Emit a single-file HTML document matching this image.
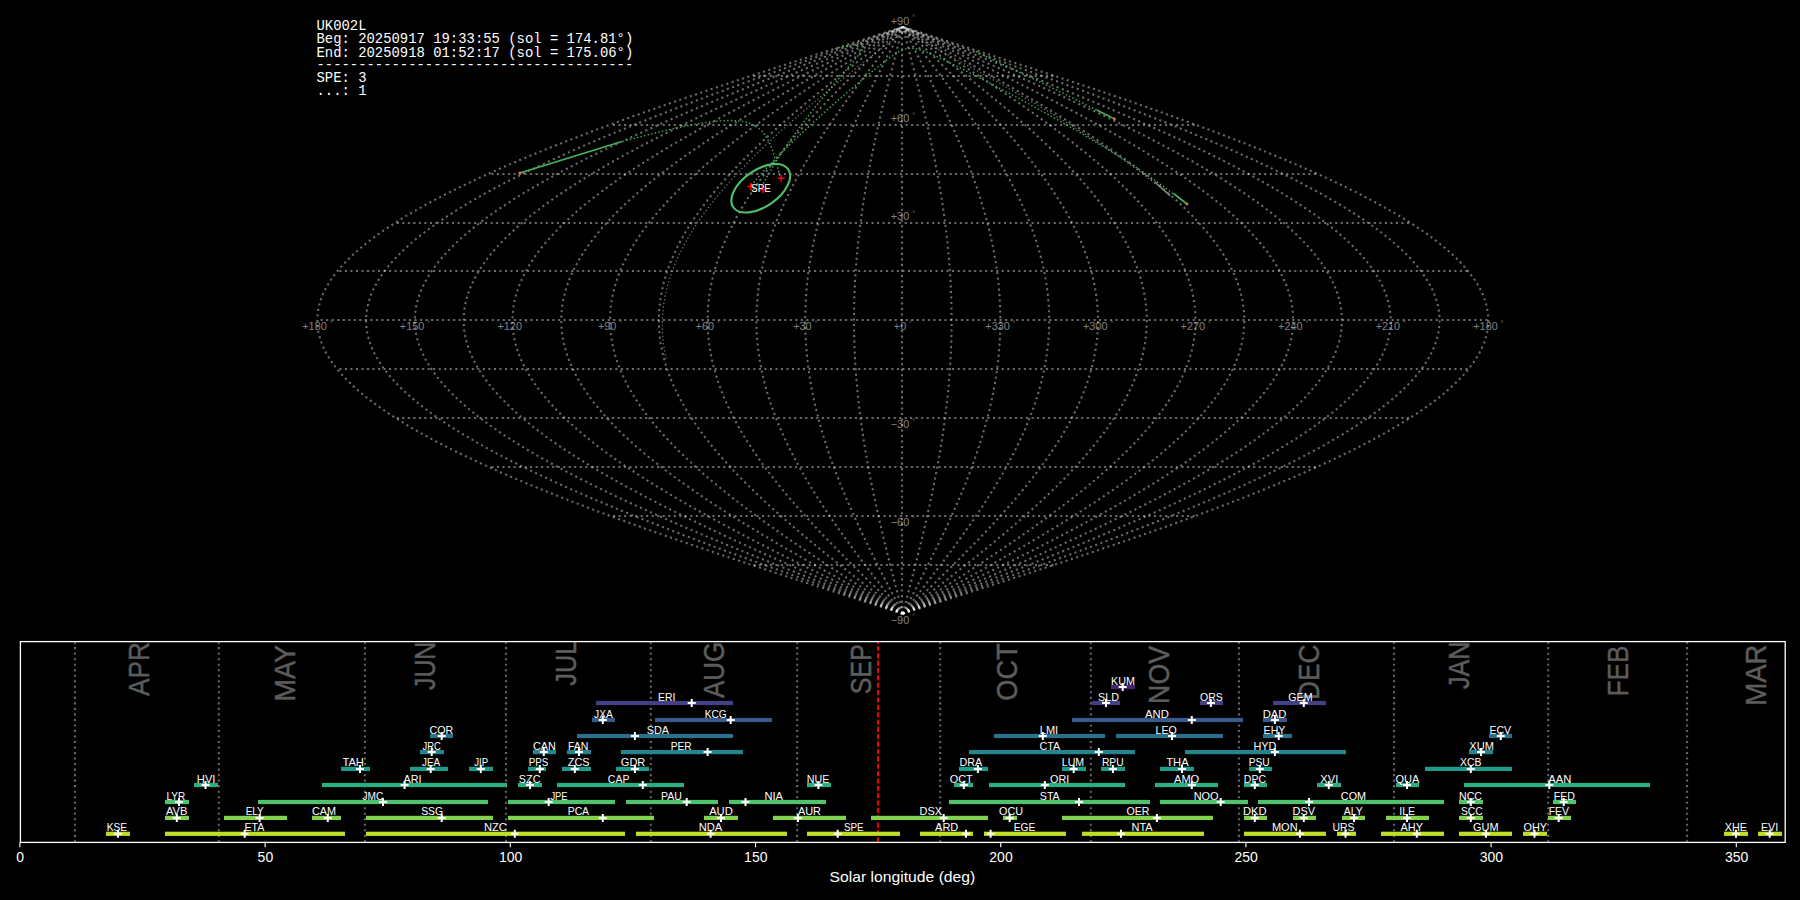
<!DOCTYPE html><html><head><meta charset="utf-8"><style>html,body{margin:0;padding:0;background:#000;width:1800px;height:900px;overflow:hidden}</style></head><body><svg width="1800" height="900" viewBox="0 0 1800 900" style="display:block">
<rect width="1800" height="900" fill="#000"/>
<g stroke="#fff" stroke-opacity="0.42" stroke-width="2.08" stroke-dasharray="2.08 3.44" fill="none">
<path d="M902.80,613.70 L897.69,612.07 L892.58,610.44 L887.47,608.81 L882.37,607.18 L877.26,605.55 L872.16,603.92 L867.06,602.29 L861.96,600.66 L856.86,599.03 L851.77,597.40 L846.68,595.77 L841.60,594.14 L836.52,592.51 L831.45,590.88 L826.38,589.25 L821.31,587.62 L816.26,585.99 L811.21,584.36 L806.16,582.73 L801.13,581.10 L796.10,579.47 L791.08,577.84 L786.07,576.21 L781.07,574.58 L776.07,572.95 L771.09,571.32 L766.12,569.69 L761.15,568.06 L756.20,566.43 L751.26,564.80 L746.33,563.17 L741.41,561.54 L736.51,559.91 L731.62,558.28 L726.74,556.65 L721.87,555.02 L717.02,553.39 L712.18,551.76 L707.35,550.13 L702.55,548.50 L697.75,546.87 L692.97,545.24 L688.21,543.61 L683.47,541.98 L678.74,540.35 L674.03,538.72 L669.33,537.09 L664.65,535.46 L660.00,533.83 L655.36,532.20 L650.73,530.57 L646.13,528.94 L641.55,527.31 L636.99,525.68 L632.44,524.05 L627.92,522.42 L623.42,520.79 L618.94,519.16 L614.48,517.53 L610.05,515.90 L605.63,514.27 L601.24,512.64 L596.88,511.01 L592.53,509.38 L588.21,507.75 L583.91,506.12 L579.64,504.49 L575.39,502.86 L571.17,501.23 L566.97,499.60 L562.80,497.97 L558.65,496.34 L554.53,494.71 L550.43,493.08 L546.37,491.45 L542.33,489.82 L538.32,488.19 L534.33,486.56 L530.37,484.93 L526.45,483.30 L522.55,481.67 L518.67,480.04 L514.83,478.41 L511.02,476.78 L507.24,475.15 L503.49,473.52 L499.77,471.89 L496.07,470.26 L492.41,468.63 L488.79,467.00 L485.19,465.37 L481.62,463.74 L478.09,462.11 L474.59,460.48 L471.12,458.85 L467.69,457.22 L464.28,455.59 L460.91,453.96 L457.58,452.33 L454.28,450.70 L451.01,449.07 L447.78,447.44 L444.58,445.81 L441.42,444.18 L438.29,442.55 L435.20,440.92 L432.14,439.29 L429.12,437.66 L426.13,436.03 L423.18,434.40 L420.27,432.77 L417.40,431.14 L414.56,429.51 L411.76,427.88 L408.99,426.25 L406.26,424.62 L403.58,422.99 L400.93,421.36 L398.31,419.73 L395.74,418.10 L393.20,416.47 L390.71,414.84 L388.25,413.21 L385.83,411.58 L383.45,409.95 L381.11,408.32 L378.81,406.69 L376.55,405.06 L374.33,403.43 L372.15,401.80 L370.01,400.17 L367.92,398.54 L365.86,396.91 L363.84,395.28 L361.86,393.65 L359.93,392.02 L358.04,390.39 L356.18,388.76 L354.37,387.13 L352.61,385.50 L350.88,383.87 L349.20,382.24 L347.55,380.61 L345.95,378.98 L344.39,377.35 L342.88,375.72 L341.41,374.09 L339.98,372.46 L338.59,370.83 L337.25,369.20 L335.95,367.57 L334.69,365.94 L333.47,364.31 L332.30,362.68 L331.17,361.05 L330.09,359.42 L329.05,357.79 L328.05,356.16 L327.10,354.53 L326.19,352.90 L325.33,351.27 L324.50,349.64 L323.73,348.01 L322.99,346.38 L322.31,344.75 L321.66,343.12 L321.06,341.49 L320.50,339.86 L319.99,338.23 L319.52,336.60 L319.10,334.97 L318.72,333.34 L318.39,331.71 L318.10,330.08 L317.85,328.45 L317.65,326.82 L317.50,325.19 L317.39,323.56 L317.32,321.93 L317.30,320.30 L317.32,318.67 L317.39,317.04 L317.50,315.41 L317.65,313.78 L317.85,312.15 L318.10,310.52 L318.39,308.89 L318.72,307.26 L319.10,305.63 L319.52,304.00 L319.99,302.37 L320.50,300.74 L321.06,299.11 L321.66,297.48 L322.31,295.85 L322.99,294.22 L323.73,292.59 L324.50,290.96 L325.33,289.33 L326.19,287.70 L327.10,286.07 L328.05,284.44 L329.05,282.81 L330.09,281.18 L331.17,279.55 L332.30,277.92 L333.47,276.29 L334.69,274.66 L335.95,273.03 L337.25,271.40 L338.59,269.77 L339.98,268.14 L341.41,266.51 L342.88,264.88 L344.39,263.25 L345.95,261.62 L347.55,259.99 L349.20,258.36 L350.88,256.73 L352.61,255.10 L354.37,253.47 L356.18,251.84 L358.04,250.21 L359.93,248.58 L361.86,246.95 L363.84,245.32 L365.86,243.69 L367.92,242.06 L370.01,240.43 L372.15,238.80 L374.33,237.17 L376.55,235.54 L378.81,233.91 L381.11,232.28 L383.45,230.65 L385.83,229.02 L388.25,227.39 L390.71,225.76 L393.20,224.13 L395.74,222.50 L398.31,220.87 L400.93,219.24 L403.58,217.61 L406.26,215.98 L408.99,214.35 L411.76,212.72 L414.56,211.09 L417.40,209.46 L420.27,207.83 L423.18,206.20 L426.13,204.57 L429.12,202.94 L432.14,201.31 L435.20,199.68 L438.29,198.05 L441.42,196.42 L444.58,194.79 L447.78,193.16 L451.01,191.53 L454.28,189.90 L457.58,188.27 L460.91,186.64 L464.28,185.01 L467.69,183.38 L471.12,181.75 L474.59,180.12 L478.09,178.49 L481.62,176.86 L485.19,175.23 L488.79,173.60 L492.41,171.97 L496.07,170.34 L499.77,168.71 L503.49,167.08 L507.24,165.45 L511.02,163.82 L514.83,162.19 L518.67,160.56 L522.55,158.93 L526.45,157.30 L530.37,155.67 L534.33,154.04 L538.32,152.41 L542.33,150.78 L546.37,149.15 L550.43,147.52 L554.53,145.89 L558.65,144.26 L562.80,142.63 L566.97,141.00 L571.17,139.37 L575.39,137.74 L579.64,136.11 L583.91,134.48 L588.21,132.85 L592.53,131.22 L596.88,129.59 L601.24,127.96 L605.63,126.33 L610.05,124.70 L614.48,123.07 L618.94,121.44 L623.42,119.81 L627.92,118.18 L632.44,116.55 L636.99,114.92 L641.55,113.29 L646.13,111.66 L650.73,110.03 L655.36,108.40 L660.00,106.77 L664.65,105.14 L669.33,103.51 L674.03,101.88 L678.74,100.25 L683.47,98.62 L688.21,96.99 L692.97,95.36 L697.75,93.73 L702.55,92.10 L707.35,90.47 L712.18,88.84 L717.02,87.21 L721.87,85.58 L726.74,83.95 L731.62,82.32 L736.51,80.69 L741.41,79.06 L746.33,77.43 L751.26,75.80 L756.20,74.17 L761.15,72.54 L766.12,70.91 L771.09,69.28 L776.07,67.65 L781.07,66.02 L786.07,64.39 L791.08,62.76 L796.10,61.13 L801.13,59.50 L806.16,57.87 L811.21,56.24 L816.26,54.61 L821.31,52.98 L826.38,51.35 L831.45,49.72 L836.52,48.09 L841.60,46.46 L846.68,44.83 L851.77,43.20 L856.86,41.57 L861.96,39.94 L867.06,38.31 L872.16,36.68 L877.26,35.05 L882.37,33.42 L887.47,31.79 L892.58,30.16 L897.69,28.53 L902.80,26.90"/>
<path d="M902.80,613.70 L898.12,612.07 L893.43,610.44 L888.75,608.81 L884.07,607.18 L879.39,605.55 L874.71,603.92 L870.03,602.29 L865.36,600.66 L860.69,599.03 L856.02,597.40 L851.36,595.77 L846.70,594.14 L842.04,592.51 L837.39,590.88 L832.75,589.25 L828.10,587.62 L823.47,585.99 L818.84,584.36 L814.22,582.73 L809.60,581.10 L804.99,579.47 L800.39,577.84 L795.80,576.21 L791.21,574.58 L786.63,572.95 L782.07,571.32 L777.51,569.69 L772.96,568.06 L768.42,566.43 L763.89,564.80 L759.37,563.17 L754.86,561.54 L750.37,559.91 L745.88,558.28 L741.41,556.65 L736.95,555.02 L732.50,553.39 L728.06,551.76 L723.64,550.13 L719.23,548.50 L714.84,546.87 L710.46,545.24 L706.09,543.61 L701.74,541.98 L697.41,540.35 L693.09,538.72 L688.79,537.09 L684.50,535.46 L680.23,533.83 L675.98,532.20 L671.74,530.57 L667.52,528.94 L663.32,527.31 L659.14,525.68 L654.97,524.05 L650.83,522.42 L646.70,520.79 L642.60,519.16 L638.51,517.53 L634.44,515.90 L630.40,514.27 L626.37,512.64 L622.37,511.01 L618.39,509.38 L614.42,507.75 L610.49,506.12 L606.57,504.49 L602.67,502.86 L598.80,501.23 L594.95,499.60 L591.13,497.97 L587.33,496.34 L583.55,494.71 L579.80,493.08 L576.07,491.45 L572.37,489.82 L568.69,488.19 L565.04,486.56 L561.41,484.93 L557.81,483.30 L554.23,481.67 L550.69,480.04 L547.16,478.41 L543.67,476.78 L540.20,475.15 L536.76,473.52 L533.35,471.89 L529.97,470.26 L526.61,468.63 L523.29,467.00 L519.99,465.37 L516.72,463.74 L513.48,462.11 L510.27,460.48 L507.09,458.85 L503.95,457.22 L500.83,455.59 L497.74,453.96 L494.68,452.33 L491.65,450.70 L488.66,449.07 L485.70,447.44 L482.76,445.81 L479.87,444.18 L477.00,442.55 L474.16,440.92 L471.36,439.29 L468.59,437.66 L465.85,436.03 L463.15,434.40 L460.48,432.77 L457.85,431.14 L455.24,429.51 L452.68,427.88 L450.14,426.25 L447.64,424.62 L445.18,422.99 L442.75,421.36 L440.35,419.73 L437.99,418.10 L435.67,416.47 L433.38,414.84 L431.13,413.21 L428.91,411.58 L426.73,409.95 L424.59,408.32 L422.48,406.69 L420.41,405.06 L418.37,403.43 L416.37,401.80 L414.41,400.17 L412.49,398.54 L410.60,396.91 L408.75,395.28 L406.94,393.65 L405.17,392.02 L403.43,390.39 L401.74,388.76 L400.08,387.13 L398.46,385.50 L396.87,383.87 L395.33,382.24 L393.82,380.61 L392.36,378.98 L390.93,377.35 L389.54,375.72 L388.19,374.09 L386.88,372.46 L385.61,370.83 L384.38,369.20 L383.18,367.57 L382.03,365.94 L380.92,364.31 L379.84,362.68 L378.81,361.05 L377.82,359.42 L376.86,357.79 L375.95,356.16 L375.08,354.53 L374.24,352.90 L373.45,351.27 L372.70,349.64 L371.98,348.01 L371.31,346.38 L370.68,344.75 L370.09,343.12 L369.54,341.49 L369.03,339.86 L368.56,338.23 L368.13,336.60 L367.74,334.97 L367.40,333.34 L367.09,331.71 L366.82,330.08 L366.60,328.45 L366.41,326.82 L366.27,325.19 L366.17,323.56 L366.11,321.93 L366.09,320.30 L366.11,318.67 L366.17,317.04 L366.27,315.41 L366.41,313.78 L366.60,312.15 L366.82,310.52 L367.09,308.89 L367.40,307.26 L367.74,305.63 L368.13,304.00 L368.56,302.37 L369.03,300.74 L369.54,299.11 L370.09,297.48 L370.68,295.85 L371.31,294.22 L371.98,292.59 L372.70,290.96 L373.45,289.33 L374.24,287.70 L375.08,286.07 L375.95,284.44 L376.86,282.81 L377.82,281.18 L378.81,279.55 L379.84,277.92 L380.92,276.29 L382.03,274.66 L383.18,273.03 L384.38,271.40 L385.61,269.77 L386.88,268.14 L388.19,266.51 L389.54,264.88 L390.93,263.25 L392.36,261.62 L393.82,259.99 L395.33,258.36 L396.87,256.73 L398.46,255.10 L400.08,253.47 L401.74,251.84 L403.43,250.21 L405.17,248.58 L406.94,246.95 L408.75,245.32 L410.60,243.69 L412.49,242.06 L414.41,240.43 L416.37,238.80 L418.37,237.17 L420.41,235.54 L422.48,233.91 L424.59,232.28 L426.73,230.65 L428.91,229.02 L431.13,227.39 L433.38,225.76 L435.67,224.13 L437.99,222.50 L440.35,220.87 L442.75,219.24 L445.18,217.61 L447.64,215.98 L450.14,214.35 L452.68,212.72 L455.24,211.09 L457.85,209.46 L460.48,207.83 L463.15,206.20 L465.85,204.57 L468.59,202.94 L471.36,201.31 L474.16,199.68 L477.00,198.05 L479.87,196.42 L482.76,194.79 L485.70,193.16 L488.66,191.53 L491.65,189.90 L494.68,188.27 L497.74,186.64 L500.83,185.01 L503.95,183.38 L507.09,181.75 L510.27,180.12 L513.48,178.49 L516.72,176.86 L519.99,175.23 L523.29,173.60 L526.61,171.97 L529.97,170.34 L533.35,168.71 L536.76,167.08 L540.20,165.45 L543.67,163.82 L547.16,162.19 L550.69,160.56 L554.23,158.93 L557.81,157.30 L561.41,155.67 L565.04,154.04 L568.69,152.41 L572.37,150.78 L576.07,149.15 L579.80,147.52 L583.55,145.89 L587.33,144.26 L591.13,142.63 L594.95,141.00 L598.80,139.37 L602.67,137.74 L606.57,136.11 L610.49,134.48 L614.42,132.85 L618.39,131.22 L622.37,129.59 L626.37,127.96 L630.40,126.33 L634.44,124.70 L638.51,123.07 L642.60,121.44 L646.70,119.81 L650.83,118.18 L654.97,116.55 L659.14,114.92 L663.32,113.29 L667.52,111.66 L671.74,110.03 L675.98,108.40 L680.23,106.77 L684.50,105.14 L688.79,103.51 L693.09,101.88 L697.41,100.25 L701.74,98.62 L706.09,96.99 L710.46,95.36 L714.84,93.73 L719.23,92.10 L723.64,90.47 L728.06,88.84 L732.50,87.21 L736.95,85.58 L741.41,83.95 L745.88,82.32 L750.37,80.69 L754.86,79.06 L759.37,77.43 L763.89,75.80 L768.42,74.17 L772.96,72.54 L777.51,70.91 L782.07,69.28 L786.63,67.65 L791.21,66.02 L795.80,64.39 L800.39,62.76 L804.99,61.13 L809.60,59.50 L814.22,57.87 L818.84,56.24 L823.47,54.61 L828.10,52.98 L832.75,51.35 L837.39,49.72 L842.04,48.09 L846.70,46.46 L851.36,44.83 L856.02,43.20 L860.69,41.57 L865.36,39.94 L870.03,38.31 L874.71,36.68 L879.39,35.05 L884.07,33.42 L888.75,31.79 L893.43,30.16 L898.12,28.53 L902.80,26.90"/>
<path d="M902.80,613.70 L898.54,612.07 L894.28,610.44 L890.03,608.81 L885.77,607.18 L881.52,605.55 L877.26,603.92 L873.01,602.29 L868.76,600.66 L864.52,599.03 L860.27,597.40 L856.03,595.77 L851.80,594.14 L847.57,592.51 L843.34,590.88 L839.11,589.25 L834.89,587.62 L830.68,585.99 L826.47,584.36 L822.27,582.73 L818.07,581.10 L813.88,579.47 L809.70,577.84 L805.52,576.21 L801.36,574.58 L797.19,572.95 L793.04,571.32 L788.90,569.69 L784.76,568.06 L780.63,566.43 L776.52,564.80 L772.41,563.17 L768.31,561.54 L764.22,559.91 L760.15,558.28 L756.08,556.65 L752.02,555.02 L747.98,553.39 L743.95,551.76 L739.93,550.13 L735.92,548.50 L731.93,546.87 L727.95,545.24 L723.98,543.61 L720.02,541.98 L716.08,540.35 L712.15,538.72 L708.24,537.09 L704.35,535.46 L700.46,533.83 L696.60,532.20 L692.75,530.57 L688.91,528.94 L685.09,527.31 L681.29,525.68 L677.50,524.05 L673.74,522.42 L669.98,520.79 L666.25,519.16 L662.54,517.53 L658.84,515.90 L655.16,514.27 L651.50,512.64 L647.86,511.01 L644.24,509.38 L640.64,507.75 L637.06,506.12 L633.50,504.49 L629.96,502.86 L626.44,501.23 L622.94,499.60 L619.46,497.97 L616.01,496.34 L612.57,494.71 L609.16,493.08 L605.77,491.45 L602.41,489.82 L599.06,488.19 L595.74,486.56 L592.44,484.93 L589.17,483.30 L585.92,481.67 L582.70,480.04 L579.49,478.41 L576.32,476.78 L573.17,475.15 L570.04,473.52 L566.94,471.89 L563.86,470.26 L560.81,468.63 L557.79,467.00 L554.79,465.37 L551.82,463.74 L548.88,462.11 L545.96,460.48 L543.07,458.85 L540.20,457.22 L537.37,455.59 L534.56,453.96 L531.78,452.33 L529.03,450.70 L526.31,449.07 L523.61,447.44 L520.95,445.81 L518.31,444.18 L515.71,442.55 L513.13,440.92 L510.58,439.29 L508.06,437.66 L505.58,436.03 L503.12,434.40 L500.69,432.77 L498.30,431.14 L495.93,429.51 L493.60,427.88 L491.29,426.25 L489.02,424.62 L486.78,422.99 L484.57,421.36 L482.39,419.73 L480.25,418.10 L478.14,416.47 L476.06,414.84 L474.01,413.21 L471.99,411.58 L470.01,409.95 L468.06,408.32 L466.14,406.69 L464.26,405.06 L462.41,403.43 L460.59,401.80 L458.81,400.17 L457.06,398.54 L455.35,396.91 L453.67,395.28 L452.02,393.65 L450.41,392.02 L448.83,390.39 L447.29,388.76 L445.78,387.13 L444.31,385.50 L442.87,383.87 L441.46,382.24 L440.09,380.61 L438.76,378.98 L437.46,377.35 L436.20,375.72 L434.97,374.09 L433.78,372.46 L432.63,370.83 L431.51,369.20 L430.42,367.57 L429.37,365.94 L428.36,364.31 L427.39,362.68 L426.45,361.05 L425.54,359.42 L424.68,357.79 L423.84,356.16 L423.05,354.53 L422.29,352.90 L421.57,351.27 L420.89,349.64 L420.24,348.01 L419.63,346.38 L419.05,344.75 L418.52,343.12 L418.02,341.49 L417.55,339.86 L417.13,338.23 L416.74,336.60 L416.38,334.97 L416.07,333.34 L415.79,331.71 L415.55,330.08 L415.34,328.45 L415.18,326.82 L415.05,325.19 L414.95,323.56 L414.90,321.93 L414.88,320.30 L414.90,318.67 L414.95,317.04 L415.05,315.41 L415.18,313.78 L415.34,312.15 L415.55,310.52 L415.79,308.89 L416.07,307.26 L416.38,305.63 L416.74,304.00 L417.13,302.37 L417.55,300.74 L418.02,299.11 L418.52,297.48 L419.05,295.85 L419.63,294.22 L420.24,292.59 L420.89,290.96 L421.57,289.33 L422.29,287.70 L423.05,286.07 L423.84,284.44 L424.68,282.81 L425.54,281.18 L426.45,279.55 L427.39,277.92 L428.36,276.29 L429.37,274.66 L430.42,273.03 L431.51,271.40 L432.63,269.77 L433.78,268.14 L434.97,266.51 L436.20,264.88 L437.46,263.25 L438.76,261.62 L440.09,259.99 L441.46,258.36 L442.87,256.73 L444.31,255.10 L445.78,253.47 L447.29,251.84 L448.83,250.21 L450.41,248.58 L452.02,246.95 L453.67,245.32 L455.35,243.69 L457.06,242.06 L458.81,240.43 L460.59,238.80 L462.41,237.17 L464.26,235.54 L466.14,233.91 L468.06,232.28 L470.01,230.65 L471.99,229.02 L474.01,227.39 L476.06,225.76 L478.14,224.13 L480.25,222.50 L482.39,220.87 L484.57,219.24 L486.78,217.61 L489.02,215.98 L491.29,214.35 L493.60,212.72 L495.93,211.09 L498.30,209.46 L500.69,207.83 L503.12,206.20 L505.58,204.57 L508.06,202.94 L510.58,201.31 L513.13,199.68 L515.71,198.05 L518.31,196.42 L520.95,194.79 L523.61,193.16 L526.31,191.53 L529.03,189.90 L531.78,188.27 L534.56,186.64 L537.37,185.01 L540.20,183.38 L543.07,181.75 L545.96,180.12 L548.88,178.49 L551.82,176.86 L554.79,175.23 L557.79,173.60 L560.81,171.97 L563.86,170.34 L566.94,168.71 L570.04,167.08 L573.17,165.45 L576.32,163.82 L579.49,162.19 L582.70,160.56 L585.92,158.93 L589.17,157.30 L592.44,155.67 L595.74,154.04 L599.06,152.41 L602.41,150.78 L605.77,149.15 L609.16,147.52 L612.57,145.89 L616.01,144.26 L619.46,142.63 L622.94,141.00 L626.44,139.37 L629.96,137.74 L633.50,136.11 L637.06,134.48 L640.64,132.85 L644.24,131.22 L647.86,129.59 L651.50,127.96 L655.16,126.33 L658.84,124.70 L662.54,123.07 L666.25,121.44 L669.98,119.81 L673.74,118.18 L677.50,116.55 L681.29,114.92 L685.09,113.29 L688.91,111.66 L692.75,110.03 L696.60,108.40 L700.46,106.77 L704.35,105.14 L708.24,103.51 L712.15,101.88 L716.08,100.25 L720.02,98.62 L723.98,96.99 L727.95,95.36 L731.93,93.73 L735.92,92.10 L739.93,90.47 L743.95,88.84 L747.98,87.21 L752.02,85.58 L756.08,83.95 L760.15,82.32 L764.22,80.69 L768.31,79.06 L772.41,77.43 L776.52,75.80 L780.63,74.17 L784.76,72.54 L788.90,70.91 L793.04,69.28 L797.19,67.65 L801.36,66.02 L805.52,64.39 L809.70,62.76 L813.88,61.13 L818.07,59.50 L822.27,57.87 L826.47,56.24 L830.68,54.61 L834.89,52.98 L839.11,51.35 L843.34,49.72 L847.57,48.09 L851.80,46.46 L856.03,44.83 L860.27,43.20 L864.52,41.57 L868.76,39.94 L873.01,38.31 L877.26,36.68 L881.52,35.05 L885.77,33.42 L890.03,31.79 L894.28,30.16 L898.54,28.53 L902.80,26.90"/>
<path d="M902.80,613.70 L898.97,612.07 L895.14,610.44 L891.30,608.81 L887.47,607.18 L883.65,605.55 L879.82,603.92 L875.99,602.29 L872.17,600.66 L868.35,599.03 L864.53,597.40 L860.71,595.77 L856.90,594.14 L853.09,592.51 L849.28,590.88 L845.48,589.25 L841.69,587.62 L837.89,585.99 L834.11,584.36 L830.32,582.73 L826.55,581.10 L822.78,579.47 L819.01,577.84 L815.25,576.21 L811.50,574.58 L807.76,572.95 L804.02,571.32 L800.29,569.69 L796.57,568.06 L792.85,566.43 L789.15,564.80 L785.45,563.17 L781.76,561.54 L778.08,559.91 L774.41,558.28 L770.75,556.65 L767.10,555.02 L763.46,553.39 L759.83,551.76 L756.22,550.13 L752.61,548.50 L749.01,546.87 L745.43,545.24 L741.86,543.61 L738.30,541.98 L734.75,540.35 L731.22,538.72 L727.70,537.09 L724.19,535.46 L720.70,533.83 L717.22,532.20 L713.75,530.57 L710.30,528.94 L706.86,527.31 L703.44,525.68 L700.03,524.05 L696.64,522.42 L693.27,520.79 L689.91,519.16 L686.56,517.53 L683.24,515.90 L679.93,514.27 L676.63,512.64 L673.36,511.01 L670.10,509.38 L666.86,507.75 L663.63,506.12 L660.43,504.49 L657.24,502.86 L654.08,501.23 L650.93,499.60 L647.80,497.97 L644.69,496.34 L641.60,494.71 L638.53,493.08 L635.48,491.45 L632.45,489.82 L629.44,488.19 L626.45,486.56 L623.48,484.93 L620.53,483.30 L617.61,481.67 L614.71,480.04 L611.82,478.41 L608.97,476.78 L606.13,475.15 L603.32,473.52 L600.52,471.89 L597.76,470.26 L595.01,468.63 L592.29,467.00 L589.59,465.37 L586.92,463.74 L584.27,462.11 L581.64,460.48 L579.04,458.85 L576.46,457.22 L573.91,455.59 L571.39,453.96 L568.88,452.33 L566.41,450.70 L563.96,449.07 L561.53,447.44 L559.13,445.81 L556.76,444.18 L554.42,442.55 L552.10,440.92 L549.80,439.29 L547.54,437.66 L545.30,436.03 L543.09,434.40 L540.90,432.77 L538.75,431.14 L536.62,429.51 L534.52,427.88 L532.44,426.25 L530.40,424.62 L528.38,422.99 L526.39,421.36 L524.43,419.73 L522.50,418.10 L520.60,416.47 L518.73,414.84 L516.89,413.21 L515.07,411.58 L513.29,409.95 L511.53,408.32 L509.81,406.69 L508.11,405.06 L506.45,403.43 L504.81,401.80 L503.21,400.17 L501.64,398.54 L500.09,396.91 L498.58,395.28 L497.10,393.65 L495.65,392.02 L494.23,390.39 L492.84,388.76 L491.48,387.13 L490.15,385.50 L488.86,383.87 L487.60,382.24 L486.36,380.61 L485.16,378.98 L484.00,377.35 L482.86,375.72 L481.76,374.09 L480.68,372.46 L479.64,370.83 L478.63,369.20 L477.66,367.57 L476.72,365.94 L475.81,364.31 L474.93,362.68 L474.08,361.05 L473.27,359.42 L472.49,357.79 L471.74,356.16 L471.03,354.53 L470.34,352.90 L469.69,351.27 L469.08,349.64 L468.50,348.01 L467.95,346.38 L467.43,344.75 L466.95,343.12 L466.49,341.49 L466.08,339.86 L465.69,338.23 L465.34,336.60 L465.03,334.97 L464.74,333.34 L464.49,331.71 L464.27,330.08 L464.09,328.45 L463.94,326.82 L463.82,325.19 L463.74,323.56 L463.69,321.93 L463.67,320.30 L463.69,318.67 L463.74,317.04 L463.82,315.41 L463.94,313.78 L464.09,312.15 L464.27,310.52 L464.49,308.89 L464.74,307.26 L465.03,305.63 L465.34,304.00 L465.69,302.37 L466.08,300.74 L466.49,299.11 L466.95,297.48 L467.43,295.85 L467.95,294.22 L468.50,292.59 L469.08,290.96 L469.69,289.33 L470.34,287.70 L471.03,286.07 L471.74,284.44 L472.49,282.81 L473.27,281.18 L474.08,279.55 L474.93,277.92 L475.81,276.29 L476.72,274.66 L477.66,273.03 L478.63,271.40 L479.64,269.77 L480.68,268.14 L481.76,266.51 L482.86,264.88 L484.00,263.25 L485.16,261.62 L486.36,259.99 L487.60,258.36 L488.86,256.73 L490.15,255.10 L491.48,253.47 L492.84,251.84 L494.23,250.21 L495.65,248.58 L497.10,246.95 L498.58,245.32 L500.09,243.69 L501.64,242.06 L503.21,240.43 L504.81,238.80 L506.45,237.17 L508.11,235.54 L509.81,233.91 L511.53,232.28 L513.29,230.65 L515.07,229.02 L516.89,227.39 L518.73,225.76 L520.60,224.13 L522.50,222.50 L524.43,220.87 L526.39,219.24 L528.38,217.61 L530.40,215.98 L532.44,214.35 L534.52,212.72 L536.62,211.09 L538.75,209.46 L540.90,207.83 L543.09,206.20 L545.30,204.57 L547.54,202.94 L549.80,201.31 L552.10,199.68 L554.42,198.05 L556.76,196.42 L559.13,194.79 L561.53,193.16 L563.96,191.53 L566.41,189.90 L568.88,188.27 L571.39,186.64 L573.91,185.01 L576.46,183.38 L579.04,181.75 L581.64,180.12 L584.27,178.49 L586.92,176.86 L589.59,175.23 L592.29,173.60 L595.01,171.97 L597.76,170.34 L600.52,168.71 L603.32,167.08 L606.13,165.45 L608.97,163.82 L611.82,162.19 L614.71,160.56 L617.61,158.93 L620.53,157.30 L623.48,155.67 L626.45,154.04 L629.44,152.41 L632.45,150.78 L635.48,149.15 L638.53,147.52 L641.60,145.89 L644.69,144.26 L647.80,142.63 L650.93,141.00 L654.08,139.37 L657.24,137.74 L660.43,136.11 L663.63,134.48 L666.86,132.85 L670.10,131.22 L673.36,129.59 L676.63,127.96 L679.93,126.33 L683.24,124.70 L686.56,123.07 L689.91,121.44 L693.27,119.81 L696.64,118.18 L700.03,116.55 L703.44,114.92 L706.86,113.29 L710.30,111.66 L713.75,110.03 L717.22,108.40 L720.70,106.77 L724.19,105.14 L727.70,103.51 L731.22,101.88 L734.75,100.25 L738.30,98.62 L741.86,96.99 L745.43,95.36 L749.01,93.73 L752.61,92.10 L756.22,90.47 L759.83,88.84 L763.46,87.21 L767.10,85.58 L770.75,83.95 L774.41,82.32 L778.08,80.69 L781.76,79.06 L785.45,77.43 L789.15,75.80 L792.85,74.17 L796.57,72.54 L800.29,70.91 L804.02,69.28 L807.76,67.65 L811.50,66.02 L815.25,64.39 L819.01,62.76 L822.78,61.13 L826.55,59.50 L830.32,57.87 L834.11,56.24 L837.89,54.61 L841.69,52.98 L845.48,51.35 L849.28,49.72 L853.09,48.09 L856.90,46.46 L860.71,44.83 L864.53,43.20 L868.35,41.57 L872.17,39.94 L875.99,38.31 L879.82,36.68 L883.65,35.05 L887.47,33.42 L891.30,31.79 L895.14,30.16 L898.97,28.53 L902.80,26.90"/>
<path d="M902.80,613.70 L899.39,612.07 L895.99,610.44 L892.58,608.81 L889.18,607.18 L885.77,605.55 L882.37,603.92 L878.97,602.29 L875.57,600.66 L872.17,599.03 L868.78,597.40 L865.39,595.77 L862.00,594.14 L858.61,592.51 L855.23,590.88 L851.85,589.25 L848.48,587.62 L845.10,585.99 L841.74,584.36 L838.38,582.73 L835.02,581.10 L831.67,579.47 L828.32,577.84 L824.98,576.21 L821.64,574.58 L818.32,572.95 L814.99,571.32 L811.68,569.69 L808.37,568.06 L805.07,566.43 L801.77,564.80 L798.49,563.17 L795.21,561.54 L791.94,559.91 L788.68,558.28 L785.42,556.65 L782.18,555.02 L778.94,553.39 L775.72,551.76 L772.50,550.13 L769.30,548.50 L766.10,546.87 L762.92,545.24 L759.74,543.61 L756.58,541.98 L753.42,540.35 L750.28,538.72 L747.15,537.09 L744.04,535.46 L740.93,533.83 L737.84,532.20 L734.76,530.57 L731.69,528.94 L728.63,527.31 L725.59,525.68 L722.56,524.05 L719.55,522.42 L716.55,520.79 L713.56,519.16 L710.59,517.53 L707.63,515.90 L704.69,514.27 L701.76,512.64 L698.85,511.01 L695.95,509.38 L693.07,507.75 L690.21,506.12 L687.36,504.49 L684.53,502.86 L681.71,501.23 L678.91,499.60 L676.13,497.97 L673.37,496.34 L670.62,494.71 L667.89,493.08 L665.18,491.45 L662.49,489.82 L659.81,488.19 L657.15,486.56 L654.52,484.93 L651.90,483.30 L649.30,481.67 L646.72,480.04 L644.16,478.41 L641.61,476.78 L639.09,475.15 L636.59,473.52 L634.11,471.89 L631.65,470.26 L629.21,468.63 L626.79,467.00 L624.39,465.37 L622.02,463.74 L619.66,462.11 L617.33,460.48 L615.01,458.85 L612.72,457.22 L610.46,455.59 L608.21,453.96 L605.99,452.33 L603.79,450.70 L601.61,449.07 L599.45,447.44 L597.32,445.81 L595.21,444.18 L593.13,442.55 L591.06,440.92 L589.03,439.29 L587.01,437.66 L585.02,436.03 L583.06,434.40 L581.11,432.77 L579.20,431.14 L577.30,429.51 L575.44,427.88 L573.59,426.25 L571.78,424.62 L569.98,422.99 L568.22,421.36 L566.48,419.73 L564.76,418.10 L563.07,416.47 L561.40,414.84 L559.77,413.21 L558.15,411.58 L556.57,409.95 L555.01,408.32 L553.47,406.69 L551.97,405.06 L550.49,403.43 L549.04,401.80 L547.61,400.17 L546.21,398.54 L544.84,396.91 L543.49,395.28 L542.18,393.65 L540.89,392.02 L539.62,390.39 L538.39,388.76 L537.18,387.13 L536.00,385.50 L534.85,383.87 L533.73,382.24 L532.64,380.61 L531.57,378.98 L530.53,377.35 L529.52,375.72 L528.54,374.09 L527.58,372.46 L526.66,370.83 L525.76,369.20 L524.90,367.57 L524.06,365.94 L523.25,364.31 L522.47,362.68 L521.72,361.05 L520.99,359.42 L520.30,357.79 L519.64,356.16 L519.00,354.53 L518.39,352.90 L517.82,351.27 L517.27,349.64 L516.75,348.01 L516.26,346.38 L515.80,344.75 L515.37,343.12 L514.97,341.49 L514.60,339.86 L514.26,338.23 L513.95,336.60 L513.67,334.97 L513.41,333.34 L513.19,331.71 L513.00,330.08 L512.84,328.45 L512.70,326.82 L512.60,325.19 L512.52,323.56 L512.48,321.93 L512.46,320.30 L512.48,318.67 L512.52,317.04 L512.60,315.41 L512.70,313.78 L512.84,312.15 L513.00,310.52 L513.19,308.89 L513.41,307.26 L513.67,305.63 L513.95,304.00 L514.26,302.37 L514.60,300.74 L514.97,299.11 L515.37,297.48 L515.80,295.85 L516.26,294.22 L516.75,292.59 L517.27,290.96 L517.82,289.33 L518.39,287.70 L519.00,286.07 L519.64,284.44 L520.30,282.81 L520.99,281.18 L521.72,279.55 L522.47,277.92 L523.25,276.29 L524.06,274.66 L524.90,273.03 L525.76,271.40 L526.66,269.77 L527.58,268.14 L528.54,266.51 L529.52,264.88 L530.53,263.25 L531.57,261.62 L532.64,259.99 L533.73,258.36 L534.85,256.73 L536.00,255.10 L537.18,253.47 L538.39,251.84 L539.62,250.21 L540.89,248.58 L542.18,246.95 L543.49,245.32 L544.84,243.69 L546.21,242.06 L547.61,240.43 L549.04,238.80 L550.49,237.17 L551.97,235.54 L553.47,233.91 L555.01,232.28 L556.57,230.65 L558.15,229.02 L559.77,227.39 L561.40,225.76 L563.07,224.13 L564.76,222.50 L566.48,220.87 L568.22,219.24 L569.98,217.61 L571.78,215.98 L573.59,214.35 L575.44,212.72 L577.30,211.09 L579.20,209.46 L581.11,207.83 L583.06,206.20 L585.02,204.57 L587.01,202.94 L589.03,201.31 L591.06,199.68 L593.13,198.05 L595.21,196.42 L597.32,194.79 L599.45,193.16 L601.61,191.53 L603.79,189.90 L605.99,188.27 L608.21,186.64 L610.46,185.01 L612.72,183.38 L615.01,181.75 L617.33,180.12 L619.66,178.49 L622.02,176.86 L624.39,175.23 L626.79,173.60 L629.21,171.97 L631.65,170.34 L634.11,168.71 L636.59,167.08 L639.09,165.45 L641.61,163.82 L644.16,162.19 L646.72,160.56 L649.30,158.93 L651.90,157.30 L654.52,155.67 L657.15,154.04 L659.81,152.41 L662.49,150.78 L665.18,149.15 L667.89,147.52 L670.62,145.89 L673.37,144.26 L676.13,142.63 L678.91,141.00 L681.71,139.37 L684.53,137.74 L687.36,136.11 L690.21,134.48 L693.07,132.85 L695.95,131.22 L698.85,129.59 L701.76,127.96 L704.69,126.33 L707.63,124.70 L710.59,123.07 L713.56,121.44 L716.55,119.81 L719.55,118.18 L722.56,116.55 L725.59,114.92 L728.63,113.29 L731.69,111.66 L734.76,110.03 L737.84,108.40 L740.93,106.77 L744.04,105.14 L747.15,103.51 L750.28,101.88 L753.42,100.25 L756.58,98.62 L759.74,96.99 L762.92,95.36 L766.10,93.73 L769.30,92.10 L772.50,90.47 L775.72,88.84 L778.94,87.21 L782.18,85.58 L785.42,83.95 L788.68,82.32 L791.94,80.69 L795.21,79.06 L798.49,77.43 L801.77,75.80 L805.07,74.17 L808.37,72.54 L811.68,70.91 L814.99,69.28 L818.32,67.65 L821.64,66.02 L824.98,64.39 L828.32,62.76 L831.67,61.13 L835.02,59.50 L838.38,57.87 L841.74,56.24 L845.10,54.61 L848.48,52.98 L851.85,51.35 L855.23,49.72 L858.61,48.09 L862.00,46.46 L865.39,44.83 L868.78,43.20 L872.17,41.57 L875.57,39.94 L878.97,38.31 L882.37,36.68 L885.77,35.05 L889.18,33.42 L892.58,31.79 L895.99,30.16 L899.39,28.53 L902.80,26.90"/>
<path d="M902.80,613.70 L899.82,612.07 L896.84,610.44 L893.86,608.81 L890.88,607.18 L887.90,605.55 L884.92,603.92 L881.95,602.29 L878.98,600.66 L876.00,599.03 L873.03,597.40 L870.06,595.77 L867.10,594.14 L864.14,592.51 L861.18,590.88 L858.22,589.25 L855.27,587.62 L852.32,585.99 L849.37,584.36 L846.43,582.73 L843.49,581.10 L840.56,579.47 L837.63,577.84 L834.71,576.21 L831.79,574.58 L828.88,572.95 L825.97,571.32 L823.07,569.69 L820.17,568.06 L817.28,566.43 L814.40,564.80 L811.53,563.17 L808.66,561.54 L805.80,559.91 L802.94,558.28 L800.10,556.65 L797.26,555.02 L794.43,553.39 L791.60,551.76 L788.79,550.13 L785.99,548.50 L783.19,546.87 L780.40,545.24 L777.62,543.61 L774.86,541.98 L772.10,540.35 L769.35,538.72 L766.61,537.09 L763.88,535.46 L761.16,533.83 L758.46,532.20 L755.76,530.57 L753.08,528.94 L750.40,527.31 L747.74,525.68 L745.09,524.05 L742.45,522.42 L739.83,520.79 L737.22,519.16 L734.62,517.53 L732.03,515.90 L729.45,514.27 L726.89,512.64 L724.34,511.01 L721.81,509.38 L719.29,507.75 L716.78,506.12 L714.29,504.49 L711.81,502.86 L709.35,501.23 L706.90,499.60 L704.46,497.97 L702.05,496.34 L699.64,494.71 L697.25,493.08 L694.88,491.45 L692.52,489.82 L690.18,488.19 L687.86,486.56 L685.55,484.93 L683.26,483.30 L680.98,481.67 L678.73,480.04 L676.49,478.41 L674.26,476.78 L672.06,475.15 L669.87,473.52 L667.70,471.89 L665.54,470.26 L663.41,468.63 L661.29,467.00 L659.19,465.37 L657.11,463.74 L655.05,462.11 L653.01,460.48 L650.99,458.85 L648.98,457.22 L647.00,455.59 L645.03,453.96 L643.09,452.33 L641.16,450.70 L639.26,449.07 L637.37,447.44 L635.50,445.81 L633.66,444.18 L631.83,442.55 L630.03,440.92 L628.25,439.29 L626.49,437.66 L624.74,436.03 L623.02,434.40 L621.32,432.77 L619.65,431.14 L617.99,429.51 L616.36,427.88 L614.74,426.25 L613.15,424.62 L611.59,422.99 L610.04,421.36 L608.52,419.73 L607.01,418.10 L605.54,416.47 L604.08,414.84 L602.65,413.21 L601.23,411.58 L599.85,409.95 L598.48,408.32 L597.14,406.69 L595.82,405.06 L594.53,403.43 L593.26,401.80 L592.01,400.17 L590.78,398.54 L589.58,396.91 L588.41,395.28 L587.25,393.65 L586.13,392.02 L585.02,390.39 L583.94,388.76 L582.89,387.13 L581.85,385.50 L580.85,383.87 L579.86,382.24 L578.91,380.61 L577.97,378.98 L577.06,377.35 L576.18,375.72 L575.32,374.09 L574.49,372.46 L573.68,370.83 L572.89,369.20 L572.13,367.57 L571.40,365.94 L570.69,364.31 L570.01,362.68 L569.35,361.05 L568.72,359.42 L568.11,357.79 L567.53,356.16 L566.98,354.53 L566.44,352.90 L565.94,351.27 L565.46,349.64 L565.01,348.01 L564.58,346.38 L564.18,344.75 L563.80,343.12 L563.45,341.49 L563.13,339.86 L562.83,338.23 L562.56,336.60 L562.31,334.97 L562.09,333.34 L561.89,331.71 L561.72,330.08 L561.58,328.45 L561.46,326.82 L561.37,325.19 L561.31,323.56 L561.27,321.93 L561.26,320.30 L561.27,318.67 L561.31,317.04 L561.37,315.41 L561.46,313.78 L561.58,312.15 L561.72,310.52 L561.89,308.89 L562.09,307.26 L562.31,305.63 L562.56,304.00 L562.83,302.37 L563.13,300.74 L563.45,299.11 L563.80,297.48 L564.18,295.85 L564.58,294.22 L565.01,292.59 L565.46,290.96 L565.94,289.33 L566.44,287.70 L566.98,286.07 L567.53,284.44 L568.11,282.81 L568.72,281.18 L569.35,279.55 L570.01,277.92 L570.69,276.29 L571.40,274.66 L572.13,273.03 L572.89,271.40 L573.68,269.77 L574.49,268.14 L575.32,266.51 L576.18,264.88 L577.06,263.25 L577.97,261.62 L578.91,259.99 L579.86,258.36 L580.85,256.73 L581.85,255.10 L582.89,253.47 L583.94,251.84 L585.02,250.21 L586.13,248.58 L587.25,246.95 L588.41,245.32 L589.58,243.69 L590.78,242.06 L592.01,240.43 L593.26,238.80 L594.53,237.17 L595.82,235.54 L597.14,233.91 L598.48,232.28 L599.85,230.65 L601.23,229.02 L602.65,227.39 L604.08,225.76 L605.54,224.13 L607.01,222.50 L608.52,220.87 L610.04,219.24 L611.59,217.61 L613.15,215.98 L614.74,214.35 L616.36,212.72 L617.99,211.09 L619.65,209.46 L621.32,207.83 L623.02,206.20 L624.74,204.57 L626.49,202.94 L628.25,201.31 L630.03,199.68 L631.83,198.05 L633.66,196.42 L635.50,194.79 L637.37,193.16 L639.26,191.53 L641.16,189.90 L643.09,188.27 L645.03,186.64 L647.00,185.01 L648.98,183.38 L650.99,181.75 L653.01,180.12 L655.05,178.49 L657.11,176.86 L659.19,175.23 L661.29,173.60 L663.41,171.97 L665.54,170.34 L667.70,168.71 L669.87,167.08 L672.06,165.45 L674.26,163.82 L676.49,162.19 L678.73,160.56 L680.98,158.93 L683.26,157.30 L685.55,155.67 L687.86,154.04 L690.18,152.41 L692.52,150.78 L694.88,149.15 L697.25,147.52 L699.64,145.89 L702.05,144.26 L704.46,142.63 L706.90,141.00 L709.35,139.37 L711.81,137.74 L714.29,136.11 L716.78,134.48 L719.29,132.85 L721.81,131.22 L724.34,129.59 L726.89,127.96 L729.45,126.33 L732.03,124.70 L734.62,123.07 L737.22,121.44 L739.83,119.81 L742.45,118.18 L745.09,116.55 L747.74,114.92 L750.40,113.29 L753.08,111.66 L755.76,110.03 L758.46,108.40 L761.16,106.77 L763.88,105.14 L766.61,103.51 L769.35,101.88 L772.10,100.25 L774.86,98.62 L777.62,96.99 L780.40,95.36 L783.19,93.73 L785.99,92.10 L788.79,90.47 L791.60,88.84 L794.43,87.21 L797.26,85.58 L800.10,83.95 L802.94,82.32 L805.80,80.69 L808.66,79.06 L811.53,77.43 L814.40,75.80 L817.28,74.17 L820.17,72.54 L823.07,70.91 L825.97,69.28 L828.88,67.65 L831.79,66.02 L834.71,64.39 L837.63,62.76 L840.56,61.13 L843.49,59.50 L846.43,57.87 L849.37,56.24 L852.32,54.61 L855.27,52.98 L858.22,51.35 L861.18,49.72 L864.14,48.09 L867.10,46.46 L870.06,44.83 L873.03,43.20 L876.00,41.57 L878.98,39.94 L881.95,38.31 L884.92,36.68 L887.90,35.05 L890.88,33.42 L893.86,31.79 L896.84,30.16 L899.82,28.53 L902.80,26.90"/>
<path d="M902.80,613.70 L900.25,612.07 L897.69,610.44 L895.14,608.81 L892.58,607.18 L890.03,605.55 L887.48,603.92 L884.93,602.29 L882.38,600.66 L879.83,599.03 L877.28,597.40 L874.74,595.77 L872.20,594.14 L869.66,592.51 L867.12,590.88 L864.59,589.25 L862.06,587.62 L859.53,585.99 L857.00,584.36 L854.48,582.73 L851.96,581.10 L849.45,579.47 L846.94,577.84 L844.43,576.21 L841.93,574.58 L839.44,572.95 L836.95,571.32 L834.46,569.69 L831.98,568.06 L829.50,566.43 L827.03,564.80 L824.57,563.17 L822.11,561.54 L819.65,559.91 L817.21,558.28 L814.77,556.65 L812.33,555.02 L809.91,553.39 L807.49,551.76 L805.08,550.13 L802.67,548.50 L800.28,546.87 L797.89,545.24 L795.51,543.61 L793.13,541.98 L790.77,540.35 L788.41,538.72 L786.07,537.09 L783.73,535.46 L781.40,533.83 L779.08,532.20 L776.77,530.57 L774.47,528.94 L772.17,527.31 L769.89,525.68 L767.62,524.05 L765.36,522.42 L763.11,520.79 L760.87,519.16 L758.64,517.53 L756.42,515.90 L754.22,514.27 L752.02,512.64 L749.84,511.01 L747.67,509.38 L745.50,507.75 L743.36,506.12 L741.22,504.49 L739.10,502.86 L736.98,501.23 L734.88,499.60 L732.80,497.97 L730.72,496.34 L728.66,494.71 L726.62,493.08 L724.58,491.45 L722.56,489.82 L720.56,488.19 L718.57,486.56 L716.59,484.93 L714.62,483.30 L712.67,481.67 L710.74,480.04 L708.82,478.41 L706.91,476.78 L705.02,475.15 L703.14,473.52 L701.28,471.89 L699.44,470.26 L697.61,468.63 L695.79,467.00 L693.99,465.37 L692.21,463.74 L690.45,462.11 L688.69,460.48 L686.96,458.85 L685.24,457.22 L683.54,455.59 L681.86,453.96 L680.19,452.33 L678.54,450.70 L676.91,449.07 L675.29,447.44 L673.69,445.81 L672.11,444.18 L670.54,442.55 L669.00,440.92 L667.47,439.29 L665.96,437.66 L664.47,436.03 L662.99,434.40 L661.54,432.77 L660.10,431.14 L658.68,429.51 L657.28,427.88 L655.90,426.25 L654.53,424.62 L653.19,422.99 L651.86,421.36 L650.56,419.73 L649.27,418.10 L648.00,416.47 L646.75,414.84 L645.52,413.21 L644.32,411.58 L643.13,409.95 L641.96,408.32 L640.81,406.69 L639.68,405.06 L638.57,403.43 L637.48,401.80 L636.41,400.17 L635.36,398.54 L634.33,396.91 L633.32,395.28 L632.33,393.65 L631.37,392.02 L630.42,390.39 L629.49,388.76 L628.59,387.13 L627.70,385.50 L626.84,383.87 L626.00,382.24 L625.18,380.61 L624.38,378.98 L623.60,377.35 L622.84,375.72 L622.10,374.09 L621.39,372.46 L620.70,370.83 L620.02,369.20 L619.37,367.57 L618.74,365.94 L618.14,364.31 L617.55,362.68 L616.99,361.05 L616.45,359.42 L615.93,357.79 L615.43,356.16 L614.95,354.53 L614.50,352.90 L614.06,351.27 L613.65,349.64 L613.26,348.01 L612.90,346.38 L612.55,344.75 L612.23,343.12 L611.93,341.49 L611.65,339.86 L611.40,338.23 L611.16,336.60 L610.95,334.97 L610.76,333.34 L610.59,331.71 L610.45,330.08 L610.33,328.45 L610.23,326.82 L610.15,325.19 L610.09,323.56 L610.06,321.93 L610.05,320.30 L610.06,318.67 L610.09,317.04 L610.15,315.41 L610.23,313.78 L610.33,312.15 L610.45,310.52 L610.59,308.89 L610.76,307.26 L610.95,305.63 L611.16,304.00 L611.40,302.37 L611.65,300.74 L611.93,299.11 L612.23,297.48 L612.55,295.85 L612.90,294.22 L613.26,292.59 L613.65,290.96 L614.06,289.33 L614.50,287.70 L614.95,286.07 L615.43,284.44 L615.93,282.81 L616.45,281.18 L616.99,279.55 L617.55,277.92 L618.14,276.29 L618.74,274.66 L619.37,273.03 L620.02,271.40 L620.70,269.77 L621.39,268.14 L622.10,266.51 L622.84,264.88 L623.60,263.25 L624.38,261.62 L625.18,259.99 L626.00,258.36 L626.84,256.73 L627.70,255.10 L628.59,253.47 L629.49,251.84 L630.42,250.21 L631.37,248.58 L632.33,246.95 L633.32,245.32 L634.33,243.69 L635.36,242.06 L636.41,240.43 L637.48,238.80 L638.57,237.17 L639.68,235.54 L640.81,233.91 L641.96,232.28 L643.13,230.65 L644.32,229.02 L645.52,227.39 L646.75,225.76 L648.00,224.13 L649.27,222.50 L650.56,220.87 L651.86,219.24 L653.19,217.61 L654.53,215.98 L655.90,214.35 L657.28,212.72 L658.68,211.09 L660.10,209.46 L661.54,207.83 L662.99,206.20 L664.47,204.57 L665.96,202.94 L667.47,201.31 L669.00,199.68 L670.54,198.05 L672.11,196.42 L673.69,194.79 L675.29,193.16 L676.91,191.53 L678.54,189.90 L680.19,188.27 L681.86,186.64 L683.54,185.01 L685.24,183.38 L686.96,181.75 L688.69,180.12 L690.45,178.49 L692.21,176.86 L693.99,175.23 L695.79,173.60 L697.61,171.97 L699.44,170.34 L701.28,168.71 L703.14,167.08 L705.02,165.45 L706.91,163.82 L708.82,162.19 L710.74,160.56 L712.67,158.93 L714.62,157.30 L716.59,155.67 L718.57,154.04 L720.56,152.41 L722.56,150.78 L724.58,149.15 L726.62,147.52 L728.66,145.89 L730.72,144.26 L732.80,142.63 L734.88,141.00 L736.98,139.37 L739.10,137.74 L741.22,136.11 L743.36,134.48 L745.50,132.85 L747.67,131.22 L749.84,129.59 L752.02,127.96 L754.22,126.33 L756.42,124.70 L758.64,123.07 L760.87,121.44 L763.11,119.81 L765.36,118.18 L767.62,116.55 L769.89,114.92 L772.17,113.29 L774.47,111.66 L776.77,110.03 L779.08,108.40 L781.40,106.77 L783.73,105.14 L786.07,103.51 L788.41,101.88 L790.77,100.25 L793.13,98.62 L795.51,96.99 L797.89,95.36 L800.28,93.73 L802.67,92.10 L805.08,90.47 L807.49,88.84 L809.91,87.21 L812.33,85.58 L814.77,83.95 L817.21,82.32 L819.65,80.69 L822.11,79.06 L824.57,77.43 L827.03,75.80 L829.50,74.17 L831.98,72.54 L834.46,70.91 L836.95,69.28 L839.44,67.65 L841.93,66.02 L844.43,64.39 L846.94,62.76 L849.45,61.13 L851.96,59.50 L854.48,57.87 L857.00,56.24 L859.53,54.61 L862.06,52.98 L864.59,51.35 L867.12,49.72 L869.66,48.09 L872.20,46.46 L874.74,44.83 L877.28,43.20 L879.83,41.57 L882.38,39.94 L884.93,38.31 L887.48,36.68 L890.03,35.05 L892.58,33.42 L895.14,31.79 L897.69,30.16 L900.25,28.53 L902.80,26.90"/>
<path d="M902.80,613.70 L900.67,612.07 L898.54,610.44 L896.41,608.81 L894.29,607.18 L892.16,605.55 L890.03,603.92 L887.91,602.29 L885.78,600.66 L883.66,599.03 L881.54,597.40 L879.42,595.77 L877.30,594.14 L875.18,592.51 L873.07,590.88 L870.96,589.25 L868.85,587.62 L866.74,585.99 L864.64,584.36 L862.53,582.73 L860.44,581.10 L858.34,579.47 L856.25,577.84 L854.16,576.21 L852.08,574.58 L850.00,572.95 L847.92,571.32 L845.85,569.69 L843.78,568.06 L841.72,566.43 L839.66,564.80 L837.60,563.17 L835.56,561.54 L833.51,559.91 L831.47,558.28 L829.44,556.65 L827.41,555.02 L825.39,553.39 L823.37,551.76 L821.36,550.13 L819.36,548.50 L817.36,546.87 L815.37,545.24 L813.39,543.61 L811.41,541.98 L809.44,540.35 L807.48,538.72 L805.52,537.09 L803.57,535.46 L801.63,533.83 L799.70,532.20 L797.77,530.57 L795.85,528.94 L793.95,527.31 L792.04,525.68 L790.15,524.05 L788.27,522.42 L786.39,520.79 L784.53,519.16 L782.67,517.53 L780.82,515.90 L778.98,514.27 L777.15,512.64 L775.33,511.01 L773.52,509.38 L771.72,507.75 L769.93,506.12 L768.15,504.49 L766.38,502.86 L764.62,501.23 L762.87,499.60 L761.13,497.97 L759.40,496.34 L757.69,494.71 L755.98,493.08 L754.29,491.45 L752.60,489.82 L750.93,488.19 L749.27,486.56 L747.62,484.93 L745.99,483.30 L744.36,481.67 L742.75,480.04 L741.15,478.41 L739.56,476.78 L737.98,475.15 L736.42,473.52 L734.87,471.89 L733.33,470.26 L731.81,468.63 L730.29,467.00 L728.80,465.37 L727.31,463.74 L725.84,462.11 L724.38,460.48 L722.93,458.85 L721.50,457.22 L720.08,455.59 L718.68,453.96 L717.29,452.33 L715.92,450.70 L714.55,449.07 L713.21,447.44 L711.87,445.81 L710.56,444.18 L709.25,442.55 L707.96,440.92 L706.69,439.29 L705.43,437.66 L704.19,436.03 L702.96,434.40 L701.75,432.77 L700.55,431.14 L699.37,429.51 L698.20,427.88 L697.05,426.25 L695.91,424.62 L694.79,422.99 L693.69,421.36 L692.60,419.73 L691.52,418.10 L690.47,416.47 L689.43,414.84 L688.40,413.21 L687.40,411.58 L686.40,409.95 L685.43,408.32 L684.47,406.69 L683.53,405.06 L682.61,403.43 L681.70,401.80 L680.81,400.17 L679.93,398.54 L679.07,396.91 L678.23,395.28 L677.41,393.65 L676.60,392.02 L675.82,390.39 L675.04,388.76 L674.29,387.13 L673.55,385.50 L672.83,383.87 L672.13,382.24 L671.45,380.61 L670.78,378.98 L670.13,377.35 L669.50,375.72 L668.89,374.09 L668.29,372.46 L667.71,370.83 L667.15,369.20 L666.61,367.57 L666.09,365.94 L665.58,364.31 L665.09,362.68 L664.62,361.05 L664.17,359.42 L663.74,357.79 L663.32,356.16 L662.93,354.53 L662.55,352.90 L662.19,351.27 L661.84,349.64 L661.52,348.01 L661.21,346.38 L660.93,344.75 L660.66,343.12 L660.41,341.49 L660.18,339.86 L659.96,338.23 L659.77,336.60 L659.59,334.97 L659.43,333.34 L659.30,331.71 L659.17,330.08 L659.07,328.45 L658.99,326.82 L658.92,325.19 L658.88,323.56 L658.85,321.93 L658.84,320.30 L658.85,318.67 L658.88,317.04 L658.92,315.41 L658.99,313.78 L659.07,312.15 L659.17,310.52 L659.30,308.89 L659.43,307.26 L659.59,305.63 L659.77,304.00 L659.96,302.37 L660.18,300.74 L660.41,299.11 L660.66,297.48 L660.93,295.85 L661.21,294.22 L661.52,292.59 L661.84,290.96 L662.19,289.33 L662.55,287.70 L662.93,286.07 L663.32,284.44 L663.74,282.81 L664.17,281.18 L664.62,279.55 L665.09,277.92 L665.58,276.29 L666.09,274.66 L666.61,273.03 L667.15,271.40 L667.71,269.77 L668.29,268.14 L668.89,266.51 L669.50,264.88 L670.13,263.25 L670.78,261.62 L671.45,259.99 L672.13,258.36 L672.83,256.73 L673.55,255.10 L674.29,253.47 L675.04,251.84 L675.82,250.21 L676.60,248.58 L677.41,246.95 L678.23,245.32 L679.07,243.69 L679.93,242.06 L680.81,240.43 L681.70,238.80 L682.61,237.17 L683.53,235.54 L684.47,233.91 L685.43,232.28 L686.40,230.65 L687.40,229.02 L688.40,227.39 L689.43,225.76 L690.47,224.13 L691.52,222.50 L692.60,220.87 L693.69,219.24 L694.79,217.61 L695.91,215.98 L697.05,214.35 L698.20,212.72 L699.37,211.09 L700.55,209.46 L701.75,207.83 L702.96,206.20 L704.19,204.57 L705.43,202.94 L706.69,201.31 L707.96,199.68 L709.25,198.05 L710.56,196.42 L711.87,194.79 L713.21,193.16 L714.55,191.53 L715.92,189.90 L717.29,188.27 L718.68,186.64 L720.08,185.01 L721.50,183.38 L722.93,181.75 L724.38,180.12 L725.84,178.49 L727.31,176.86 L728.80,175.23 L730.29,173.60 L731.81,171.97 L733.33,170.34 L734.87,168.71 L736.42,167.08 L737.98,165.45 L739.56,163.82 L741.15,162.19 L742.75,160.56 L744.36,158.93 L745.99,157.30 L747.62,155.67 L749.27,154.04 L750.93,152.41 L752.60,150.78 L754.29,149.15 L755.98,147.52 L757.69,145.89 L759.40,144.26 L761.13,142.63 L762.87,141.00 L764.62,139.37 L766.38,137.74 L768.15,136.11 L769.93,134.48 L771.72,132.85 L773.52,131.22 L775.33,129.59 L777.15,127.96 L778.98,126.33 L780.82,124.70 L782.67,123.07 L784.53,121.44 L786.39,119.81 L788.27,118.18 L790.15,116.55 L792.04,114.92 L793.95,113.29 L795.85,111.66 L797.77,110.03 L799.70,108.40 L801.63,106.77 L803.57,105.14 L805.52,103.51 L807.48,101.88 L809.44,100.25 L811.41,98.62 L813.39,96.99 L815.37,95.36 L817.36,93.73 L819.36,92.10 L821.36,90.47 L823.37,88.84 L825.39,87.21 L827.41,85.58 L829.44,83.95 L831.47,82.32 L833.51,80.69 L835.56,79.06 L837.60,77.43 L839.66,75.80 L841.72,74.17 L843.78,72.54 L845.85,70.91 L847.92,69.28 L850.00,67.65 L852.08,66.02 L854.16,64.39 L856.25,62.76 L858.34,61.13 L860.44,59.50 L862.53,57.87 L864.64,56.24 L866.74,54.61 L868.85,52.98 L870.96,51.35 L873.07,49.72 L875.18,48.09 L877.30,46.46 L879.42,44.83 L881.54,43.20 L883.66,41.57 L885.78,39.94 L887.91,38.31 L890.03,36.68 L892.16,35.05 L894.29,33.42 L896.41,31.79 L898.54,30.16 L900.67,28.53 L902.80,26.90"/>
<path d="M902.80,613.70 L901.10,612.07 L899.39,610.44 L897.69,608.81 L895.99,607.18 L894.29,605.55 L892.59,603.92 L890.89,602.29 L889.19,600.66 L887.49,599.03 L885.79,597.40 L884.09,595.77 L882.40,594.14 L880.71,592.51 L879.02,590.88 L877.33,589.25 L875.64,587.62 L873.95,585.99 L872.27,584.36 L870.59,582.73 L868.91,581.10 L867.23,579.47 L865.56,577.84 L863.89,576.21 L862.22,574.58 L860.56,572.95 L858.90,571.32 L857.24,569.69 L855.58,568.06 L853.93,566.43 L852.29,564.80 L850.64,563.17 L849.00,561.54 L847.37,559.91 L845.74,558.28 L844.11,556.65 L842.49,555.02 L840.87,553.39 L839.26,551.76 L837.65,550.13 L836.05,548.50 L834.45,546.87 L832.86,545.24 L831.27,543.61 L829.69,541.98 L828.11,540.35 L826.54,538.72 L824.98,537.09 L823.42,535.46 L821.87,533.83 L820.32,532.20 L818.78,530.57 L817.24,528.94 L815.72,527.31 L814.20,525.68 L812.68,524.05 L811.17,522.42 L809.67,520.79 L808.18,519.16 L806.69,517.53 L805.22,515.90 L803.74,514.27 L802.28,512.64 L800.83,511.01 L799.38,509.38 L797.94,507.75 L796.50,506.12 L795.08,504.49 L793.66,502.86 L792.26,501.23 L790.86,499.60 L789.47,497.97 L788.08,496.34 L786.71,494.71 L785.34,493.08 L783.99,491.45 L782.64,489.82 L781.31,488.19 L779.98,486.56 L778.66,484.93 L777.35,483.30 L776.05,481.67 L774.76,480.04 L773.48,478.41 L772.21,476.78 L770.95,475.15 L769.70,473.52 L768.46,471.89 L767.22,470.26 L766.00,468.63 L764.80,467.00 L763.60,465.37 L762.41,463.74 L761.23,462.11 L760.06,460.48 L758.91,458.85 L757.76,457.22 L756.63,455.59 L755.50,453.96 L754.39,452.33 L753.29,450.70 L752.20,449.07 L751.13,447.44 L750.06,445.81 L749.01,444.18 L747.96,442.55 L746.93,440.92 L745.91,439.29 L744.91,437.66 L743.91,436.03 L742.93,434.40 L741.96,432.77 L741.00,431.14 L740.05,429.51 L739.12,427.88 L738.20,426.25 L737.29,424.62 L736.39,422.99 L735.51,421.36 L734.64,419.73 L733.78,418.10 L732.93,416.47 L732.10,414.84 L731.28,413.21 L730.48,411.58 L729.68,409.95 L728.90,408.32 L728.14,406.69 L727.38,405.06 L726.64,403.43 L725.92,401.80 L725.20,400.17 L724.51,398.54 L723.82,396.91 L723.15,395.28 L722.49,393.65 L721.84,392.02 L721.21,390.39 L720.59,388.76 L719.99,387.13 L719.40,385.50 L718.83,383.87 L718.27,382.24 L717.72,380.61 L717.18,378.98 L716.66,377.35 L716.16,375.72 L715.67,374.09 L715.19,372.46 L714.73,370.83 L714.28,369.20 L713.85,367.57 L713.43,365.94 L713.02,364.31 L712.63,362.68 L712.26,361.05 L711.90,359.42 L711.55,357.79 L711.22,356.16 L710.90,354.53 L710.60,352.90 L710.31,351.27 L710.03,349.64 L709.78,348.01 L709.53,346.38 L709.30,344.75 L709.09,343.12 L708.89,341.49 L708.70,339.86 L708.53,338.23 L708.37,336.60 L708.23,334.97 L708.11,333.34 L708.00,331.71 L707.90,330.08 L707.82,328.45 L707.75,326.82 L707.70,325.19 L707.66,323.56 L707.64,321.93 L707.63,320.30 L707.64,318.67 L707.66,317.04 L707.70,315.41 L707.75,313.78 L707.82,312.15 L707.90,310.52 L708.00,308.89 L708.11,307.26 L708.23,305.63 L708.37,304.00 L708.53,302.37 L708.70,300.74 L708.89,299.11 L709.09,297.48 L709.30,295.85 L709.53,294.22 L709.78,292.59 L710.03,290.96 L710.31,289.33 L710.60,287.70 L710.90,286.07 L711.22,284.44 L711.55,282.81 L711.90,281.18 L712.26,279.55 L712.63,277.92 L713.02,276.29 L713.43,274.66 L713.85,273.03 L714.28,271.40 L714.73,269.77 L715.19,268.14 L715.67,266.51 L716.16,264.88 L716.66,263.25 L717.18,261.62 L717.72,259.99 L718.27,258.36 L718.83,256.73 L719.40,255.10 L719.99,253.47 L720.59,251.84 L721.21,250.21 L721.84,248.58 L722.49,246.95 L723.15,245.32 L723.82,243.69 L724.51,242.06 L725.20,240.43 L725.92,238.80 L726.64,237.17 L727.38,235.54 L728.14,233.91 L728.90,232.28 L729.68,230.65 L730.48,229.02 L731.28,227.39 L732.10,225.76 L732.93,224.13 L733.78,222.50 L734.64,220.87 L735.51,219.24 L736.39,217.61 L737.29,215.98 L738.20,214.35 L739.12,212.72 L740.05,211.09 L741.00,209.46 L741.96,207.83 L742.93,206.20 L743.91,204.57 L744.91,202.94 L745.91,201.31 L746.93,199.68 L747.96,198.05 L749.01,196.42 L750.06,194.79 L751.13,193.16 L752.20,191.53 L753.29,189.90 L754.39,188.27 L755.50,186.64 L756.63,185.01 L757.76,183.38 L758.91,181.75 L760.06,180.12 L761.23,178.49 L762.41,176.86 L763.60,175.23 L764.80,173.60 L766.00,171.97 L767.22,170.34 L768.46,168.71 L769.70,167.08 L770.95,165.45 L772.21,163.82 L773.48,162.19 L774.76,160.56 L776.05,158.93 L777.35,157.30 L778.66,155.67 L779.98,154.04 L781.31,152.41 L782.64,150.78 L783.99,149.15 L785.34,147.52 L786.71,145.89 L788.08,144.26 L789.47,142.63 L790.86,141.00 L792.26,139.37 L793.66,137.74 L795.08,136.11 L796.50,134.48 L797.94,132.85 L799.38,131.22 L800.83,129.59 L802.28,127.96 L803.74,126.33 L805.22,124.70 L806.69,123.07 L808.18,121.44 L809.67,119.81 L811.17,118.18 L812.68,116.55 L814.20,114.92 L815.72,113.29 L817.24,111.66 L818.78,110.03 L820.32,108.40 L821.87,106.77 L823.42,105.14 L824.98,103.51 L826.54,101.88 L828.11,100.25 L829.69,98.62 L831.27,96.99 L832.86,95.36 L834.45,93.73 L836.05,92.10 L837.65,90.47 L839.26,88.84 L840.87,87.21 L842.49,85.58 L844.11,83.95 L845.74,82.32 L847.37,80.69 L849.00,79.06 L850.64,77.43 L852.29,75.80 L853.93,74.17 L855.58,72.54 L857.24,70.91 L858.90,69.28 L860.56,67.65 L862.22,66.02 L863.89,64.39 L865.56,62.76 L867.23,61.13 L868.91,59.50 L870.59,57.87 L872.27,56.24 L873.95,54.61 L875.64,52.98 L877.33,51.35 L879.02,49.72 L880.71,48.09 L882.40,46.46 L884.09,44.83 L885.79,43.20 L887.49,41.57 L889.19,39.94 L890.89,38.31 L892.59,36.68 L894.29,35.05 L895.99,33.42 L897.69,31.79 L899.39,30.16 L901.10,28.53 L902.80,26.90"/>
<path d="M902.80,613.70 L901.52,612.07 L900.25,610.44 L898.97,608.81 L897.69,607.18 L896.42,605.55 L895.14,603.92 L893.86,602.29 L892.59,600.66 L891.32,599.03 L890.04,597.40 L888.77,595.77 L887.50,594.14 L886.23,592.51 L884.96,590.88 L883.69,589.25 L882.43,587.62 L881.16,585.99 L879.90,584.36 L878.64,582.73 L877.38,581.10 L876.13,579.47 L874.87,577.84 L873.62,576.21 L872.37,574.58 L871.12,572.95 L869.87,571.32 L868.63,569.69 L867.39,568.06 L866.15,566.43 L864.92,564.80 L863.68,563.17 L862.45,561.54 L861.23,559.91 L860.00,558.28 L858.78,556.65 L857.57,555.02 L856.35,553.39 L855.14,551.76 L853.94,550.13 L852.74,548.50 L851.54,546.87 L850.34,545.24 L849.15,543.61 L847.97,541.98 L846.78,540.35 L845.61,538.72 L844.43,537.09 L843.26,535.46 L842.10,533.83 L840.94,532.20 L839.78,530.57 L838.63,528.94 L837.49,527.31 L836.35,525.68 L835.21,524.05 L834.08,522.42 L832.96,520.79 L831.84,519.16 L830.72,517.53 L829.61,515.90 L828.51,514.27 L827.41,512.64 L826.32,511.01 L825.23,509.38 L824.15,507.75 L823.08,506.12 L822.01,504.49 L820.95,502.86 L819.89,501.23 L818.84,499.60 L817.80,497.97 L816.76,496.34 L815.73,494.71 L814.71,493.08 L813.69,491.45 L812.68,489.82 L811.68,488.19 L810.68,486.56 L809.69,484.93 L808.71,483.30 L807.74,481.67 L806.77,480.04 L805.81,478.41 L804.86,476.78 L803.91,475.15 L802.97,473.52 L802.04,471.89 L801.12,470.26 L800.20,468.63 L799.30,467.00 L798.40,465.37 L797.51,463.74 L796.62,462.11 L795.75,460.48 L794.88,458.85 L794.02,457.22 L793.17,455.59 L792.33,453.96 L791.49,452.33 L790.67,450.70 L789.85,449.07 L789.04,447.44 L788.24,445.81 L787.45,444.18 L786.67,442.55 L785.90,440.92 L785.13,439.29 L784.38,437.66 L783.63,436.03 L782.90,434.40 L782.17,432.77 L781.45,431.14 L780.74,429.51 L780.04,427.88 L779.35,426.25 L778.67,424.62 L777.99,422.99 L777.33,421.36 L776.68,419.73 L776.03,418.10 L775.40,416.47 L774.78,414.84 L774.16,413.21 L773.56,411.58 L772.96,409.95 L772.38,408.32 L771.80,406.69 L771.24,405.06 L770.68,403.43 L770.14,401.80 L769.60,400.17 L769.08,398.54 L768.56,396.91 L768.06,395.28 L767.57,393.65 L767.08,392.02 L766.61,390.39 L766.15,388.76 L765.69,387.13 L765.25,385.50 L764.82,383.87 L764.40,382.24 L763.99,380.61 L763.59,378.98 L763.20,377.35 L762.82,375.72 L762.45,374.09 L762.09,372.46 L761.75,370.83 L761.41,369.20 L761.09,367.57 L760.77,365.94 L760.47,364.31 L760.18,362.68 L759.89,361.05 L759.62,359.42 L759.36,357.79 L759.11,356.16 L758.88,354.53 L758.65,352.90 L758.43,351.27 L758.23,349.64 L758.03,348.01 L757.85,346.38 L757.68,344.75 L757.52,343.12 L757.36,341.49 L757.23,339.86 L757.10,338.23 L756.98,336.60 L756.88,334.97 L756.78,333.34 L756.70,331.71 L756.62,330.08 L756.56,328.45 L756.51,326.82 L756.47,325.19 L756.45,323.56 L756.43,321.93 L756.42,320.30 L756.43,318.67 L756.45,317.04 L756.47,315.41 L756.51,313.78 L756.56,312.15 L756.62,310.52 L756.70,308.89 L756.78,307.26 L756.88,305.63 L756.98,304.00 L757.10,302.37 L757.23,300.74 L757.36,299.11 L757.52,297.48 L757.68,295.85 L757.85,294.22 L758.03,292.59 L758.23,290.96 L758.43,289.33 L758.65,287.70 L758.88,286.07 L759.11,284.44 L759.36,282.81 L759.62,281.18 L759.89,279.55 L760.18,277.92 L760.47,276.29 L760.77,274.66 L761.09,273.03 L761.41,271.40 L761.75,269.77 L762.09,268.14 L762.45,266.51 L762.82,264.88 L763.20,263.25 L763.59,261.62 L763.99,259.99 L764.40,258.36 L764.82,256.73 L765.25,255.10 L765.69,253.47 L766.15,251.84 L766.61,250.21 L767.08,248.58 L767.57,246.95 L768.06,245.32 L768.56,243.69 L769.08,242.06 L769.60,240.43 L770.14,238.80 L770.68,237.17 L771.24,235.54 L771.80,233.91 L772.38,232.28 L772.96,230.65 L773.56,229.02 L774.16,227.39 L774.78,225.76 L775.40,224.13 L776.03,222.50 L776.68,220.87 L777.33,219.24 L777.99,217.61 L778.67,215.98 L779.35,214.35 L780.04,212.72 L780.74,211.09 L781.45,209.46 L782.17,207.83 L782.90,206.20 L783.63,204.57 L784.38,202.94 L785.13,201.31 L785.90,199.68 L786.67,198.05 L787.45,196.42 L788.24,194.79 L789.04,193.16 L789.85,191.53 L790.67,189.90 L791.49,188.27 L792.33,186.64 L793.17,185.01 L794.02,183.38 L794.88,181.75 L795.75,180.12 L796.62,178.49 L797.51,176.86 L798.40,175.23 L799.30,173.60 L800.20,171.97 L801.12,170.34 L802.04,168.71 L802.97,167.08 L803.91,165.45 L804.86,163.82 L805.81,162.19 L806.77,160.56 L807.74,158.93 L808.71,157.30 L809.69,155.67 L810.68,154.04 L811.68,152.41 L812.68,150.78 L813.69,149.15 L814.71,147.52 L815.73,145.89 L816.76,144.26 L817.80,142.63 L818.84,141.00 L819.89,139.37 L820.95,137.74 L822.01,136.11 L823.08,134.48 L824.15,132.85 L825.23,131.22 L826.32,129.59 L827.41,127.96 L828.51,126.33 L829.61,124.70 L830.72,123.07 L831.84,121.44 L832.96,119.81 L834.08,118.18 L835.21,116.55 L836.35,114.92 L837.49,113.29 L838.63,111.66 L839.78,110.03 L840.94,108.40 L842.10,106.77 L843.26,105.14 L844.43,103.51 L845.61,101.88 L846.78,100.25 L847.97,98.62 L849.15,96.99 L850.34,95.36 L851.54,93.73 L852.74,92.10 L853.94,90.47 L855.14,88.84 L856.35,87.21 L857.57,85.58 L858.78,83.95 L860.00,82.32 L861.23,80.69 L862.45,79.06 L863.68,77.43 L864.92,75.80 L866.15,74.17 L867.39,72.54 L868.63,70.91 L869.87,69.28 L871.12,67.65 L872.37,66.02 L873.62,64.39 L874.87,62.76 L876.13,61.13 L877.38,59.50 L878.64,57.87 L879.90,56.24 L881.16,54.61 L882.43,52.98 L883.69,51.35 L884.96,49.72 L886.23,48.09 L887.50,46.46 L888.77,44.83 L890.04,43.20 L891.32,41.57 L892.59,39.94 L893.86,38.31 L895.14,36.68 L896.42,35.05 L897.69,33.42 L898.97,31.79 L900.25,30.16 L901.52,28.53 L902.80,26.90"/>
<path d="M902.80,613.70 L901.95,612.07 L901.10,610.44 L900.25,608.81 L899.39,607.18 L898.54,605.55 L897.69,603.92 L896.84,602.29 L895.99,600.66 L895.14,599.03 L894.29,597.40 L893.45,595.77 L892.60,594.14 L891.75,592.51 L890.91,590.88 L890.06,589.25 L889.22,587.62 L888.38,585.99 L887.53,584.36 L886.69,582.73 L885.85,581.10 L885.02,579.47 L884.18,577.84 L883.34,576.21 L882.51,574.58 L881.68,572.95 L880.85,571.32 L880.02,569.69 L879.19,568.06 L878.37,566.43 L877.54,564.80 L876.72,563.17 L875.90,561.54 L875.08,559.91 L874.27,558.28 L873.46,556.65 L872.64,555.02 L871.84,553.39 L871.03,551.76 L870.23,550.13 L869.42,548.50 L868.63,546.87 L867.83,545.24 L867.04,543.61 L866.24,541.98 L865.46,540.35 L864.67,538.72 L863.89,537.09 L863.11,535.46 L862.33,533.83 L861.56,532.20 L860.79,530.57 L860.02,528.94 L859.26,527.31 L858.50,525.68 L857.74,524.05 L856.99,522.42 L856.24,520.79 L855.49,519.16 L854.75,517.53 L854.01,515.90 L853.27,514.27 L852.54,512.64 L851.81,511.01 L851.09,509.38 L850.37,507.75 L849.65,506.12 L848.94,504.49 L848.23,502.86 L847.53,501.23 L846.83,499.60 L846.13,497.97 L845.44,496.34 L844.75,494.71 L844.07,493.08 L843.39,491.45 L842.72,489.82 L842.05,488.19 L841.39,486.56 L840.73,484.93 L840.07,483.30 L839.42,481.67 L838.78,480.04 L838.14,478.41 L837.50,476.78 L836.87,475.15 L836.25,473.52 L835.63,471.89 L835.01,470.26 L834.40,468.63 L833.80,467.00 L833.20,465.37 L832.60,463.74 L832.02,462.11 L831.43,460.48 L830.85,458.85 L830.28,457.22 L829.71,455.59 L829.15,453.96 L828.60,452.33 L828.05,450.70 L827.50,449.07 L826.96,447.44 L826.43,445.81 L825.90,444.18 L825.38,442.55 L824.87,440.92 L824.36,439.29 L823.85,437.66 L823.36,436.03 L822.86,434.40 L822.38,432.77 L821.90,431.14 L821.43,429.51 L820.96,427.88 L820.50,426.25 L820.04,424.62 L819.60,422.99 L819.15,421.36 L818.72,419.73 L818.29,418.10 L817.87,416.47 L817.45,414.84 L817.04,413.21 L816.64,411.58 L816.24,409.95 L815.85,408.32 L815.47,406.69 L815.09,405.06 L814.72,403.43 L814.36,401.80 L814.00,400.17 L813.65,398.54 L813.31,396.91 L812.97,395.28 L812.64,393.65 L812.32,392.02 L812.01,390.39 L811.70,388.76 L811.40,387.13 L811.10,385.50 L810.81,383.87 L810.53,382.24 L810.26,380.61 L809.99,378.98 L809.73,377.35 L809.48,375.72 L809.23,374.09 L809.00,372.46 L808.77,370.83 L808.54,369.20 L808.32,367.57 L808.11,365.94 L807.91,364.31 L807.72,362.68 L807.53,361.05 L807.35,359.42 L807.18,357.79 L807.01,356.16 L806.85,354.53 L806.70,352.90 L806.55,351.27 L806.42,349.64 L806.29,348.01 L806.17,346.38 L806.05,344.75 L805.94,343.12 L805.84,341.49 L805.75,339.86 L805.67,338.23 L805.59,336.60 L805.52,334.97 L805.45,333.34 L805.40,331.71 L805.35,330.08 L805.31,328.45 L805.28,326.82 L805.25,325.19 L805.23,323.56 L805.22,321.93 L805.22,320.30 L805.22,318.67 L805.23,317.04 L805.25,315.41 L805.28,313.78 L805.31,312.15 L805.35,310.52 L805.40,308.89 L805.45,307.26 L805.52,305.63 L805.59,304.00 L805.67,302.37 L805.75,300.74 L805.84,299.11 L805.94,297.48 L806.05,295.85 L806.17,294.22 L806.29,292.59 L806.42,290.96 L806.55,289.33 L806.70,287.70 L806.85,286.07 L807.01,284.44 L807.18,282.81 L807.35,281.18 L807.53,279.55 L807.72,277.92 L807.91,276.29 L808.11,274.66 L808.32,273.03 L808.54,271.40 L808.77,269.77 L809.00,268.14 L809.23,266.51 L809.48,264.88 L809.73,263.25 L809.99,261.62 L810.26,259.99 L810.53,258.36 L810.81,256.73 L811.10,255.10 L811.40,253.47 L811.70,251.84 L812.01,250.21 L812.32,248.58 L812.64,246.95 L812.97,245.32 L813.31,243.69 L813.65,242.06 L814.00,240.43 L814.36,238.80 L814.72,237.17 L815.09,235.54 L815.47,233.91 L815.85,232.28 L816.24,230.65 L816.64,229.02 L817.04,227.39 L817.45,225.76 L817.87,224.13 L818.29,222.50 L818.72,220.87 L819.15,219.24 L819.60,217.61 L820.04,215.98 L820.50,214.35 L820.96,212.72 L821.43,211.09 L821.90,209.46 L822.38,207.83 L822.86,206.20 L823.36,204.57 L823.85,202.94 L824.36,201.31 L824.87,199.68 L825.38,198.05 L825.90,196.42 L826.43,194.79 L826.96,193.16 L827.50,191.53 L828.05,189.90 L828.60,188.27 L829.15,186.64 L829.71,185.01 L830.28,183.38 L830.85,181.75 L831.43,180.12 L832.02,178.49 L832.60,176.86 L833.20,175.23 L833.80,173.60 L834.40,171.97 L835.01,170.34 L835.63,168.71 L836.25,167.08 L836.87,165.45 L837.50,163.82 L838.14,162.19 L838.78,160.56 L839.42,158.93 L840.07,157.30 L840.73,155.67 L841.39,154.04 L842.05,152.41 L842.72,150.78 L843.39,149.15 L844.07,147.52 L844.75,145.89 L845.44,144.26 L846.13,142.63 L846.83,141.00 L847.53,139.37 L848.23,137.74 L848.94,136.11 L849.65,134.48 L850.37,132.85 L851.09,131.22 L851.81,129.59 L852.54,127.96 L853.27,126.33 L854.01,124.70 L854.75,123.07 L855.49,121.44 L856.24,119.81 L856.99,118.18 L857.74,116.55 L858.50,114.92 L859.26,113.29 L860.02,111.66 L860.79,110.03 L861.56,108.40 L862.33,106.77 L863.11,105.14 L863.89,103.51 L864.67,101.88 L865.46,100.25 L866.24,98.62 L867.04,96.99 L867.83,95.36 L868.63,93.73 L869.42,92.10 L870.23,90.47 L871.03,88.84 L871.84,87.21 L872.64,85.58 L873.46,83.95 L874.27,82.32 L875.08,80.69 L875.90,79.06 L876.72,77.43 L877.54,75.80 L878.37,74.17 L879.19,72.54 L880.02,70.91 L880.85,69.28 L881.68,67.65 L882.51,66.02 L883.34,64.39 L884.18,62.76 L885.02,61.13 L885.85,59.50 L886.69,57.87 L887.53,56.24 L888.38,54.61 L889.22,52.98 L890.06,51.35 L890.91,49.72 L891.75,48.09 L892.60,46.46 L893.45,44.83 L894.29,43.20 L895.14,41.57 L895.99,39.94 L896.84,38.31 L897.69,36.68 L898.54,35.05 L899.39,33.42 L900.25,31.79 L901.10,30.16 L901.95,28.53 L902.80,26.90"/>
<path d="M902.80,613.70 L902.37,612.07 L901.95,610.44 L901.52,608.81 L901.10,607.18 L900.67,605.55 L900.25,603.92 L899.82,602.29 L899.40,600.66 L898.97,599.03 L898.55,597.40 L898.12,595.77 L897.70,594.14 L897.28,592.51 L896.85,590.88 L896.43,589.25 L896.01,587.62 L895.59,585.99 L895.17,584.36 L894.75,582.73 L894.33,581.10 L893.91,579.47 L893.49,577.84 L893.07,576.21 L892.66,574.58 L892.24,572.95 L891.82,571.32 L891.41,569.69 L891.00,568.06 L890.58,566.43 L890.17,564.80 L889.76,563.17 L889.35,561.54 L888.94,559.91 L888.53,558.28 L888.13,556.65 L887.72,555.02 L887.32,553.39 L886.91,551.76 L886.51,550.13 L886.11,548.50 L885.71,546.87 L885.31,545.24 L884.92,543.61 L884.52,541.98 L884.13,540.35 L883.74,538.72 L883.34,537.09 L882.95,535.46 L882.57,533.83 L882.18,532.20 L881.79,530.57 L881.41,528.94 L881.03,527.31 L880.65,525.68 L880.27,524.05 L879.89,522.42 L879.52,520.79 L879.15,519.16 L878.77,517.53 L878.40,515.90 L878.04,514.27 L877.67,512.64 L877.31,511.01 L876.94,509.38 L876.58,507.75 L876.23,506.12 L875.87,504.49 L875.52,502.86 L875.16,501.23 L874.81,499.60 L874.47,497.97 L874.12,496.34 L873.78,494.71 L873.44,493.08 L873.10,491.45 L872.76,489.82 L872.43,488.19 L872.09,486.56 L871.76,484.93 L871.44,483.30 L871.11,481.67 L870.79,480.04 L870.47,478.41 L870.15,476.78 L869.84,475.15 L869.52,473.52 L869.21,471.89 L868.91,470.26 L868.60,468.63 L868.30,467.00 L868.00,465.37 L867.70,463.74 L867.41,462.11 L867.12,460.48 L866.83,458.85 L866.54,457.22 L866.26,455.59 L865.98,453.96 L865.70,452.33 L865.42,450.70 L865.15,449.07 L864.88,447.44 L864.61,445.81 L864.35,444.18 L864.09,442.55 L863.83,440.92 L863.58,439.29 L863.33,437.66 L863.08,436.03 L862.83,434.40 L862.59,432.77 L862.35,431.14 L862.11,429.51 L861.88,427.88 L861.65,426.25 L861.42,424.62 L861.20,422.99 L860.98,421.36 L860.76,419.73 L860.54,418.10 L860.33,416.47 L860.13,414.84 L859.92,413.21 L859.72,411.58 L859.52,409.95 L859.33,408.32 L859.13,406.69 L858.95,405.06 L858.76,403.43 L858.58,401.80 L858.40,400.17 L858.23,398.54 L858.05,396.91 L857.89,395.28 L857.72,393.65 L857.56,392.02 L857.40,390.39 L857.25,388.76 L857.10,387.13 L856.95,385.50 L856.81,383.87 L856.67,382.24 L856.53,380.61 L856.40,378.98 L856.27,377.35 L856.14,375.72 L856.02,374.09 L855.90,372.46 L855.78,370.83 L855.67,369.20 L855.56,367.57 L855.46,365.94 L855.36,364.31 L855.26,362.68 L855.16,361.05 L855.07,359.42 L854.99,357.79 L854.90,356.16 L854.83,354.53 L854.75,352.90 L854.68,351.27 L854.61,349.64 L854.54,348.01 L854.48,346.38 L854.43,344.75 L854.37,343.12 L854.32,341.49 L854.28,339.86 L854.23,338.23 L854.19,336.60 L854.16,334.97 L854.13,333.34 L854.10,331.71 L854.07,330.08 L854.05,328.45 L854.04,326.82 L854.02,325.19 L854.02,323.56 L854.01,321.93 L854.01,320.30 L854.01,318.67 L854.02,317.04 L854.02,315.41 L854.04,313.78 L854.05,312.15 L854.07,310.52 L854.10,308.89 L854.13,307.26 L854.16,305.63 L854.19,304.00 L854.23,302.37 L854.28,300.74 L854.32,299.11 L854.37,297.48 L854.43,295.85 L854.48,294.22 L854.54,292.59 L854.61,290.96 L854.68,289.33 L854.75,287.70 L854.83,286.07 L854.90,284.44 L854.99,282.81 L855.07,281.18 L855.16,279.55 L855.26,277.92 L855.36,276.29 L855.46,274.66 L855.56,273.03 L855.67,271.40 L855.78,269.77 L855.90,268.14 L856.02,266.51 L856.14,264.88 L856.27,263.25 L856.40,261.62 L856.53,259.99 L856.67,258.36 L856.81,256.73 L856.95,255.10 L857.10,253.47 L857.25,251.84 L857.40,250.21 L857.56,248.58 L857.72,246.95 L857.89,245.32 L858.05,243.69 L858.23,242.06 L858.40,240.43 L858.58,238.80 L858.76,237.17 L858.95,235.54 L859.13,233.91 L859.33,232.28 L859.52,230.65 L859.72,229.02 L859.92,227.39 L860.13,225.76 L860.33,224.13 L860.54,222.50 L860.76,220.87 L860.98,219.24 L861.20,217.61 L861.42,215.98 L861.65,214.35 L861.88,212.72 L862.11,211.09 L862.35,209.46 L862.59,207.83 L862.83,206.20 L863.08,204.57 L863.33,202.94 L863.58,201.31 L863.83,199.68 L864.09,198.05 L864.35,196.42 L864.61,194.79 L864.88,193.16 L865.15,191.53 L865.42,189.90 L865.70,188.27 L865.98,186.64 L866.26,185.01 L866.54,183.38 L866.83,181.75 L867.12,180.12 L867.41,178.49 L867.70,176.86 L868.00,175.23 L868.30,173.60 L868.60,171.97 L868.91,170.34 L869.21,168.71 L869.52,167.08 L869.84,165.45 L870.15,163.82 L870.47,162.19 L870.79,160.56 L871.11,158.93 L871.44,157.30 L871.76,155.67 L872.09,154.04 L872.43,152.41 L872.76,150.78 L873.10,149.15 L873.44,147.52 L873.78,145.89 L874.12,144.26 L874.47,142.63 L874.81,141.00 L875.16,139.37 L875.52,137.74 L875.87,136.11 L876.23,134.48 L876.58,132.85 L876.94,131.22 L877.31,129.59 L877.67,127.96 L878.04,126.33 L878.40,124.70 L878.77,123.07 L879.15,121.44 L879.52,119.81 L879.89,118.18 L880.27,116.55 L880.65,114.92 L881.03,113.29 L881.41,111.66 L881.79,110.03 L882.18,108.40 L882.57,106.77 L882.95,105.14 L883.34,103.51 L883.74,101.88 L884.13,100.25 L884.52,98.62 L884.92,96.99 L885.31,95.36 L885.71,93.73 L886.11,92.10 L886.51,90.47 L886.91,88.84 L887.32,87.21 L887.72,85.58 L888.13,83.95 L888.53,82.32 L888.94,80.69 L889.35,79.06 L889.76,77.43 L890.17,75.80 L890.58,74.17 L891.00,72.54 L891.41,70.91 L891.82,69.28 L892.24,67.65 L892.66,66.02 L893.07,64.39 L893.49,62.76 L893.91,61.13 L894.33,59.50 L894.75,57.87 L895.17,56.24 L895.59,54.61 L896.01,52.98 L896.43,51.35 L896.85,49.72 L897.28,48.09 L897.70,46.46 L898.12,44.83 L898.55,43.20 L898.97,41.57 L899.40,39.94 L899.82,38.31 L900.25,36.68 L900.67,35.05 L901.10,33.42 L901.52,31.79 L901.95,30.16 L902.37,28.53 L902.80,26.90"/>
<path d="M902,613.70 V26.90"/>
<path d="M902.80,613.70 L903.23,612.07 L903.65,610.44 L904.08,608.81 L904.50,607.18 L904.93,605.55 L905.35,603.92 L905.78,602.29 L906.20,600.66 L906.63,599.03 L907.05,597.40 L907.48,595.77 L907.90,594.14 L908.32,592.51 L908.75,590.88 L909.17,589.25 L909.59,587.62 L910.01,585.99 L910.43,584.36 L910.85,582.73 L911.27,581.10 L911.69,579.47 L912.11,577.84 L912.53,576.21 L912.94,574.58 L913.36,572.95 L913.78,571.32 L914.19,569.69 L914.60,568.06 L915.02,566.43 L915.43,564.80 L915.84,563.17 L916.25,561.54 L916.66,559.91 L917.07,558.28 L917.47,556.65 L917.88,555.02 L918.28,553.39 L918.69,551.76 L919.09,550.13 L919.49,548.50 L919.89,546.87 L920.29,545.24 L920.68,543.61 L921.08,541.98 L921.47,540.35 L921.86,538.72 L922.26,537.09 L922.65,535.46 L923.03,533.83 L923.42,532.20 L923.81,530.57 L924.19,528.94 L924.57,527.31 L924.95,525.68 L925.33,524.05 L925.71,522.42 L926.08,520.79 L926.45,519.16 L926.83,517.53 L927.20,515.90 L927.56,514.27 L927.93,512.64 L928.29,511.01 L928.66,509.38 L929.02,507.75 L929.37,506.12 L929.73,504.49 L930.08,502.86 L930.44,501.23 L930.79,499.60 L931.13,497.97 L931.48,496.34 L931.82,494.71 L932.16,493.08 L932.50,491.45 L932.84,489.82 L933.17,488.19 L933.51,486.56 L933.84,484.93 L934.16,483.30 L934.49,481.67 L934.81,480.04 L935.13,478.41 L935.45,476.78 L935.76,475.15 L936.08,473.52 L936.39,471.89 L936.69,470.26 L937.00,468.63 L937.30,467.00 L937.60,465.37 L937.90,463.74 L938.19,462.11 L938.48,460.48 L938.77,458.85 L939.06,457.22 L939.34,455.59 L939.62,453.96 L939.90,452.33 L940.18,450.70 L940.45,449.07 L940.72,447.44 L940.99,445.81 L941.25,444.18 L941.51,442.55 L941.77,440.92 L942.02,439.29 L942.27,437.66 L942.52,436.03 L942.77,434.40 L943.01,432.77 L943.25,431.14 L943.49,429.51 L943.72,427.88 L943.95,426.25 L944.18,424.62 L944.40,422.99 L944.62,421.36 L944.84,419.73 L945.06,418.10 L945.27,416.47 L945.47,414.84 L945.68,413.21 L945.88,411.58 L946.08,409.95 L946.27,408.32 L946.47,406.69 L946.65,405.06 L946.84,403.43 L947.02,401.80 L947.20,400.17 L947.37,398.54 L947.55,396.91 L947.71,395.28 L947.88,393.65 L948.04,392.02 L948.20,390.39 L948.35,388.76 L948.50,387.13 L948.65,385.50 L948.79,383.87 L948.93,382.24 L949.07,380.61 L949.20,378.98 L949.33,377.35 L949.46,375.72 L949.58,374.09 L949.70,372.46 L949.82,370.83 L949.93,369.20 L950.04,367.57 L950.14,365.94 L950.24,364.31 L950.34,362.68 L950.44,361.05 L950.53,359.42 L950.61,357.79 L950.70,356.16 L950.77,354.53 L950.85,352.90 L950.92,351.27 L950.99,349.64 L951.06,348.01 L951.12,346.38 L951.17,344.75 L951.23,343.12 L951.28,341.49 L951.32,339.86 L951.37,338.23 L951.41,336.60 L951.44,334.97 L951.47,333.34 L951.50,331.71 L951.53,330.08 L951.55,328.45 L951.56,326.82 L951.58,325.19 L951.58,323.56 L951.59,321.93 L951.59,320.30 L951.59,318.67 L951.58,317.04 L951.58,315.41 L951.56,313.78 L951.55,312.15 L951.53,310.52 L951.50,308.89 L951.47,307.26 L951.44,305.63 L951.41,304.00 L951.37,302.37 L951.32,300.74 L951.28,299.11 L951.23,297.48 L951.17,295.85 L951.12,294.22 L951.06,292.59 L950.99,290.96 L950.92,289.33 L950.85,287.70 L950.77,286.07 L950.70,284.44 L950.61,282.81 L950.53,281.18 L950.44,279.55 L950.34,277.92 L950.24,276.29 L950.14,274.66 L950.04,273.03 L949.93,271.40 L949.82,269.77 L949.70,268.14 L949.58,266.51 L949.46,264.88 L949.33,263.25 L949.20,261.62 L949.07,259.99 L948.93,258.36 L948.79,256.73 L948.65,255.10 L948.50,253.47 L948.35,251.84 L948.20,250.21 L948.04,248.58 L947.88,246.95 L947.71,245.32 L947.55,243.69 L947.37,242.06 L947.20,240.43 L947.02,238.80 L946.84,237.17 L946.65,235.54 L946.47,233.91 L946.27,232.28 L946.08,230.65 L945.88,229.02 L945.68,227.39 L945.47,225.76 L945.27,224.13 L945.06,222.50 L944.84,220.87 L944.62,219.24 L944.40,217.61 L944.18,215.98 L943.95,214.35 L943.72,212.72 L943.49,211.09 L943.25,209.46 L943.01,207.83 L942.77,206.20 L942.52,204.57 L942.27,202.94 L942.02,201.31 L941.77,199.68 L941.51,198.05 L941.25,196.42 L940.99,194.79 L940.72,193.16 L940.45,191.53 L940.18,189.90 L939.90,188.27 L939.62,186.64 L939.34,185.01 L939.06,183.38 L938.77,181.75 L938.48,180.12 L938.19,178.49 L937.90,176.86 L937.60,175.23 L937.30,173.60 L937.00,171.97 L936.69,170.34 L936.39,168.71 L936.08,167.08 L935.76,165.45 L935.45,163.82 L935.13,162.19 L934.81,160.56 L934.49,158.93 L934.16,157.30 L933.84,155.67 L933.51,154.04 L933.17,152.41 L932.84,150.78 L932.50,149.15 L932.16,147.52 L931.82,145.89 L931.48,144.26 L931.13,142.63 L930.79,141.00 L930.44,139.37 L930.08,137.74 L929.73,136.11 L929.37,134.48 L929.02,132.85 L928.66,131.22 L928.29,129.59 L927.93,127.96 L927.56,126.33 L927.20,124.70 L926.83,123.07 L926.45,121.44 L926.08,119.81 L925.71,118.18 L925.33,116.55 L924.95,114.92 L924.57,113.29 L924.19,111.66 L923.81,110.03 L923.42,108.40 L923.03,106.77 L922.65,105.14 L922.26,103.51 L921.86,101.88 L921.47,100.25 L921.08,98.62 L920.68,96.99 L920.29,95.36 L919.89,93.73 L919.49,92.10 L919.09,90.47 L918.69,88.84 L918.28,87.21 L917.88,85.58 L917.47,83.95 L917.07,82.32 L916.66,80.69 L916.25,79.06 L915.84,77.43 L915.43,75.80 L915.02,74.17 L914.60,72.54 L914.19,70.91 L913.78,69.28 L913.36,67.65 L912.94,66.02 L912.53,64.39 L912.11,62.76 L911.69,61.13 L911.27,59.50 L910.85,57.87 L910.43,56.24 L910.01,54.61 L909.59,52.98 L909.17,51.35 L908.75,49.72 L908.32,48.09 L907.90,46.46 L907.48,44.83 L907.05,43.20 L906.63,41.57 L906.20,39.94 L905.78,38.31 L905.35,36.68 L904.93,35.05 L904.50,33.42 L904.08,31.79 L903.65,30.16 L903.23,28.53 L902.80,26.90"/>
<path d="M902.80,613.70 L903.65,612.07 L904.50,610.44 L905.35,608.81 L906.21,607.18 L907.06,605.55 L907.91,603.92 L908.76,602.29 L909.61,600.66 L910.46,599.03 L911.31,597.40 L912.15,595.77 L913.00,594.14 L913.85,592.51 L914.69,590.88 L915.54,589.25 L916.38,587.62 L917.22,585.99 L918.07,584.36 L918.91,582.73 L919.75,581.10 L920.58,579.47 L921.42,577.84 L922.26,576.21 L923.09,574.58 L923.92,572.95 L924.75,571.32 L925.58,569.69 L926.41,568.06 L927.23,566.43 L928.06,564.80 L928.88,563.17 L929.70,561.54 L930.52,559.91 L931.33,558.28 L932.14,556.65 L932.96,555.02 L933.76,553.39 L934.57,551.76 L935.37,550.13 L936.18,548.50 L936.97,546.87 L937.77,545.24 L938.56,543.61 L939.36,541.98 L940.14,540.35 L940.93,538.72 L941.71,537.09 L942.49,535.46 L943.27,533.83 L944.04,532.20 L944.81,530.57 L945.58,528.94 L946.34,527.31 L947.10,525.68 L947.86,524.05 L948.61,522.42 L949.36,520.79 L950.11,519.16 L950.85,517.53 L951.59,515.90 L952.33,514.27 L953.06,512.64 L953.79,511.01 L954.51,509.38 L955.23,507.75 L955.95,506.12 L956.66,504.49 L957.37,502.86 L958.07,501.23 L958.77,499.60 L959.47,497.97 L960.16,496.34 L960.85,494.71 L961.53,493.08 L962.21,491.45 L962.88,489.82 L963.55,488.19 L964.21,486.56 L964.87,484.93 L965.53,483.30 L966.18,481.67 L966.82,480.04 L967.46,478.41 L968.10,476.78 L968.73,475.15 L969.35,473.52 L969.97,471.89 L970.59,470.26 L971.20,468.63 L971.80,467.00 L972.40,465.37 L973.00,463.74 L973.58,462.11 L974.17,460.48 L974.75,458.85 L975.32,457.22 L975.89,455.59 L976.45,453.96 L977.00,452.33 L977.55,450.70 L978.10,449.07 L978.64,447.44 L979.17,445.81 L979.70,444.18 L980.22,442.55 L980.73,440.92 L981.24,439.29 L981.75,437.66 L982.24,436.03 L982.74,434.40 L983.22,432.77 L983.70,431.14 L984.17,429.51 L984.64,427.88 L985.10,426.25 L985.56,424.62 L986.00,422.99 L986.45,421.36 L986.88,419.73 L987.31,418.10 L987.73,416.47 L988.15,414.84 L988.56,413.21 L988.96,411.58 L989.36,409.95 L989.75,408.32 L990.13,406.69 L990.51,405.06 L990.88,403.43 L991.24,401.80 L991.60,400.17 L991.95,398.54 L992.29,396.91 L992.63,395.28 L992.96,393.65 L993.28,392.02 L993.59,390.39 L993.90,388.76 L994.20,387.13 L994.50,385.50 L994.79,383.87 L995.07,382.24 L995.34,380.61 L995.61,378.98 L995.87,377.35 L996.12,375.72 L996.37,374.09 L996.60,372.46 L996.83,370.83 L997.06,369.20 L997.28,367.57 L997.49,365.94 L997.69,364.31 L997.88,362.68 L998.07,361.05 L998.25,359.42 L998.42,357.79 L998.59,356.16 L998.75,354.53 L998.90,352.90 L999.05,351.27 L999.18,349.64 L999.31,348.01 L999.43,346.38 L999.55,344.75 L999.66,343.12 L999.76,341.49 L999.85,339.86 L999.93,338.23 L1000.01,336.60 L1000.08,334.97 L1000.15,333.34 L1000.20,331.71 L1000.25,330.08 L1000.29,328.45 L1000.32,326.82 L1000.35,325.19 L1000.37,323.56 L1000.38,321.93 L1000.38,320.30 L1000.38,318.67 L1000.37,317.04 L1000.35,315.41 L1000.32,313.78 L1000.29,312.15 L1000.25,310.52 L1000.20,308.89 L1000.15,307.26 L1000.08,305.63 L1000.01,304.00 L999.93,302.37 L999.85,300.74 L999.76,299.11 L999.66,297.48 L999.55,295.85 L999.43,294.22 L999.31,292.59 L999.18,290.96 L999.05,289.33 L998.90,287.70 L998.75,286.07 L998.59,284.44 L998.42,282.81 L998.25,281.18 L998.07,279.55 L997.88,277.92 L997.69,276.29 L997.49,274.66 L997.28,273.03 L997.06,271.40 L996.83,269.77 L996.60,268.14 L996.37,266.51 L996.12,264.88 L995.87,263.25 L995.61,261.62 L995.34,259.99 L995.07,258.36 L994.79,256.73 L994.50,255.10 L994.20,253.47 L993.90,251.84 L993.59,250.21 L993.28,248.58 L992.96,246.95 L992.63,245.32 L992.29,243.69 L991.95,242.06 L991.60,240.43 L991.24,238.80 L990.88,237.17 L990.51,235.54 L990.13,233.91 L989.75,232.28 L989.36,230.65 L988.96,229.02 L988.56,227.39 L988.15,225.76 L987.73,224.13 L987.31,222.50 L986.88,220.87 L986.45,219.24 L986.00,217.61 L985.56,215.98 L985.10,214.35 L984.64,212.72 L984.17,211.09 L983.70,209.46 L983.22,207.83 L982.74,206.20 L982.24,204.57 L981.75,202.94 L981.24,201.31 L980.73,199.68 L980.22,198.05 L979.70,196.42 L979.17,194.79 L978.64,193.16 L978.10,191.53 L977.55,189.90 L977.00,188.27 L976.45,186.64 L975.89,185.01 L975.32,183.38 L974.75,181.75 L974.17,180.12 L973.58,178.49 L973.00,176.86 L972.40,175.23 L971.80,173.60 L971.20,171.97 L970.59,170.34 L969.97,168.71 L969.35,167.08 L968.73,165.45 L968.10,163.82 L967.46,162.19 L966.82,160.56 L966.18,158.93 L965.53,157.30 L964.87,155.67 L964.21,154.04 L963.55,152.41 L962.88,150.78 L962.21,149.15 L961.53,147.52 L960.85,145.89 L960.16,144.26 L959.47,142.63 L958.77,141.00 L958.07,139.37 L957.37,137.74 L956.66,136.11 L955.95,134.48 L955.23,132.85 L954.51,131.22 L953.79,129.59 L953.06,127.96 L952.33,126.33 L951.59,124.70 L950.85,123.07 L950.11,121.44 L949.36,119.81 L948.61,118.18 L947.86,116.55 L947.10,114.92 L946.34,113.29 L945.58,111.66 L944.81,110.03 L944.04,108.40 L943.27,106.77 L942.49,105.14 L941.71,103.51 L940.93,101.88 L940.14,100.25 L939.36,98.62 L938.56,96.99 L937.77,95.36 L936.97,93.73 L936.18,92.10 L935.37,90.47 L934.57,88.84 L933.76,87.21 L932.96,85.58 L932.14,83.95 L931.33,82.32 L930.52,80.69 L929.70,79.06 L928.88,77.43 L928.06,75.80 L927.23,74.17 L926.41,72.54 L925.58,70.91 L924.75,69.28 L923.92,67.65 L923.09,66.02 L922.26,64.39 L921.42,62.76 L920.58,61.13 L919.75,59.50 L918.91,57.87 L918.07,56.24 L917.22,54.61 L916.38,52.98 L915.54,51.35 L914.69,49.72 L913.85,48.09 L913.00,46.46 L912.15,44.83 L911.31,43.20 L910.46,41.57 L909.61,39.94 L908.76,38.31 L907.91,36.68 L907.06,35.05 L906.21,33.42 L905.35,31.79 L904.50,30.16 L903.65,28.53 L902.80,26.90"/>
<path d="M902.80,613.70 L904.08,612.07 L905.35,610.44 L906.63,608.81 L907.91,607.18 L909.18,605.55 L910.46,603.92 L911.74,602.29 L913.01,600.66 L914.28,599.03 L915.56,597.40 L916.83,595.77 L918.10,594.14 L919.37,592.51 L920.64,590.88 L921.91,589.25 L923.17,587.62 L924.44,585.99 L925.70,584.36 L926.96,582.73 L928.22,581.10 L929.47,579.47 L930.73,577.84 L931.98,576.21 L933.23,574.58 L934.48,572.95 L935.73,571.32 L936.97,569.69 L938.21,568.06 L939.45,566.43 L940.68,564.80 L941.92,563.17 L943.15,561.54 L944.37,559.91 L945.60,558.28 L946.82,556.65 L948.03,555.02 L949.25,553.39 L950.46,551.76 L951.66,550.13 L952.86,548.50 L954.06,546.87 L955.26,545.24 L956.45,543.61 L957.63,541.98 L958.82,540.35 L959.99,538.72 L961.17,537.09 L962.34,535.46 L963.50,533.83 L964.66,532.20 L965.82,530.57 L966.97,528.94 L968.11,527.31 L969.25,525.68 L970.39,524.05 L971.52,522.42 L972.64,520.79 L973.76,519.16 L974.88,517.53 L975.99,515.90 L977.09,514.27 L978.19,512.64 L979.28,511.01 L980.37,509.38 L981.45,507.75 L982.52,506.12 L983.59,504.49 L984.65,502.86 L985.71,501.23 L986.76,499.60 L987.80,497.97 L988.84,496.34 L989.87,494.71 L990.89,493.08 L991.91,491.45 L992.92,489.82 L993.92,488.19 L994.92,486.56 L995.91,484.93 L996.89,483.30 L997.86,481.67 L998.83,480.04 L999.79,478.41 L1000.74,476.78 L1001.69,475.15 L1002.63,473.52 L1003.56,471.89 L1004.48,470.26 L1005.40,468.63 L1006.30,467.00 L1007.20,465.37 L1008.09,463.74 L1008.98,462.11 L1009.85,460.48 L1010.72,458.85 L1011.58,457.22 L1012.43,455.59 L1013.27,453.96 L1014.11,452.33 L1014.93,450.70 L1015.75,449.07 L1016.56,447.44 L1017.36,445.81 L1018.15,444.18 L1018.93,442.55 L1019.70,440.92 L1020.47,439.29 L1021.22,437.66 L1021.97,436.03 L1022.70,434.40 L1023.43,432.77 L1024.15,431.14 L1024.86,429.51 L1025.56,427.88 L1026.25,426.25 L1026.93,424.62 L1027.61,422.99 L1028.27,421.36 L1028.92,419.73 L1029.57,418.10 L1030.20,416.47 L1030.82,414.84 L1031.44,413.21 L1032.04,411.58 L1032.64,409.95 L1033.22,408.32 L1033.80,406.69 L1034.36,405.06 L1034.92,403.43 L1035.46,401.80 L1036.00,400.17 L1036.52,398.54 L1037.04,396.91 L1037.54,395.28 L1038.03,393.65 L1038.52,392.02 L1038.99,390.39 L1039.45,388.76 L1039.91,387.13 L1040.35,385.50 L1040.78,383.87 L1041.20,382.24 L1041.61,380.61 L1042.01,378.98 L1042.40,377.35 L1042.78,375.72 L1043.15,374.09 L1043.51,372.46 L1043.85,370.83 L1044.19,369.20 L1044.51,367.57 L1044.83,365.94 L1045.13,364.31 L1045.42,362.68 L1045.71,361.05 L1045.98,359.42 L1046.24,357.79 L1046.49,356.16 L1046.72,354.53 L1046.95,352.90 L1047.17,351.27 L1047.37,349.64 L1047.57,348.01 L1047.75,346.38 L1047.92,344.75 L1048.08,343.12 L1048.24,341.49 L1048.37,339.86 L1048.50,338.23 L1048.62,336.60 L1048.72,334.97 L1048.82,333.34 L1048.90,331.71 L1048.98,330.08 L1049.04,328.45 L1049.09,326.82 L1049.13,325.19 L1049.15,323.56 L1049.17,321.93 L1049.18,320.30 L1049.17,318.67 L1049.15,317.04 L1049.13,315.41 L1049.09,313.78 L1049.04,312.15 L1048.98,310.52 L1048.90,308.89 L1048.82,307.26 L1048.72,305.63 L1048.62,304.00 L1048.50,302.37 L1048.37,300.74 L1048.24,299.11 L1048.08,297.48 L1047.92,295.85 L1047.75,294.22 L1047.57,292.59 L1047.37,290.96 L1047.17,289.33 L1046.95,287.70 L1046.72,286.07 L1046.49,284.44 L1046.24,282.81 L1045.98,281.18 L1045.71,279.55 L1045.42,277.92 L1045.13,276.29 L1044.83,274.66 L1044.51,273.03 L1044.19,271.40 L1043.85,269.77 L1043.51,268.14 L1043.15,266.51 L1042.78,264.88 L1042.40,263.25 L1042.01,261.62 L1041.61,259.99 L1041.20,258.36 L1040.78,256.73 L1040.35,255.10 L1039.91,253.47 L1039.45,251.84 L1038.99,250.21 L1038.52,248.58 L1038.03,246.95 L1037.54,245.32 L1037.04,243.69 L1036.52,242.06 L1036.00,240.43 L1035.46,238.80 L1034.92,237.17 L1034.36,235.54 L1033.80,233.91 L1033.22,232.28 L1032.64,230.65 L1032.04,229.02 L1031.44,227.39 L1030.82,225.76 L1030.20,224.13 L1029.57,222.50 L1028.92,220.87 L1028.27,219.24 L1027.61,217.61 L1026.93,215.98 L1026.25,214.35 L1025.56,212.72 L1024.86,211.09 L1024.15,209.46 L1023.43,207.83 L1022.70,206.20 L1021.97,204.57 L1021.22,202.94 L1020.47,201.31 L1019.70,199.68 L1018.93,198.05 L1018.15,196.42 L1017.36,194.79 L1016.56,193.16 L1015.75,191.53 L1014.93,189.90 L1014.11,188.27 L1013.27,186.64 L1012.43,185.01 L1011.58,183.38 L1010.72,181.75 L1009.85,180.12 L1008.98,178.49 L1008.09,176.86 L1007.20,175.23 L1006.30,173.60 L1005.40,171.97 L1004.48,170.34 L1003.56,168.71 L1002.63,167.08 L1001.69,165.45 L1000.74,163.82 L999.79,162.19 L998.83,160.56 L997.86,158.93 L996.89,157.30 L995.91,155.67 L994.92,154.04 L993.92,152.41 L992.92,150.78 L991.91,149.15 L990.89,147.52 L989.87,145.89 L988.84,144.26 L987.80,142.63 L986.76,141.00 L985.71,139.37 L984.65,137.74 L983.59,136.11 L982.52,134.48 L981.45,132.85 L980.37,131.22 L979.28,129.59 L978.19,127.96 L977.09,126.33 L975.99,124.70 L974.88,123.07 L973.76,121.44 L972.64,119.81 L971.52,118.18 L970.39,116.55 L969.25,114.92 L968.11,113.29 L966.97,111.66 L965.82,110.03 L964.66,108.40 L963.50,106.77 L962.34,105.14 L961.17,103.51 L959.99,101.88 L958.82,100.25 L957.63,98.62 L956.45,96.99 L955.26,95.36 L954.06,93.73 L952.86,92.10 L951.66,90.47 L950.46,88.84 L949.25,87.21 L948.03,85.58 L946.82,83.95 L945.60,82.32 L944.37,80.69 L943.15,79.06 L941.92,77.43 L940.68,75.80 L939.45,74.17 L938.21,72.54 L936.97,70.91 L935.73,69.28 L934.48,67.65 L933.23,66.02 L931.98,64.39 L930.73,62.76 L929.47,61.13 L928.22,59.50 L926.96,57.87 L925.70,56.24 L924.44,54.61 L923.17,52.98 L921.91,51.35 L920.64,49.72 L919.37,48.09 L918.10,46.46 L916.83,44.83 L915.56,43.20 L914.28,41.57 L913.01,39.94 L911.74,38.31 L910.46,36.68 L909.18,35.05 L907.91,33.42 L906.63,31.79 L905.35,30.16 L904.08,28.53 L902.80,26.90"/>
<path d="M902.80,613.70 L904.50,612.07 L906.21,610.44 L907.91,608.81 L909.61,607.18 L911.31,605.55 L913.01,603.92 L914.71,602.29 L916.41,600.66 L918.11,599.03 L919.81,597.40 L921.51,595.77 L923.20,594.14 L924.89,592.51 L926.58,590.88 L928.27,589.25 L929.96,587.62 L931.65,585.99 L933.33,584.36 L935.01,582.73 L936.69,581.10 L938.37,579.47 L940.04,577.84 L941.71,576.21 L943.38,574.58 L945.04,572.95 L946.70,571.32 L948.36,569.69 L950.02,568.06 L951.67,566.43 L953.31,564.80 L954.96,563.17 L956.60,561.54 L958.23,559.91 L959.86,558.28 L961.49,556.65 L963.11,555.02 L964.73,553.39 L966.34,551.76 L967.95,550.13 L969.55,548.50 L971.15,546.87 L972.74,545.24 L974.33,543.61 L975.91,541.98 L977.49,540.35 L979.06,538.72 L980.62,537.09 L982.18,535.46 L983.73,533.83 L985.28,532.20 L986.82,530.57 L988.36,528.94 L989.88,527.31 L991.40,525.68 L992.92,524.05 L994.43,522.42 L995.93,520.79 L997.42,519.16 L998.91,517.53 L1000.38,515.90 L1001.86,514.27 L1003.32,512.64 L1004.77,511.01 L1006.22,509.38 L1007.66,507.75 L1009.10,506.12 L1010.52,504.49 L1011.94,502.86 L1013.34,501.23 L1014.74,499.60 L1016.13,497.97 L1017.52,496.34 L1018.89,494.71 L1020.26,493.08 L1021.61,491.45 L1022.96,489.82 L1024.29,488.19 L1025.62,486.56 L1026.94,484.93 L1028.25,483.30 L1029.55,481.67 L1030.84,480.04 L1032.12,478.41 L1033.39,476.78 L1034.65,475.15 L1035.90,473.52 L1037.14,471.89 L1038.38,470.26 L1039.60,468.63 L1040.80,467.00 L1042.00,465.37 L1043.19,463.74 L1044.37,462.11 L1045.54,460.48 L1046.69,458.85 L1047.84,457.22 L1048.97,455.59 L1050.10,453.96 L1051.21,452.33 L1052.31,450.70 L1053.40,449.07 L1054.47,447.44 L1055.54,445.81 L1056.59,444.18 L1057.64,442.55 L1058.67,440.92 L1059.69,439.29 L1060.69,437.66 L1061.69,436.03 L1062.67,434.40 L1063.64,432.77 L1064.60,431.14 L1065.55,429.51 L1066.48,427.88 L1067.40,426.25 L1068.31,424.62 L1069.21,422.99 L1070.09,421.36 L1070.96,419.73 L1071.82,418.10 L1072.67,416.47 L1073.50,414.84 L1074.32,413.21 L1075.12,411.58 L1075.92,409.95 L1076.70,408.32 L1077.46,406.69 L1078.22,405.06 L1078.96,403.43 L1079.68,401.80 L1080.40,400.17 L1081.09,398.54 L1081.78,396.91 L1082.45,395.28 L1083.11,393.65 L1083.76,392.02 L1084.39,390.39 L1085.01,388.76 L1085.61,387.13 L1086.20,385.50 L1086.77,383.87 L1087.33,382.24 L1087.88,380.61 L1088.42,378.98 L1088.94,377.35 L1089.44,375.72 L1089.93,374.09 L1090.41,372.46 L1090.87,370.83 L1091.32,369.20 L1091.75,367.57 L1092.17,365.94 L1092.58,364.31 L1092.97,362.68 L1093.34,361.05 L1093.70,359.42 L1094.05,357.79 L1094.38,356.16 L1094.70,354.53 L1095.00,352.90 L1095.29,351.27 L1095.57,349.64 L1095.82,348.01 L1096.07,346.38 L1096.30,344.75 L1096.51,343.12 L1096.71,341.49 L1096.90,339.86 L1097.07,338.23 L1097.23,336.60 L1097.37,334.97 L1097.49,333.34 L1097.60,331.71 L1097.70,330.08 L1097.78,328.45 L1097.85,326.82 L1097.90,325.19 L1097.94,323.56 L1097.96,321.93 L1097.97,320.30 L1097.96,318.67 L1097.94,317.04 L1097.90,315.41 L1097.85,313.78 L1097.78,312.15 L1097.70,310.52 L1097.60,308.89 L1097.49,307.26 L1097.37,305.63 L1097.23,304.00 L1097.07,302.37 L1096.90,300.74 L1096.71,299.11 L1096.51,297.48 L1096.30,295.85 L1096.07,294.22 L1095.82,292.59 L1095.57,290.96 L1095.29,289.33 L1095.00,287.70 L1094.70,286.07 L1094.38,284.44 L1094.05,282.81 L1093.70,281.18 L1093.34,279.55 L1092.97,277.92 L1092.58,276.29 L1092.17,274.66 L1091.75,273.03 L1091.32,271.40 L1090.87,269.77 L1090.41,268.14 L1089.93,266.51 L1089.44,264.88 L1088.94,263.25 L1088.42,261.62 L1087.88,259.99 L1087.33,258.36 L1086.77,256.73 L1086.20,255.10 L1085.61,253.47 L1085.01,251.84 L1084.39,250.21 L1083.76,248.58 L1083.11,246.95 L1082.45,245.32 L1081.78,243.69 L1081.09,242.06 L1080.40,240.43 L1079.68,238.80 L1078.96,237.17 L1078.22,235.54 L1077.46,233.91 L1076.70,232.28 L1075.92,230.65 L1075.12,229.02 L1074.32,227.39 L1073.50,225.76 L1072.67,224.13 L1071.82,222.50 L1070.96,220.87 L1070.09,219.24 L1069.21,217.61 L1068.31,215.98 L1067.40,214.35 L1066.48,212.72 L1065.55,211.09 L1064.60,209.46 L1063.64,207.83 L1062.67,206.20 L1061.69,204.57 L1060.69,202.94 L1059.69,201.31 L1058.67,199.68 L1057.64,198.05 L1056.59,196.42 L1055.54,194.79 L1054.47,193.16 L1053.40,191.53 L1052.31,189.90 L1051.21,188.27 L1050.10,186.64 L1048.97,185.01 L1047.84,183.38 L1046.69,181.75 L1045.54,180.12 L1044.37,178.49 L1043.19,176.86 L1042.00,175.23 L1040.80,173.60 L1039.60,171.97 L1038.38,170.34 L1037.14,168.71 L1035.90,167.08 L1034.65,165.45 L1033.39,163.82 L1032.12,162.19 L1030.84,160.56 L1029.55,158.93 L1028.25,157.30 L1026.94,155.67 L1025.62,154.04 L1024.29,152.41 L1022.96,150.78 L1021.61,149.15 L1020.26,147.52 L1018.89,145.89 L1017.52,144.26 L1016.13,142.63 L1014.74,141.00 L1013.34,139.37 L1011.94,137.74 L1010.52,136.11 L1009.10,134.48 L1007.66,132.85 L1006.22,131.22 L1004.77,129.59 L1003.32,127.96 L1001.86,126.33 L1000.38,124.70 L998.91,123.07 L997.42,121.44 L995.93,119.81 L994.43,118.18 L992.92,116.55 L991.40,114.92 L989.88,113.29 L988.36,111.66 L986.82,110.03 L985.28,108.40 L983.73,106.77 L982.18,105.14 L980.62,103.51 L979.06,101.88 L977.49,100.25 L975.91,98.62 L974.33,96.99 L972.74,95.36 L971.15,93.73 L969.55,92.10 L967.95,90.47 L966.34,88.84 L964.73,87.21 L963.11,85.58 L961.49,83.95 L959.86,82.32 L958.23,80.69 L956.60,79.06 L954.96,77.43 L953.31,75.80 L951.67,74.17 L950.02,72.54 L948.36,70.91 L946.70,69.28 L945.04,67.65 L943.38,66.02 L941.71,64.39 L940.04,62.76 L938.37,61.13 L936.69,59.50 L935.01,57.87 L933.33,56.24 L931.65,54.61 L929.96,52.98 L928.27,51.35 L926.58,49.72 L924.89,48.09 L923.20,46.46 L921.51,44.83 L919.81,43.20 L918.11,41.57 L916.41,39.94 L914.71,38.31 L913.01,36.68 L911.31,35.05 L909.61,33.42 L907.91,31.79 L906.21,30.16 L904.50,28.53 L902.80,26.90"/>
<path d="M902.80,613.70 L904.93,612.07 L907.06,610.44 L909.19,608.81 L911.31,607.18 L913.44,605.55 L915.57,603.92 L917.69,602.29 L919.82,600.66 L921.94,599.03 L924.06,597.40 L926.18,595.77 L928.30,594.14 L930.42,592.51 L932.53,590.88 L934.64,589.25 L936.75,587.62 L938.86,585.99 L940.96,584.36 L943.07,582.73 L945.16,581.10 L947.26,579.47 L949.35,577.84 L951.44,576.21 L953.52,574.58 L955.60,572.95 L957.68,571.32 L959.75,569.69 L961.82,568.06 L963.88,566.43 L965.94,564.80 L968.00,563.17 L970.04,561.54 L972.09,559.91 L974.13,558.28 L976.16,556.65 L978.19,555.02 L980.21,553.39 L982.23,551.76 L984.24,550.13 L986.24,548.50 L988.24,546.87 L990.23,545.24 L992.21,543.61 L994.19,541.98 L996.16,540.35 L998.12,538.72 L1000.08,537.09 L1002.03,535.46 L1003.97,533.83 L1005.90,532.20 L1007.83,530.57 L1009.75,528.94 L1011.65,527.31 L1013.56,525.68 L1015.45,524.05 L1017.33,522.42 L1019.21,520.79 L1021.07,519.16 L1022.93,517.53 L1024.78,515.90 L1026.62,514.27 L1028.45,512.64 L1030.27,511.01 L1032.08,509.38 L1033.88,507.75 L1035.67,506.12 L1037.45,504.49 L1039.22,502.86 L1040.98,501.23 L1042.73,499.60 L1044.47,497.97 L1046.20,496.34 L1047.91,494.71 L1049.62,493.08 L1051.31,491.45 L1053.00,489.82 L1054.67,488.19 L1056.33,486.56 L1057.98,484.93 L1059.61,483.30 L1061.24,481.67 L1062.85,480.04 L1064.45,478.41 L1066.04,476.78 L1067.62,475.15 L1069.18,473.52 L1070.73,471.89 L1072.27,470.26 L1073.79,468.63 L1075.31,467.00 L1076.80,465.37 L1078.29,463.74 L1079.76,462.11 L1081.22,460.48 L1082.67,458.85 L1084.10,457.22 L1085.52,455.59 L1086.92,453.96 L1088.31,452.33 L1089.68,450.70 L1091.05,449.07 L1092.39,447.44 L1093.73,445.81 L1095.04,444.18 L1096.35,442.55 L1097.64,440.92 L1098.91,439.29 L1100.17,437.66 L1101.41,436.03 L1102.64,434.40 L1103.85,432.77 L1105.05,431.14 L1106.23,429.51 L1107.40,427.88 L1108.55,426.25 L1109.69,424.62 L1110.81,422.99 L1111.91,421.36 L1113.00,419.73 L1114.08,418.10 L1115.13,416.47 L1116.17,414.84 L1117.20,413.21 L1118.20,411.58 L1119.20,409.95 L1120.17,408.32 L1121.13,406.69 L1122.07,405.06 L1122.99,403.43 L1123.90,401.80 L1124.79,400.17 L1125.67,398.54 L1126.53,396.91 L1127.37,395.28 L1128.19,393.65 L1129.00,392.02 L1129.78,390.39 L1130.56,388.76 L1131.31,387.13 L1132.05,385.50 L1132.77,383.87 L1133.47,382.24 L1134.15,380.61 L1134.82,378.98 L1135.47,377.35 L1136.10,375.72 L1136.71,374.09 L1137.31,372.46 L1137.89,370.83 L1138.45,369.20 L1138.99,367.57 L1139.51,365.94 L1140.02,364.31 L1140.51,362.68 L1140.98,361.05 L1141.43,359.42 L1141.86,357.79 L1142.28,356.16 L1142.67,354.53 L1143.05,352.90 L1143.41,351.27 L1143.76,349.64 L1144.08,348.01 L1144.39,346.38 L1144.67,344.75 L1144.94,343.12 L1145.19,341.49 L1145.42,339.86 L1145.64,338.23 L1145.83,336.60 L1146.01,334.97 L1146.17,333.34 L1146.30,331.71 L1146.43,330.08 L1146.53,328.45 L1146.61,326.82 L1146.68,325.19 L1146.72,323.56 L1146.75,321.93 L1146.76,320.30 L1146.75,318.67 L1146.72,317.04 L1146.68,315.41 L1146.61,313.78 L1146.53,312.15 L1146.43,310.52 L1146.30,308.89 L1146.17,307.26 L1146.01,305.63 L1145.83,304.00 L1145.64,302.37 L1145.42,300.74 L1145.19,299.11 L1144.94,297.48 L1144.67,295.85 L1144.39,294.22 L1144.08,292.59 L1143.76,290.96 L1143.41,289.33 L1143.05,287.70 L1142.67,286.07 L1142.28,284.44 L1141.86,282.81 L1141.43,281.18 L1140.98,279.55 L1140.51,277.92 L1140.02,276.29 L1139.51,274.66 L1138.99,273.03 L1138.45,271.40 L1137.89,269.77 L1137.31,268.14 L1136.71,266.51 L1136.10,264.88 L1135.47,263.25 L1134.82,261.62 L1134.15,259.99 L1133.47,258.36 L1132.77,256.73 L1132.05,255.10 L1131.31,253.47 L1130.56,251.84 L1129.78,250.21 L1129.00,248.58 L1128.19,246.95 L1127.37,245.32 L1126.53,243.69 L1125.67,242.06 L1124.79,240.43 L1123.90,238.80 L1122.99,237.17 L1122.07,235.54 L1121.13,233.91 L1120.17,232.28 L1119.20,230.65 L1118.20,229.02 L1117.20,227.39 L1116.17,225.76 L1115.13,224.13 L1114.08,222.50 L1113.00,220.87 L1111.91,219.24 L1110.81,217.61 L1109.69,215.98 L1108.55,214.35 L1107.40,212.72 L1106.23,211.09 L1105.05,209.46 L1103.85,207.83 L1102.64,206.20 L1101.41,204.57 L1100.17,202.94 L1098.91,201.31 L1097.64,199.68 L1096.35,198.05 L1095.04,196.42 L1093.73,194.79 L1092.39,193.16 L1091.05,191.53 L1089.68,189.90 L1088.31,188.27 L1086.92,186.64 L1085.52,185.01 L1084.10,183.38 L1082.67,181.75 L1081.22,180.12 L1079.76,178.49 L1078.29,176.86 L1076.80,175.23 L1075.31,173.60 L1073.79,171.97 L1072.27,170.34 L1070.73,168.71 L1069.18,167.08 L1067.62,165.45 L1066.04,163.82 L1064.45,162.19 L1062.85,160.56 L1061.24,158.93 L1059.61,157.30 L1057.98,155.67 L1056.33,154.04 L1054.67,152.41 L1053.00,150.78 L1051.31,149.15 L1049.62,147.52 L1047.91,145.89 L1046.20,144.26 L1044.47,142.63 L1042.73,141.00 L1040.98,139.37 L1039.22,137.74 L1037.45,136.11 L1035.67,134.48 L1033.88,132.85 L1032.08,131.22 L1030.27,129.59 L1028.45,127.96 L1026.62,126.33 L1024.78,124.70 L1022.93,123.07 L1021.07,121.44 L1019.21,119.81 L1017.33,118.18 L1015.45,116.55 L1013.56,114.92 L1011.65,113.29 L1009.75,111.66 L1007.83,110.03 L1005.90,108.40 L1003.97,106.77 L1002.03,105.14 L1000.08,103.51 L998.12,101.88 L996.16,100.25 L994.19,98.62 L992.21,96.99 L990.23,95.36 L988.24,93.73 L986.24,92.10 L984.24,90.47 L982.23,88.84 L980.21,87.21 L978.19,85.58 L976.16,83.95 L974.13,82.32 L972.09,80.69 L970.04,79.06 L968.00,77.43 L965.94,75.80 L963.88,74.17 L961.82,72.54 L959.75,70.91 L957.68,69.28 L955.60,67.65 L953.52,66.02 L951.44,64.39 L949.35,62.76 L947.26,61.13 L945.16,59.50 L943.07,57.87 L940.96,56.24 L938.86,54.61 L936.75,52.98 L934.64,51.35 L932.53,49.72 L930.42,48.09 L928.30,46.46 L926.18,44.83 L924.06,43.20 L921.94,41.57 L919.82,39.94 L917.69,38.31 L915.57,36.68 L913.44,35.05 L911.31,33.42 L909.19,31.79 L907.06,30.16 L904.93,28.53 L902.80,26.90"/>
<path d="M902.80,613.70 L905.35,612.07 L907.91,610.44 L910.46,608.81 L913.02,607.18 L915.57,605.55 L918.12,603.92 L920.67,602.29 L923.22,600.66 L925.77,599.03 L928.32,597.40 L930.86,595.77 L933.40,594.14 L935.94,592.51 L938.48,590.88 L941.01,589.25 L943.54,587.62 L946.07,585.99 L948.60,584.36 L951.12,582.73 L953.64,581.10 L956.15,579.47 L958.66,577.84 L961.17,576.21 L963.67,574.58 L966.16,572.95 L968.65,571.32 L971.14,569.69 L973.62,568.06 L976.10,566.43 L978.57,564.80 L981.03,563.17 L983.49,561.54 L985.95,559.91 L988.39,558.28 L990.83,556.65 L993.27,555.02 L995.69,553.39 L998.11,551.76 L1000.52,550.13 L1002.93,548.50 L1005.32,546.87 L1007.71,545.24 L1010.09,543.61 L1012.47,541.98 L1014.83,540.35 L1017.19,538.72 L1019.53,537.09 L1021.87,535.46 L1024.20,533.83 L1026.52,532.20 L1028.83,530.57 L1031.13,528.94 L1033.43,527.31 L1035.71,525.68 L1037.98,524.05 L1040.24,522.42 L1042.49,520.79 L1044.73,519.16 L1046.96,517.53 L1049.18,515.90 L1051.38,514.27 L1053.58,512.64 L1055.76,511.01 L1057.93,509.38 L1060.10,507.75 L1062.24,506.12 L1064.38,504.49 L1066.50,502.86 L1068.62,501.23 L1070.72,499.60 L1072.80,497.97 L1074.88,496.34 L1076.94,494.71 L1078.98,493.08 L1081.02,491.45 L1083.04,489.82 L1085.04,488.19 L1087.03,486.56 L1089.01,484.93 L1090.98,483.30 L1092.93,481.67 L1094.86,480.04 L1096.78,478.41 L1098.69,476.78 L1100.58,475.15 L1102.46,473.52 L1104.32,471.89 L1106.16,470.26 L1107.99,468.63 L1109.81,467.00 L1111.61,465.37 L1113.39,463.74 L1115.15,462.11 L1116.91,460.48 L1118.64,458.85 L1120.36,457.22 L1122.06,455.59 L1123.74,453.96 L1125.41,452.33 L1127.06,450.70 L1128.69,449.07 L1130.31,447.44 L1131.91,445.81 L1133.49,444.18 L1135.06,442.55 L1136.60,440.92 L1138.13,439.29 L1139.64,437.66 L1141.13,436.03 L1142.61,434.40 L1144.06,432.77 L1145.50,431.14 L1146.92,429.51 L1148.32,427.88 L1149.70,426.25 L1151.07,424.62 L1152.41,422.99 L1153.74,421.36 L1155.04,419.73 L1156.33,418.10 L1157.60,416.47 L1158.85,414.84 L1160.08,413.21 L1161.28,411.58 L1162.47,409.95 L1163.64,408.32 L1164.79,406.69 L1165.92,405.06 L1167.03,403.43 L1168.12,401.80 L1169.19,400.17 L1170.24,398.54 L1171.27,396.91 L1172.28,395.28 L1173.27,393.65 L1174.23,392.02 L1175.18,390.39 L1176.11,388.76 L1177.01,387.13 L1177.90,385.50 L1178.76,383.87 L1179.60,382.24 L1180.42,380.61 L1181.22,378.98 L1182.00,377.35 L1182.76,375.72 L1183.50,374.09 L1184.21,372.46 L1184.90,370.83 L1185.58,369.20 L1186.23,367.57 L1186.86,365.94 L1187.46,364.31 L1188.05,362.68 L1188.61,361.05 L1189.15,359.42 L1189.67,357.79 L1190.17,356.16 L1190.65,354.53 L1191.10,352.90 L1191.54,351.27 L1191.95,349.64 L1192.34,348.01 L1192.70,346.38 L1193.05,344.75 L1193.37,343.12 L1193.67,341.49 L1193.95,339.86 L1194.20,338.23 L1194.44,336.60 L1194.65,334.97 L1194.84,333.34 L1195.01,331.71 L1195.15,330.08 L1195.27,328.45 L1195.37,326.82 L1195.45,325.19 L1195.51,323.56 L1195.54,321.93 L1195.55,320.30 L1195.54,318.67 L1195.51,317.04 L1195.45,315.41 L1195.37,313.78 L1195.27,312.15 L1195.15,310.52 L1195.01,308.89 L1194.84,307.26 L1194.65,305.63 L1194.44,304.00 L1194.20,302.37 L1193.95,300.74 L1193.67,299.11 L1193.37,297.48 L1193.05,295.85 L1192.70,294.22 L1192.34,292.59 L1191.95,290.96 L1191.54,289.33 L1191.10,287.70 L1190.65,286.07 L1190.17,284.44 L1189.67,282.81 L1189.15,281.18 L1188.61,279.55 L1188.05,277.92 L1187.46,276.29 L1186.86,274.66 L1186.23,273.03 L1185.58,271.40 L1184.90,269.77 L1184.21,268.14 L1183.50,266.51 L1182.76,264.88 L1182.00,263.25 L1181.22,261.62 L1180.42,259.99 L1179.60,258.36 L1178.76,256.73 L1177.90,255.10 L1177.01,253.47 L1176.11,251.84 L1175.18,250.21 L1174.23,248.58 L1173.27,246.95 L1172.28,245.32 L1171.27,243.69 L1170.24,242.06 L1169.19,240.43 L1168.12,238.80 L1167.03,237.17 L1165.92,235.54 L1164.79,233.91 L1163.64,232.28 L1162.47,230.65 L1161.28,229.02 L1160.08,227.39 L1158.85,225.76 L1157.60,224.13 L1156.33,222.50 L1155.04,220.87 L1153.74,219.24 L1152.41,217.61 L1151.07,215.98 L1149.70,214.35 L1148.32,212.72 L1146.92,211.09 L1145.50,209.46 L1144.06,207.83 L1142.61,206.20 L1141.13,204.57 L1139.64,202.94 L1138.13,201.31 L1136.60,199.68 L1135.06,198.05 L1133.49,196.42 L1131.91,194.79 L1130.31,193.16 L1128.69,191.53 L1127.06,189.90 L1125.41,188.27 L1123.74,186.64 L1122.06,185.01 L1120.36,183.38 L1118.64,181.75 L1116.91,180.12 L1115.15,178.49 L1113.39,176.86 L1111.61,175.23 L1109.81,173.60 L1107.99,171.97 L1106.16,170.34 L1104.32,168.71 L1102.46,167.08 L1100.58,165.45 L1098.69,163.82 L1096.78,162.19 L1094.86,160.56 L1092.93,158.93 L1090.98,157.30 L1089.01,155.67 L1087.03,154.04 L1085.04,152.41 L1083.04,150.78 L1081.02,149.15 L1078.98,147.52 L1076.94,145.89 L1074.88,144.26 L1072.80,142.63 L1070.72,141.00 L1068.62,139.37 L1066.50,137.74 L1064.38,136.11 L1062.24,134.48 L1060.10,132.85 L1057.93,131.22 L1055.76,129.59 L1053.58,127.96 L1051.38,126.33 L1049.18,124.70 L1046.96,123.07 L1044.73,121.44 L1042.49,119.81 L1040.24,118.18 L1037.98,116.55 L1035.71,114.92 L1033.43,113.29 L1031.13,111.66 L1028.83,110.03 L1026.52,108.40 L1024.20,106.77 L1021.87,105.14 L1019.53,103.51 L1017.19,101.88 L1014.83,100.25 L1012.47,98.62 L1010.09,96.99 L1007.71,95.36 L1005.32,93.73 L1002.93,92.10 L1000.52,90.47 L998.11,88.84 L995.69,87.21 L993.27,85.58 L990.83,83.95 L988.39,82.32 L985.95,80.69 L983.49,79.06 L981.03,77.43 L978.57,75.80 L976.10,74.17 L973.62,72.54 L971.14,70.91 L968.65,69.28 L966.16,67.65 L963.67,66.02 L961.17,64.39 L958.66,62.76 L956.15,61.13 L953.64,59.50 L951.12,57.87 L948.60,56.24 L946.07,54.61 L943.54,52.98 L941.01,51.35 L938.48,49.72 L935.94,48.09 L933.40,46.46 L930.86,44.83 L928.32,43.20 L925.77,41.57 L923.22,39.94 L920.67,38.31 L918.12,36.68 L915.57,35.05 L913.02,33.42 L910.46,31.79 L907.91,30.16 L905.35,28.53 L902.80,26.90"/>
<path d="M902.80,613.70 L905.78,612.07 L908.76,610.44 L911.74,608.81 L914.72,607.18 L917.70,605.55 L920.68,603.92 L923.65,602.29 L926.62,600.66 L929.60,599.03 L932.57,597.40 L935.54,595.77 L938.50,594.14 L941.46,592.51 L944.42,590.88 L947.38,589.25 L950.33,587.62 L953.28,585.99 L956.23,584.36 L959.17,582.73 L962.11,581.10 L965.04,579.47 L967.97,577.84 L970.89,576.21 L973.81,574.58 L976.72,572.95 L979.63,571.32 L982.53,569.69 L985.43,568.06 L988.32,566.43 L991.20,564.80 L994.07,563.17 L996.94,561.54 L999.80,559.91 L1002.66,558.28 L1005.50,556.65 L1008.34,555.02 L1011.17,553.39 L1014.00,551.76 L1016.81,550.13 L1019.61,548.50 L1022.41,546.87 L1025.20,545.24 L1027.98,543.61 L1030.74,541.98 L1033.50,540.35 L1036.25,538.72 L1038.99,537.09 L1041.72,535.46 L1044.44,533.83 L1047.14,532.20 L1049.84,530.57 L1052.52,528.94 L1055.20,527.31 L1057.86,525.68 L1060.51,524.05 L1063.15,522.42 L1065.77,520.79 L1068.38,519.16 L1070.98,517.53 L1073.57,515.90 L1076.15,514.27 L1078.71,512.64 L1081.26,511.01 L1083.79,509.38 L1086.31,507.75 L1088.82,506.12 L1091.31,504.49 L1093.79,502.86 L1096.25,501.23 L1098.70,499.60 L1101.14,497.97 L1103.55,496.34 L1105.96,494.71 L1108.35,493.08 L1110.72,491.45 L1113.08,489.82 L1115.42,488.19 L1117.74,486.56 L1120.05,484.93 L1122.34,483.30 L1124.62,481.67 L1126.87,480.04 L1129.11,478.41 L1131.34,476.78 L1133.54,475.15 L1135.73,473.52 L1137.90,471.89 L1140.06,470.26 L1142.19,468.63 L1144.31,467.00 L1146.41,465.37 L1148.49,463.74 L1150.55,462.11 L1152.59,460.48 L1154.61,458.85 L1156.62,457.22 L1158.60,455.59 L1160.57,453.96 L1162.51,452.33 L1164.44,450.70 L1166.34,449.07 L1168.23,447.44 L1170.10,445.81 L1171.94,444.18 L1173.77,442.55 L1175.57,440.92 L1177.35,439.29 L1179.11,437.66 L1180.86,436.03 L1182.58,434.40 L1184.28,432.77 L1185.95,431.14 L1187.61,429.51 L1189.24,427.88 L1190.86,426.25 L1192.45,424.62 L1194.01,422.99 L1195.56,421.36 L1197.08,419.73 L1198.59,418.10 L1200.06,416.47 L1201.52,414.84 L1202.95,413.21 L1204.37,411.58 L1205.75,409.95 L1207.12,408.32 L1208.46,406.69 L1209.78,405.06 L1211.07,403.43 L1212.34,401.80 L1213.59,400.17 L1214.82,398.54 L1216.02,396.91 L1217.19,395.28 L1218.35,393.65 L1219.47,392.02 L1220.58,390.39 L1221.66,388.76 L1222.71,387.13 L1223.75,385.50 L1224.75,383.87 L1225.74,382.24 L1226.69,380.61 L1227.63,378.98 L1228.54,377.35 L1229.42,375.72 L1230.28,374.09 L1231.11,372.46 L1231.92,370.83 L1232.71,369.20 L1233.47,367.57 L1234.20,365.94 L1234.91,364.31 L1235.59,362.68 L1236.25,361.05 L1236.88,359.42 L1237.49,357.79 L1238.07,356.16 L1238.62,354.53 L1239.16,352.90 L1239.66,351.27 L1240.14,349.64 L1240.59,348.01 L1241.02,346.38 L1241.42,344.75 L1241.80,343.12 L1242.15,341.49 L1242.47,339.86 L1242.77,338.23 L1243.04,336.60 L1243.29,334.97 L1243.51,333.34 L1243.71,331.71 L1243.88,330.08 L1244.02,328.45 L1244.14,326.82 L1244.23,325.19 L1244.29,323.56 L1244.33,321.93 L1244.34,320.30 L1244.33,318.67 L1244.29,317.04 L1244.23,315.41 L1244.14,313.78 L1244.02,312.15 L1243.88,310.52 L1243.71,308.89 L1243.51,307.26 L1243.29,305.63 L1243.04,304.00 L1242.77,302.37 L1242.47,300.74 L1242.15,299.11 L1241.80,297.48 L1241.42,295.85 L1241.02,294.22 L1240.59,292.59 L1240.14,290.96 L1239.66,289.33 L1239.16,287.70 L1238.62,286.07 L1238.07,284.44 L1237.49,282.81 L1236.88,281.18 L1236.25,279.55 L1235.59,277.92 L1234.91,276.29 L1234.20,274.66 L1233.47,273.03 L1232.71,271.40 L1231.92,269.77 L1231.11,268.14 L1230.28,266.51 L1229.42,264.88 L1228.54,263.25 L1227.63,261.62 L1226.69,259.99 L1225.74,258.36 L1224.75,256.73 L1223.75,255.10 L1222.71,253.47 L1221.66,251.84 L1220.58,250.21 L1219.47,248.58 L1218.35,246.95 L1217.19,245.32 L1216.02,243.69 L1214.82,242.06 L1213.59,240.43 L1212.34,238.80 L1211.07,237.17 L1209.78,235.54 L1208.46,233.91 L1207.12,232.28 L1205.75,230.65 L1204.37,229.02 L1202.95,227.39 L1201.52,225.76 L1200.06,224.13 L1198.59,222.50 L1197.08,220.87 L1195.56,219.24 L1194.01,217.61 L1192.45,215.98 L1190.86,214.35 L1189.24,212.72 L1187.61,211.09 L1185.95,209.46 L1184.28,207.83 L1182.58,206.20 L1180.86,204.57 L1179.11,202.94 L1177.35,201.31 L1175.57,199.68 L1173.77,198.05 L1171.94,196.42 L1170.10,194.79 L1168.23,193.16 L1166.34,191.53 L1164.44,189.90 L1162.51,188.27 L1160.57,186.64 L1158.60,185.01 L1156.62,183.38 L1154.61,181.75 L1152.59,180.12 L1150.55,178.49 L1148.49,176.86 L1146.41,175.23 L1144.31,173.60 L1142.19,171.97 L1140.06,170.34 L1137.90,168.71 L1135.73,167.08 L1133.54,165.45 L1131.34,163.82 L1129.11,162.19 L1126.87,160.56 L1124.62,158.93 L1122.34,157.30 L1120.05,155.67 L1117.74,154.04 L1115.42,152.41 L1113.08,150.78 L1110.72,149.15 L1108.35,147.52 L1105.96,145.89 L1103.55,144.26 L1101.14,142.63 L1098.70,141.00 L1096.25,139.37 L1093.79,137.74 L1091.31,136.11 L1088.82,134.48 L1086.31,132.85 L1083.79,131.22 L1081.26,129.59 L1078.71,127.96 L1076.15,126.33 L1073.57,124.70 L1070.98,123.07 L1068.38,121.44 L1065.77,119.81 L1063.15,118.18 L1060.51,116.55 L1057.86,114.92 L1055.20,113.29 L1052.52,111.66 L1049.84,110.03 L1047.14,108.40 L1044.44,106.77 L1041.72,105.14 L1038.99,103.51 L1036.25,101.88 L1033.50,100.25 L1030.74,98.62 L1027.98,96.99 L1025.20,95.36 L1022.41,93.73 L1019.61,92.10 L1016.81,90.47 L1014.00,88.84 L1011.17,87.21 L1008.34,85.58 L1005.50,83.95 L1002.66,82.32 L999.80,80.69 L996.94,79.06 L994.07,77.43 L991.20,75.80 L988.32,74.17 L985.43,72.54 L982.53,70.91 L979.63,69.28 L976.72,67.65 L973.81,66.02 L970.89,64.39 L967.97,62.76 L965.04,61.13 L962.11,59.50 L959.17,57.87 L956.23,56.24 L953.28,54.61 L950.33,52.98 L947.38,51.35 L944.42,49.72 L941.46,48.09 L938.50,46.46 L935.54,44.83 L932.57,43.20 L929.60,41.57 L926.62,39.94 L923.65,38.31 L920.68,36.68 L917.70,35.05 L914.72,33.42 L911.74,31.79 L908.76,30.16 L905.78,28.53 L902.80,26.90"/>
<path d="M902.80,613.70 L906.21,612.07 L909.61,610.44 L913.02,608.81 L916.42,607.18 L919.83,605.55 L923.23,603.92 L926.63,602.29 L930.03,600.66 L933.43,599.03 L936.82,597.40 L940.21,595.77 L943.60,594.14 L946.99,592.51 L950.37,590.88 L953.75,589.25 L957.12,587.62 L960.50,585.99 L963.86,584.36 L967.22,582.73 L970.58,581.10 L973.93,579.47 L977.28,577.84 L980.62,576.21 L983.96,574.58 L987.28,572.95 L990.61,571.32 L993.92,569.69 L997.23,568.06 L1000.53,566.43 L1003.83,564.80 L1007.11,563.17 L1010.39,561.54 L1013.66,559.91 L1016.92,558.28 L1020.18,556.65 L1023.42,555.02 L1026.66,553.39 L1029.88,551.76 L1033.10,550.13 L1036.30,548.50 L1039.50,546.87 L1042.68,545.24 L1045.86,543.61 L1049.02,541.98 L1052.18,540.35 L1055.32,538.72 L1058.45,537.09 L1061.56,535.46 L1064.67,533.83 L1067.76,532.20 L1070.84,530.57 L1073.91,528.94 L1076.97,527.31 L1080.01,525.68 L1083.04,524.05 L1086.05,522.42 L1089.05,520.79 L1092.04,519.16 L1095.01,517.53 L1097.97,515.90 L1100.91,514.27 L1103.84,512.64 L1106.75,511.01 L1109.65,509.38 L1112.53,507.75 L1115.39,506.12 L1118.24,504.49 L1121.07,502.86 L1123.89,501.23 L1126.69,499.60 L1129.47,497.97 L1132.23,496.34 L1134.98,494.71 L1137.71,493.08 L1140.42,491.45 L1143.11,489.82 L1145.79,488.19 L1148.45,486.56 L1151.08,484.93 L1153.70,483.30 L1156.30,481.67 L1158.88,480.04 L1161.44,478.41 L1163.99,476.78 L1166.51,475.15 L1169.01,473.52 L1171.49,471.89 L1173.95,470.26 L1176.39,468.63 L1178.81,467.00 L1181.21,465.37 L1183.58,463.74 L1185.94,462.11 L1188.27,460.48 L1190.59,458.85 L1192.88,457.22 L1195.14,455.59 L1197.39,453.96 L1199.61,452.33 L1201.81,450.70 L1203.99,449.07 L1206.15,447.44 L1208.28,445.81 L1210.39,444.18 L1212.47,442.55 L1214.54,440.92 L1216.57,439.29 L1218.59,437.66 L1220.58,436.03 L1222.54,434.40 L1224.49,432.77 L1226.40,431.14 L1228.30,429.51 L1230.16,427.88 L1232.01,426.25 L1233.82,424.62 L1235.62,422.99 L1237.38,421.36 L1239.12,419.73 L1240.84,418.10 L1242.53,416.47 L1244.20,414.84 L1245.83,413.21 L1247.45,411.58 L1249.03,409.95 L1250.59,408.32 L1252.13,406.69 L1253.63,405.06 L1255.11,403.43 L1256.56,401.80 L1257.99,400.17 L1259.39,398.54 L1260.76,396.91 L1262.11,395.28 L1263.42,393.65 L1264.71,392.02 L1265.98,390.39 L1267.21,388.76 L1268.42,387.13 L1269.60,385.50 L1270.75,383.87 L1271.87,382.24 L1272.96,380.61 L1274.03,378.98 L1275.07,377.35 L1276.08,375.72 L1277.06,374.09 L1278.02,372.46 L1278.94,370.83 L1279.84,369.20 L1280.70,367.57 L1281.54,365.94 L1282.35,364.31 L1283.13,362.68 L1283.88,361.05 L1284.61,359.42 L1285.30,357.79 L1285.96,356.16 L1286.60,354.53 L1287.21,352.90 L1287.78,351.27 L1288.33,349.64 L1288.85,348.01 L1289.34,346.38 L1289.80,344.75 L1290.23,343.12 L1290.63,341.49 L1291.00,339.86 L1291.34,338.23 L1291.65,336.60 L1291.93,334.97 L1292.19,333.34 L1292.41,331.71 L1292.60,330.08 L1292.76,328.45 L1292.90,326.82 L1293.00,325.19 L1293.08,323.56 L1293.12,321.93 L1293.14,320.30 L1293.12,318.67 L1293.08,317.04 L1293.00,315.41 L1292.90,313.78 L1292.76,312.15 L1292.60,310.52 L1292.41,308.89 L1292.19,307.26 L1291.93,305.63 L1291.65,304.00 L1291.34,302.37 L1291.00,300.74 L1290.63,299.11 L1290.23,297.48 L1289.80,295.85 L1289.34,294.22 L1288.85,292.59 L1288.33,290.96 L1287.78,289.33 L1287.21,287.70 L1286.60,286.07 L1285.96,284.44 L1285.30,282.81 L1284.61,281.18 L1283.88,279.55 L1283.13,277.92 L1282.35,276.29 L1281.54,274.66 L1280.70,273.03 L1279.84,271.40 L1278.94,269.77 L1278.02,268.14 L1277.06,266.51 L1276.08,264.88 L1275.07,263.25 L1274.03,261.62 L1272.96,259.99 L1271.87,258.36 L1270.75,256.73 L1269.60,255.10 L1268.42,253.47 L1267.21,251.84 L1265.98,250.21 L1264.71,248.58 L1263.42,246.95 L1262.11,245.32 L1260.76,243.69 L1259.39,242.06 L1257.99,240.43 L1256.56,238.80 L1255.11,237.17 L1253.63,235.54 L1252.13,233.91 L1250.59,232.28 L1249.03,230.65 L1247.45,229.02 L1245.83,227.39 L1244.20,225.76 L1242.53,224.13 L1240.84,222.50 L1239.12,220.87 L1237.38,219.24 L1235.62,217.61 L1233.82,215.98 L1232.01,214.35 L1230.16,212.72 L1228.30,211.09 L1226.40,209.46 L1224.49,207.83 L1222.54,206.20 L1220.58,204.57 L1218.59,202.94 L1216.57,201.31 L1214.54,199.68 L1212.47,198.05 L1210.39,196.42 L1208.28,194.79 L1206.15,193.16 L1203.99,191.53 L1201.81,189.90 L1199.61,188.27 L1197.39,186.64 L1195.14,185.01 L1192.88,183.38 L1190.59,181.75 L1188.27,180.12 L1185.94,178.49 L1183.58,176.86 L1181.21,175.23 L1178.81,173.60 L1176.39,171.97 L1173.95,170.34 L1171.49,168.71 L1169.01,167.08 L1166.51,165.45 L1163.99,163.82 L1161.44,162.19 L1158.88,160.56 L1156.30,158.93 L1153.70,157.30 L1151.08,155.67 L1148.45,154.04 L1145.79,152.41 L1143.11,150.78 L1140.42,149.15 L1137.71,147.52 L1134.98,145.89 L1132.23,144.26 L1129.47,142.63 L1126.69,141.00 L1123.89,139.37 L1121.07,137.74 L1118.24,136.11 L1115.39,134.48 L1112.53,132.85 L1109.65,131.22 L1106.75,129.59 L1103.84,127.96 L1100.91,126.33 L1097.97,124.70 L1095.01,123.07 L1092.04,121.44 L1089.05,119.81 L1086.05,118.18 L1083.04,116.55 L1080.01,114.92 L1076.97,113.29 L1073.91,111.66 L1070.84,110.03 L1067.76,108.40 L1064.67,106.77 L1061.56,105.14 L1058.45,103.51 L1055.32,101.88 L1052.18,100.25 L1049.02,98.62 L1045.86,96.99 L1042.68,95.36 L1039.50,93.73 L1036.30,92.10 L1033.10,90.47 L1029.88,88.84 L1026.66,87.21 L1023.42,85.58 L1020.18,83.95 L1016.92,82.32 L1013.66,80.69 L1010.39,79.06 L1007.11,77.43 L1003.83,75.80 L1000.53,74.17 L997.23,72.54 L993.92,70.91 L990.61,69.28 L987.28,67.65 L983.96,66.02 L980.62,64.39 L977.28,62.76 L973.93,61.13 L970.58,59.50 L967.22,57.87 L963.86,56.24 L960.50,54.61 L957.12,52.98 L953.75,51.35 L950.37,49.72 L946.99,48.09 L943.60,46.46 L940.21,44.83 L936.82,43.20 L933.43,41.57 L930.03,39.94 L926.63,38.31 L923.23,36.68 L919.83,35.05 L916.42,33.42 L913.02,31.79 L909.61,30.16 L906.21,28.53 L902.80,26.90"/>
<path d="M902.80,613.70 L906.63,612.07 L910.46,610.44 L914.30,608.81 L918.13,607.18 L921.95,605.55 L925.78,603.92 L929.61,602.29 L933.43,600.66 L937.25,599.03 L941.07,597.40 L944.89,595.77 L948.70,594.14 L952.51,592.51 L956.32,590.88 L960.12,589.25 L963.91,587.62 L967.71,585.99 L971.49,584.36 L975.28,582.73 L979.05,581.10 L982.82,579.47 L986.59,577.84 L990.35,576.21 L994.10,574.58 L997.84,572.95 L1001.58,571.32 L1005.31,569.69 L1009.03,568.06 L1012.75,566.43 L1016.45,564.80 L1020.15,563.17 L1023.84,561.54 L1027.52,559.91 L1031.19,558.28 L1034.85,556.65 L1038.50,555.02 L1042.14,553.39 L1045.77,551.76 L1049.38,550.13 L1052.99,548.50 L1056.59,546.87 L1060.17,545.24 L1063.74,543.61 L1067.30,541.98 L1070.85,540.35 L1074.38,538.72 L1077.90,537.09 L1081.41,535.46 L1084.90,533.83 L1088.38,532.20 L1091.85,530.57 L1095.30,528.94 L1098.74,527.31 L1102.16,525.68 L1105.57,524.05 L1108.96,522.42 L1112.33,520.79 L1115.69,519.16 L1119.04,517.53 L1122.36,515.90 L1125.67,514.27 L1128.97,512.64 L1132.24,511.01 L1135.50,509.38 L1138.74,507.75 L1141.97,506.12 L1145.17,504.49 L1148.36,502.86 L1151.52,501.23 L1154.67,499.60 L1157.80,497.97 L1160.91,496.34 L1164.00,494.71 L1167.07,493.08 L1170.12,491.45 L1173.15,489.82 L1176.16,488.19 L1179.15,486.56 L1182.12,484.93 L1185.07,483.30 L1187.99,481.67 L1190.89,480.04 L1193.78,478.41 L1196.63,476.78 L1199.47,475.15 L1202.28,473.52 L1205.08,471.89 L1207.84,470.26 L1210.59,468.63 L1213.31,467.00 L1216.01,465.37 L1218.68,463.74 L1221.33,462.11 L1223.96,460.48 L1226.56,458.85 L1229.14,457.22 L1231.69,455.59 L1234.21,453.96 L1236.72,452.33 L1239.19,450.70 L1241.64,449.07 L1244.07,447.44 L1246.47,445.81 L1248.84,444.18 L1251.18,442.55 L1253.50,440.92 L1255.80,439.29 L1258.06,437.66 L1260.30,436.03 L1262.51,434.40 L1264.70,432.77 L1266.85,431.14 L1268.98,429.51 L1271.08,427.88 L1273.16,426.25 L1275.20,424.62 L1277.22,422.99 L1279.21,421.36 L1281.17,419.73 L1283.10,418.10 L1285.00,416.47 L1286.87,414.84 L1288.71,413.21 L1290.53,411.58 L1292.31,409.95 L1294.07,408.32 L1295.79,406.69 L1297.49,405.06 L1299.15,403.43 L1300.79,401.80 L1302.39,400.17 L1303.96,398.54 L1305.51,396.91 L1307.02,395.28 L1308.50,393.65 L1309.95,392.02 L1311.37,390.39 L1312.76,388.76 L1314.12,387.13 L1315.45,385.50 L1316.74,383.87 L1318.00,382.24 L1319.24,380.61 L1320.44,378.98 L1321.60,377.35 L1322.74,375.72 L1323.84,374.09 L1324.92,372.46 L1325.96,370.83 L1326.97,369.20 L1327.94,367.57 L1328.88,365.94 L1329.79,364.31 L1330.67,362.68 L1331.52,361.05 L1332.33,359.42 L1333.11,357.79 L1333.86,356.16 L1334.57,354.53 L1335.26,352.90 L1335.91,351.27 L1336.52,349.64 L1337.10,348.01 L1337.65,346.38 L1338.17,344.75 L1338.65,343.12 L1339.11,341.49 L1339.52,339.86 L1339.91,338.23 L1340.26,336.60 L1340.57,334.97 L1340.86,333.34 L1341.11,331.71 L1341.33,330.08 L1341.51,328.45 L1341.66,326.82 L1341.78,325.19 L1341.86,323.56 L1341.91,321.93 L1341.93,320.30 L1341.91,318.67 L1341.86,317.04 L1341.78,315.41 L1341.66,313.78 L1341.51,312.15 L1341.33,310.52 L1341.11,308.89 L1340.86,307.26 L1340.57,305.63 L1340.26,304.00 L1339.91,302.37 L1339.52,300.74 L1339.11,299.11 L1338.65,297.48 L1338.17,295.85 L1337.65,294.22 L1337.10,292.59 L1336.52,290.96 L1335.91,289.33 L1335.26,287.70 L1334.57,286.07 L1333.86,284.44 L1333.11,282.81 L1332.33,281.18 L1331.52,279.55 L1330.67,277.92 L1329.79,276.29 L1328.88,274.66 L1327.94,273.03 L1326.97,271.40 L1325.96,269.77 L1324.92,268.14 L1323.84,266.51 L1322.74,264.88 L1321.60,263.25 L1320.44,261.62 L1319.24,259.99 L1318.00,258.36 L1316.74,256.73 L1315.45,255.10 L1314.12,253.47 L1312.76,251.84 L1311.37,250.21 L1309.95,248.58 L1308.50,246.95 L1307.02,245.32 L1305.51,243.69 L1303.96,242.06 L1302.39,240.43 L1300.79,238.80 L1299.15,237.17 L1297.49,235.54 L1295.79,233.91 L1294.07,232.28 L1292.31,230.65 L1290.53,229.02 L1288.71,227.39 L1286.87,225.76 L1285.00,224.13 L1283.10,222.50 L1281.17,220.87 L1279.21,219.24 L1277.22,217.61 L1275.20,215.98 L1273.16,214.35 L1271.08,212.72 L1268.98,211.09 L1266.85,209.46 L1264.70,207.83 L1262.51,206.20 L1260.30,204.57 L1258.06,202.94 L1255.80,201.31 L1253.50,199.68 L1251.18,198.05 L1248.84,196.42 L1246.47,194.79 L1244.07,193.16 L1241.64,191.53 L1239.19,189.90 L1236.72,188.27 L1234.21,186.64 L1231.69,185.01 L1229.14,183.38 L1226.56,181.75 L1223.96,180.12 L1221.33,178.49 L1218.68,176.86 L1216.01,175.23 L1213.31,173.60 L1210.59,171.97 L1207.84,170.34 L1205.08,168.71 L1202.28,167.08 L1199.47,165.45 L1196.63,163.82 L1193.78,162.19 L1190.89,160.56 L1187.99,158.93 L1185.07,157.30 L1182.12,155.67 L1179.15,154.04 L1176.16,152.41 L1173.15,150.78 L1170.12,149.15 L1167.07,147.52 L1164.00,145.89 L1160.91,144.26 L1157.80,142.63 L1154.67,141.00 L1151.52,139.37 L1148.36,137.74 L1145.17,136.11 L1141.97,134.48 L1138.74,132.85 L1135.50,131.22 L1132.24,129.59 L1128.97,127.96 L1125.67,126.33 L1122.36,124.70 L1119.04,123.07 L1115.69,121.44 L1112.33,119.81 L1108.96,118.18 L1105.57,116.55 L1102.16,114.92 L1098.74,113.29 L1095.30,111.66 L1091.85,110.03 L1088.38,108.40 L1084.90,106.77 L1081.41,105.14 L1077.90,103.51 L1074.38,101.88 L1070.85,100.25 L1067.30,98.62 L1063.74,96.99 L1060.17,95.36 L1056.59,93.73 L1052.99,92.10 L1049.38,90.47 L1045.77,88.84 L1042.14,87.21 L1038.50,85.58 L1034.85,83.95 L1031.19,82.32 L1027.52,80.69 L1023.84,79.06 L1020.15,77.43 L1016.45,75.80 L1012.75,74.17 L1009.03,72.54 L1005.31,70.91 L1001.58,69.28 L997.84,67.65 L994.10,66.02 L990.35,64.39 L986.59,62.76 L982.82,61.13 L979.05,59.50 L975.28,57.87 L971.49,56.24 L967.71,54.61 L963.91,52.98 L960.12,51.35 L956.32,49.72 L952.51,48.09 L948.70,46.46 L944.89,44.83 L941.07,43.20 L937.25,41.57 L933.43,39.94 L929.61,38.31 L925.78,36.68 L921.95,35.05 L918.13,33.42 L914.30,31.79 L910.46,30.16 L906.63,28.53 L902.80,26.90"/>
<path d="M902.80,613.70 L907.06,612.07 L911.32,610.44 L915.57,608.81 L919.83,607.18 L924.08,605.55 L928.34,603.92 L932.59,602.29 L936.84,600.66 L941.08,599.03 L945.33,597.40 L949.57,595.77 L953.80,594.14 L958.03,592.51 L962.26,590.88 L966.49,589.25 L970.71,587.62 L974.92,585.99 L979.13,584.36 L983.33,582.73 L987.53,581.10 L991.72,579.47 L995.90,577.84 L1000.08,576.21 L1004.24,574.58 L1008.41,572.95 L1012.56,571.32 L1016.70,569.69 L1020.84,568.06 L1024.97,566.43 L1029.08,564.80 L1033.19,563.17 L1037.29,561.54 L1041.38,559.91 L1045.45,558.28 L1049.52,556.65 L1053.58,555.02 L1057.62,553.39 L1061.65,551.76 L1065.67,550.13 L1069.68,548.50 L1073.67,546.87 L1077.65,545.24 L1081.62,543.61 L1085.58,541.98 L1089.52,540.35 L1093.45,538.72 L1097.36,537.09 L1101.25,535.46 L1105.14,533.83 L1109.00,532.20 L1112.85,530.57 L1116.69,528.94 L1120.51,527.31 L1124.31,525.68 L1128.10,524.05 L1131.86,522.42 L1135.62,520.79 L1139.35,519.16 L1143.06,517.53 L1146.76,515.90 L1150.44,514.27 L1154.10,512.64 L1157.74,511.01 L1161.36,509.38 L1164.96,507.75 L1168.54,506.12 L1172.10,504.49 L1175.64,502.86 L1179.16,501.23 L1182.66,499.60 L1186.14,497.97 L1189.59,496.34 L1193.03,494.71 L1196.44,493.08 L1199.83,491.45 L1203.19,489.82 L1206.54,488.19 L1209.86,486.56 L1213.16,484.93 L1216.43,483.30 L1219.68,481.67 L1222.90,480.04 L1226.11,478.41 L1229.28,476.78 L1232.43,475.15 L1235.56,473.52 L1238.66,471.89 L1241.74,470.26 L1244.79,468.63 L1247.81,467.00 L1250.81,465.37 L1253.78,463.74 L1256.72,462.11 L1259.64,460.48 L1262.53,458.85 L1265.40,457.22 L1268.23,455.59 L1271.04,453.96 L1273.82,452.33 L1276.57,450.70 L1279.29,449.07 L1281.99,447.44 L1284.65,445.81 L1287.29,444.18 L1289.89,442.55 L1292.47,440.92 L1295.02,439.29 L1297.54,437.66 L1300.02,436.03 L1302.48,434.40 L1304.91,432.77 L1307.30,431.14 L1309.67,429.51 L1312.00,427.88 L1314.31,426.25 L1316.58,424.62 L1318.82,422.99 L1321.03,421.36 L1323.21,419.73 L1325.35,418.10 L1327.46,416.47 L1329.54,414.84 L1331.59,413.21 L1333.61,411.58 L1335.59,409.95 L1337.54,408.32 L1339.46,406.69 L1341.34,405.06 L1343.19,403.43 L1345.01,401.80 L1346.79,400.17 L1348.54,398.54 L1350.25,396.91 L1351.93,395.28 L1353.58,393.65 L1355.19,392.02 L1356.77,390.39 L1358.31,388.76 L1359.82,387.13 L1361.29,385.50 L1362.73,383.87 L1364.14,382.24 L1365.51,380.61 L1366.84,378.98 L1368.14,377.35 L1369.40,375.72 L1370.63,374.09 L1371.82,372.46 L1372.97,370.83 L1374.09,369.20 L1375.18,367.57 L1376.23,365.94 L1377.24,364.31 L1378.21,362.68 L1379.15,361.05 L1380.06,359.42 L1380.92,357.79 L1381.76,356.16 L1382.55,354.53 L1383.31,352.90 L1384.03,351.27 L1384.71,349.64 L1385.36,348.01 L1385.97,346.38 L1386.55,344.75 L1387.08,343.12 L1387.58,341.49 L1388.05,339.86 L1388.47,338.23 L1388.86,336.60 L1389.22,334.97 L1389.53,333.34 L1389.81,331.71 L1390.05,330.08 L1390.26,328.45 L1390.42,326.82 L1390.55,325.19 L1390.65,323.56 L1390.70,321.93 L1390.72,320.30 L1390.70,318.67 L1390.65,317.04 L1390.55,315.41 L1390.42,313.78 L1390.26,312.15 L1390.05,310.52 L1389.81,308.89 L1389.53,307.26 L1389.22,305.63 L1388.86,304.00 L1388.47,302.37 L1388.05,300.74 L1387.58,299.11 L1387.08,297.48 L1386.55,295.85 L1385.97,294.22 L1385.36,292.59 L1384.71,290.96 L1384.03,289.33 L1383.31,287.70 L1382.55,286.07 L1381.76,284.44 L1380.92,282.81 L1380.06,281.18 L1379.15,279.55 L1378.21,277.92 L1377.24,276.29 L1376.23,274.66 L1375.18,273.03 L1374.09,271.40 L1372.97,269.77 L1371.82,268.14 L1370.63,266.51 L1369.40,264.88 L1368.14,263.25 L1366.84,261.62 L1365.51,259.99 L1364.14,258.36 L1362.73,256.73 L1361.29,255.10 L1359.82,253.47 L1358.31,251.84 L1356.77,250.21 L1355.19,248.58 L1353.58,246.95 L1351.93,245.32 L1350.25,243.69 L1348.54,242.06 L1346.79,240.43 L1345.01,238.80 L1343.19,237.17 L1341.34,235.54 L1339.46,233.91 L1337.54,232.28 L1335.59,230.65 L1333.61,229.02 L1331.59,227.39 L1329.54,225.76 L1327.46,224.13 L1325.35,222.50 L1323.21,220.87 L1321.03,219.24 L1318.82,217.61 L1316.58,215.98 L1314.31,214.35 L1312.00,212.72 L1309.67,211.09 L1307.30,209.46 L1304.91,207.83 L1302.48,206.20 L1300.02,204.57 L1297.54,202.94 L1295.02,201.31 L1292.47,199.68 L1289.89,198.05 L1287.29,196.42 L1284.65,194.79 L1281.99,193.16 L1279.29,191.53 L1276.57,189.90 L1273.82,188.27 L1271.04,186.64 L1268.23,185.01 L1265.40,183.38 L1262.53,181.75 L1259.64,180.12 L1256.72,178.49 L1253.78,176.86 L1250.81,175.23 L1247.81,173.60 L1244.79,171.97 L1241.74,170.34 L1238.66,168.71 L1235.56,167.08 L1232.43,165.45 L1229.28,163.82 L1226.11,162.19 L1222.90,160.56 L1219.68,158.93 L1216.43,157.30 L1213.16,155.67 L1209.86,154.04 L1206.54,152.41 L1203.19,150.78 L1199.83,149.15 L1196.44,147.52 L1193.03,145.89 L1189.59,144.26 L1186.14,142.63 L1182.66,141.00 L1179.16,139.37 L1175.64,137.74 L1172.10,136.11 L1168.54,134.48 L1164.96,132.85 L1161.36,131.22 L1157.74,129.59 L1154.10,127.96 L1150.44,126.33 L1146.76,124.70 L1143.06,123.07 L1139.35,121.44 L1135.62,119.81 L1131.86,118.18 L1128.10,116.55 L1124.31,114.92 L1120.51,113.29 L1116.69,111.66 L1112.85,110.03 L1109.00,108.40 L1105.14,106.77 L1101.25,105.14 L1097.36,103.51 L1093.45,101.88 L1089.52,100.25 L1085.58,98.62 L1081.62,96.99 L1077.65,95.36 L1073.67,93.73 L1069.68,92.10 L1065.67,90.47 L1061.65,88.84 L1057.62,87.21 L1053.58,85.58 L1049.52,83.95 L1045.45,82.32 L1041.38,80.69 L1037.29,79.06 L1033.19,77.43 L1029.08,75.80 L1024.97,74.17 L1020.84,72.54 L1016.70,70.91 L1012.56,69.28 L1008.41,67.65 L1004.24,66.02 L1000.08,64.39 L995.90,62.76 L991.72,61.13 L987.53,59.50 L983.33,57.87 L979.13,56.24 L974.92,54.61 L970.71,52.98 L966.49,51.35 L962.26,49.72 L958.03,48.09 L953.80,46.46 L949.57,44.83 L945.33,43.20 L941.08,41.57 L936.84,39.94 L932.59,38.31 L928.34,36.68 L924.08,35.05 L919.83,33.42 L915.57,31.79 L911.32,30.16 L907.06,28.53 L902.80,26.90"/>
<path d="M902.80,613.70 L907.48,612.07 L912.17,610.44 L916.85,608.81 L921.53,607.18 L926.21,605.55 L930.89,603.92 L935.57,602.29 L940.24,600.66 L944.91,599.03 L949.58,597.40 L954.24,595.77 L958.90,594.14 L963.56,592.51 L968.21,590.88 L972.85,589.25 L977.50,587.62 L982.13,585.99 L986.76,584.36 L991.38,582.73 L996.00,581.10 L1000.61,579.47 L1005.21,577.84 L1009.80,576.21 L1014.39,574.58 L1018.97,572.95 L1023.53,571.32 L1028.09,569.69 L1032.64,568.06 L1037.18,566.43 L1041.71,564.80 L1046.23,563.17 L1050.74,561.54 L1055.23,559.91 L1059.72,558.28 L1064.19,556.65 L1068.65,555.02 L1073.10,553.39 L1077.54,551.76 L1081.96,550.13 L1086.37,548.50 L1090.76,546.87 L1095.14,545.24 L1099.51,543.61 L1103.86,541.98 L1108.19,540.35 L1112.51,538.72 L1116.81,537.09 L1121.10,535.46 L1125.37,533.83 L1129.62,532.20 L1133.86,530.57 L1138.08,528.94 L1142.28,527.31 L1146.46,525.68 L1150.63,524.05 L1154.77,522.42 L1158.90,520.79 L1163.00,519.16 L1167.09,517.53 L1171.16,515.90 L1175.20,514.27 L1179.23,512.64 L1183.23,511.01 L1187.21,509.38 L1191.18,507.75 L1195.11,506.12 L1199.03,504.49 L1202.93,502.86 L1206.80,501.23 L1210.65,499.60 L1214.47,497.97 L1218.27,496.34 L1222.05,494.71 L1225.80,493.08 L1229.53,491.45 L1233.23,489.82 L1236.91,488.19 L1240.56,486.56 L1244.19,484.93 L1247.79,483.30 L1251.37,481.67 L1254.91,480.04 L1258.44,478.41 L1261.93,476.78 L1265.40,475.15 L1268.84,473.52 L1272.25,471.89 L1275.63,470.26 L1278.99,468.63 L1282.31,467.00 L1285.61,465.37 L1288.88,463.74 L1292.12,462.11 L1295.33,460.48 L1298.51,458.85 L1301.65,457.22 L1304.77,455.59 L1307.86,453.96 L1310.92,452.33 L1313.95,450.70 L1316.94,449.07 L1319.90,447.44 L1322.84,445.81 L1325.73,444.18 L1328.60,442.55 L1331.44,440.92 L1334.24,439.29 L1337.01,437.66 L1339.75,436.03 L1342.45,434.40 L1345.12,432.77 L1347.75,431.14 L1350.36,429.51 L1352.92,427.88 L1355.46,426.25 L1357.96,424.62 L1360.42,422.99 L1362.85,421.36 L1365.25,419.73 L1367.61,418.10 L1369.93,416.47 L1372.22,414.84 L1374.47,413.21 L1376.69,411.58 L1378.87,409.95 L1381.01,408.32 L1383.12,406.69 L1385.19,405.06 L1387.23,403.43 L1389.23,401.80 L1391.19,400.17 L1393.11,398.54 L1395.00,396.91 L1396.85,395.28 L1398.66,393.65 L1400.43,392.02 L1402.17,390.39 L1403.86,388.76 L1405.52,387.13 L1407.14,385.50 L1408.73,383.87 L1410.27,382.24 L1411.78,380.61 L1413.24,378.98 L1414.67,377.35 L1416.06,375.72 L1417.41,374.09 L1418.72,372.46 L1419.99,370.83 L1421.22,369.20 L1422.42,367.57 L1423.57,365.94 L1424.68,364.31 L1425.76,362.68 L1426.79,361.05 L1427.78,359.42 L1428.74,357.79 L1429.65,356.16 L1430.52,354.53 L1431.36,352.90 L1432.15,351.27 L1432.90,349.64 L1433.62,348.01 L1434.29,346.38 L1434.92,344.75 L1435.51,343.12 L1436.06,341.49 L1436.57,339.86 L1437.04,338.23 L1437.47,336.60 L1437.86,334.97 L1438.20,333.34 L1438.51,331.71 L1438.78,330.08 L1439.00,328.45 L1439.19,326.82 L1439.33,325.19 L1439.43,323.56 L1439.49,321.93 L1439.51,320.30 L1439.49,318.67 L1439.43,317.04 L1439.33,315.41 L1439.19,313.78 L1439.00,312.15 L1438.78,310.52 L1438.51,308.89 L1438.20,307.26 L1437.86,305.63 L1437.47,304.00 L1437.04,302.37 L1436.57,300.74 L1436.06,299.11 L1435.51,297.48 L1434.92,295.85 L1434.29,294.22 L1433.62,292.59 L1432.90,290.96 L1432.15,289.33 L1431.36,287.70 L1430.52,286.07 L1429.65,284.44 L1428.74,282.81 L1427.78,281.18 L1426.79,279.55 L1425.76,277.92 L1424.68,276.29 L1423.57,274.66 L1422.42,273.03 L1421.22,271.40 L1419.99,269.77 L1418.72,268.14 L1417.41,266.51 L1416.06,264.88 L1414.67,263.25 L1413.24,261.62 L1411.78,259.99 L1410.27,258.36 L1408.73,256.73 L1407.14,255.10 L1405.52,253.47 L1403.86,251.84 L1402.17,250.21 L1400.43,248.58 L1398.66,246.95 L1396.85,245.32 L1395.00,243.69 L1393.11,242.06 L1391.19,240.43 L1389.23,238.80 L1387.23,237.17 L1385.19,235.54 L1383.12,233.91 L1381.01,232.28 L1378.87,230.65 L1376.69,229.02 L1374.47,227.39 L1372.22,225.76 L1369.93,224.13 L1367.61,222.50 L1365.25,220.87 L1362.85,219.24 L1360.42,217.61 L1357.96,215.98 L1355.46,214.35 L1352.92,212.72 L1350.36,211.09 L1347.75,209.46 L1345.12,207.83 L1342.45,206.20 L1339.75,204.57 L1337.01,202.94 L1334.24,201.31 L1331.44,199.68 L1328.60,198.05 L1325.73,196.42 L1322.84,194.79 L1319.90,193.16 L1316.94,191.53 L1313.95,189.90 L1310.92,188.27 L1307.86,186.64 L1304.77,185.01 L1301.65,183.38 L1298.51,181.75 L1295.33,180.12 L1292.12,178.49 L1288.88,176.86 L1285.61,175.23 L1282.31,173.60 L1278.99,171.97 L1275.63,170.34 L1272.25,168.71 L1268.84,167.08 L1265.40,165.45 L1261.93,163.82 L1258.44,162.19 L1254.91,160.56 L1251.37,158.93 L1247.79,157.30 L1244.19,155.67 L1240.56,154.04 L1236.91,152.41 L1233.23,150.78 L1229.53,149.15 L1225.80,147.52 L1222.05,145.89 L1218.27,144.26 L1214.47,142.63 L1210.65,141.00 L1206.80,139.37 L1202.93,137.74 L1199.03,136.11 L1195.11,134.48 L1191.18,132.85 L1187.21,131.22 L1183.23,129.59 L1179.23,127.96 L1175.20,126.33 L1171.16,124.70 L1167.09,123.07 L1163.00,121.44 L1158.90,119.81 L1154.77,118.18 L1150.63,116.55 L1146.46,114.92 L1142.28,113.29 L1138.08,111.66 L1133.86,110.03 L1129.62,108.40 L1125.37,106.77 L1121.10,105.14 L1116.81,103.51 L1112.51,101.88 L1108.19,100.25 L1103.86,98.62 L1099.51,96.99 L1095.14,95.36 L1090.76,93.73 L1086.37,92.10 L1081.96,90.47 L1077.54,88.84 L1073.10,87.21 L1068.65,85.58 L1064.19,83.95 L1059.72,82.32 L1055.23,80.69 L1050.74,79.06 L1046.23,77.43 L1041.71,75.80 L1037.18,74.17 L1032.64,72.54 L1028.09,70.91 L1023.53,69.28 L1018.97,67.65 L1014.39,66.02 L1009.80,64.39 L1005.21,62.76 L1000.61,61.13 L996.00,59.50 L991.38,57.87 L986.76,56.24 L982.13,54.61 L977.50,52.98 L972.85,51.35 L968.21,49.72 L963.56,48.09 L958.90,46.46 L954.24,44.83 L949.58,43.20 L944.91,41.57 L940.24,39.94 L935.57,38.31 L930.89,36.68 L926.21,35.05 L921.53,33.42 L916.85,31.79 L912.17,30.16 L907.48,28.53 L902.80,26.90"/>
<path d="M902.80,613.70 L907.91,612.07 L913.02,610.44 L918.13,608.81 L923.23,607.18 L928.34,605.55 L933.44,603.92 L938.54,602.29 L943.64,600.66 L948.74,599.03 L953.83,597.40 L958.92,595.77 L964.00,594.14 L969.08,592.51 L974.15,590.88 L979.22,589.25 L984.29,587.62 L989.34,585.99 L994.39,584.36 L999.44,582.73 L1004.47,581.10 L1009.50,579.47 L1014.52,577.84 L1019.53,576.21 L1024.53,574.58 L1029.53,572.95 L1034.51,571.32 L1039.48,569.69 L1044.45,568.06 L1049.40,566.43 L1054.34,564.80 L1059.27,563.17 L1064.19,561.54 L1069.09,559.91 L1073.98,558.28 L1078.86,556.65 L1083.73,555.02 L1088.58,553.39 L1093.42,551.76 L1098.25,550.13 L1103.05,548.50 L1107.85,546.87 L1112.63,545.24 L1117.39,543.61 L1122.13,541.98 L1126.86,540.35 L1131.57,538.72 L1136.27,537.09 L1140.95,535.46 L1145.60,533.83 L1150.24,532.20 L1154.87,530.57 L1159.47,528.94 L1164.05,527.31 L1168.61,525.68 L1173.16,524.05 L1177.68,522.42 L1182.18,520.79 L1186.66,519.16 L1191.12,517.53 L1195.55,515.90 L1199.97,514.27 L1204.36,512.64 L1208.72,511.01 L1213.07,509.38 L1217.39,507.75 L1221.69,506.12 L1225.96,504.49 L1230.21,502.86 L1234.43,501.23 L1238.63,499.60 L1242.80,497.97 L1246.95,496.34 L1251.07,494.71 L1255.17,493.08 L1259.23,491.45 L1263.27,489.82 L1267.28,488.19 L1271.27,486.56 L1275.23,484.93 L1279.15,483.30 L1283.05,481.67 L1286.93,480.04 L1290.77,478.41 L1294.58,476.78 L1298.36,475.15 L1302.11,473.52 L1305.83,471.89 L1309.53,470.26 L1313.19,468.63 L1316.81,467.00 L1320.41,465.37 L1323.98,463.74 L1327.51,462.11 L1331.01,460.48 L1334.48,458.85 L1337.91,457.22 L1341.32,455.59 L1344.69,453.96 L1348.02,452.33 L1351.32,450.70 L1354.59,449.07 L1357.82,447.44 L1361.02,445.81 L1364.18,444.18 L1367.31,442.55 L1370.40,440.92 L1373.46,439.29 L1376.48,437.66 L1379.47,436.03 L1382.42,434.40 L1385.33,432.77 L1388.20,431.14 L1391.04,429.51 L1393.84,427.88 L1396.61,426.25 L1399.34,424.62 L1402.02,422.99 L1404.67,421.36 L1407.29,419.73 L1409.86,418.10 L1412.40,416.47 L1414.89,414.84 L1417.35,413.21 L1419.77,411.58 L1422.15,409.95 L1424.49,408.32 L1426.79,406.69 L1429.05,405.06 L1431.27,403.43 L1433.45,401.80 L1435.59,400.17 L1437.68,398.54 L1439.74,396.91 L1441.76,395.28 L1443.74,393.65 L1445.67,392.02 L1447.56,390.39 L1449.42,388.76 L1451.23,387.13 L1452.99,385.50 L1454.72,383.87 L1456.40,382.24 L1458.05,380.61 L1459.65,378.98 L1461.21,377.35 L1462.72,375.72 L1464.19,374.09 L1465.62,372.46 L1467.01,370.83 L1468.35,369.20 L1469.65,367.57 L1470.91,365.94 L1472.13,364.31 L1473.30,362.68 L1474.43,361.05 L1475.51,359.42 L1476.55,357.79 L1477.55,356.16 L1478.50,354.53 L1479.41,352.90 L1480.27,351.27 L1481.10,349.64 L1481.87,348.01 L1482.61,346.38 L1483.29,344.75 L1483.94,343.12 L1484.54,341.49 L1485.10,339.86 L1485.61,338.23 L1486.08,336.60 L1486.50,334.97 L1486.88,333.34 L1487.21,331.71 L1487.50,330.08 L1487.75,328.45 L1487.95,326.82 L1488.10,325.19 L1488.21,323.56 L1488.28,321.93 L1488.30,320.30 L1488.28,318.67 L1488.21,317.04 L1488.10,315.41 L1487.95,313.78 L1487.75,312.15 L1487.50,310.52 L1487.21,308.89 L1486.88,307.26 L1486.50,305.63 L1486.08,304.00 L1485.61,302.37 L1485.10,300.74 L1484.54,299.11 L1483.94,297.48 L1483.29,295.85 L1482.61,294.22 L1481.87,292.59 L1481.10,290.96 L1480.27,289.33 L1479.41,287.70 L1478.50,286.07 L1477.55,284.44 L1476.55,282.81 L1475.51,281.18 L1474.43,279.55 L1473.30,277.92 L1472.13,276.29 L1470.91,274.66 L1469.65,273.03 L1468.35,271.40 L1467.01,269.77 L1465.62,268.14 L1464.19,266.51 L1462.72,264.88 L1461.21,263.25 L1459.65,261.62 L1458.05,259.99 L1456.40,258.36 L1454.72,256.73 L1452.99,255.10 L1451.23,253.47 L1449.42,251.84 L1447.56,250.21 L1445.67,248.58 L1443.74,246.95 L1441.76,245.32 L1439.74,243.69 L1437.68,242.06 L1435.59,240.43 L1433.45,238.80 L1431.27,237.17 L1429.05,235.54 L1426.79,233.91 L1424.49,232.28 L1422.15,230.65 L1419.77,229.02 L1417.35,227.39 L1414.89,225.76 L1412.40,224.13 L1409.86,222.50 L1407.29,220.87 L1404.67,219.24 L1402.02,217.61 L1399.34,215.98 L1396.61,214.35 L1393.84,212.72 L1391.04,211.09 L1388.20,209.46 L1385.33,207.83 L1382.42,206.20 L1379.47,204.57 L1376.48,202.94 L1373.46,201.31 L1370.40,199.68 L1367.31,198.05 L1364.18,196.42 L1361.02,194.79 L1357.82,193.16 L1354.59,191.53 L1351.32,189.90 L1348.02,188.27 L1344.69,186.64 L1341.32,185.01 L1337.91,183.38 L1334.48,181.75 L1331.01,180.12 L1327.51,178.49 L1323.98,176.86 L1320.41,175.23 L1316.81,173.60 L1313.19,171.97 L1309.53,170.34 L1305.83,168.71 L1302.11,167.08 L1298.36,165.45 L1294.58,163.82 L1290.77,162.19 L1286.93,160.56 L1283.05,158.93 L1279.15,157.30 L1275.23,155.67 L1271.27,154.04 L1267.28,152.41 L1263.27,150.78 L1259.23,149.15 L1255.17,147.52 L1251.07,145.89 L1246.95,144.26 L1242.80,142.63 L1238.63,141.00 L1234.43,139.37 L1230.21,137.74 L1225.96,136.11 L1221.69,134.48 L1217.39,132.85 L1213.07,131.22 L1208.72,129.59 L1204.36,127.96 L1199.97,126.33 L1195.55,124.70 L1191.12,123.07 L1186.66,121.44 L1182.18,119.81 L1177.68,118.18 L1173.16,116.55 L1168.61,114.92 L1164.05,113.29 L1159.47,111.66 L1154.87,110.03 L1150.24,108.40 L1145.60,106.77 L1140.95,105.14 L1136.27,103.51 L1131.57,101.88 L1126.86,100.25 L1122.13,98.62 L1117.39,96.99 L1112.63,95.36 L1107.85,93.73 L1103.05,92.10 L1098.25,90.47 L1093.42,88.84 L1088.58,87.21 L1083.73,85.58 L1078.86,83.95 L1073.98,82.32 L1069.09,80.69 L1064.19,79.06 L1059.27,77.43 L1054.34,75.80 L1049.40,74.17 L1044.45,72.54 L1039.48,70.91 L1034.51,69.28 L1029.53,67.65 L1024.53,66.02 L1019.53,64.39 L1014.52,62.76 L1009.50,61.13 L1004.47,59.50 L999.44,57.87 L994.39,56.24 L989.34,54.61 L984.29,52.98 L979.22,51.35 L974.15,49.72 L969.08,48.09 L964.00,46.46 L958.92,44.83 L953.83,43.20 L948.74,41.57 L943.64,39.94 L938.54,38.31 L933.44,36.68 L928.34,35.05 L923.23,33.42 L918.13,31.79 L913.02,30.16 L907.91,28.53 L902.80,26.90"/>
<path d="M1054.34,565 L751.26,565" stroke-dashoffset="-0.85"/>
<path d="M1195.55,516 L610.05,516" stroke-dashoffset="-0.85"/>
<path d="M1316.81,467 L488.79,467" stroke-dashoffset="-0.85"/>
<path d="M1409.86,418 L395.74,418" stroke-dashoffset="-0.85"/>
<path d="M1468.35,369 L337.25,369" stroke-dashoffset="-0.85"/>
<path d="M1488.30,320 L317.30,320" stroke-dashoffset="-0.85"/>
<path d="M1468.35,271 L337.25,271" stroke-dashoffset="-0.85"/>
<path d="M1409.86,223 L395.74,223" stroke-dashoffset="-0.85"/>
<path d="M1316.81,174 L488.79,174" stroke-dashoffset="-0.85"/>
<path d="M1195.55,125 L610.05,125" stroke-dashoffset="-0.85"/>
<path d="M1054.34,76 L751.26,76" stroke-dashoffset="-0.85"/>
</g>
<g font-family="Liberation Sans" font-size="10.9" fill="#fff" fill-opacity="0.5" text-anchor="middle">
<text x="317.3" y="330">+180<tspan font-size="6.5" dx="3" dy="-4.5">°</tspan></text>
<text x="414.9" y="330">+150<tspan font-size="6.5" dx="3" dy="-4.5">°</tspan></text>
<text x="512.5" y="330">+120<tspan font-size="6.5" dx="3" dy="-4.5">°</tspan></text>
<text x="610.0" y="330">+90<tspan font-size="6.5" dx="3" dy="-4.5">°</tspan></text>
<text x="707.6" y="330">+60<tspan font-size="6.5" dx="3" dy="-4.5">°</tspan></text>
<text x="805.2" y="330">+30<tspan font-size="6.5" dx="3" dy="-4.5">°</tspan></text>
<text x="902.8" y="330">+0<tspan font-size="6.5" dx="3" dy="-4.5">°</tspan></text>
<text x="1000.4" y="330">+330<tspan font-size="6.5" dx="3" dy="-4.5">°</tspan></text>
<text x="1098.0" y="330">+300<tspan font-size="6.5" dx="3" dy="-4.5">°</tspan></text>
<text x="1195.6" y="330">+270<tspan font-size="6.5" dx="3" dy="-4.5">°</tspan></text>
<text x="1293.1" y="330">+240<tspan font-size="6.5" dx="3" dy="-4.5">°</tspan></text>
<text x="1390.7" y="330">+210<tspan font-size="6.5" dx="3" dy="-4.5">°</tspan></text>
<text x="1488.3" y="330">+180<tspan font-size="6.5" dx="3" dy="-4.5">°</tspan></text>
<text x="902.8" y="24.6">+90<tspan font-size="6.5" dx="3" dy="-4.5">°</tspan></text>
<text x="902.8" y="122.4">+60<tspan font-size="6.5" dx="3" dy="-4.5">°</tspan></text>
<text x="902.8" y="220.2">+30<tspan font-size="6.5" dx="3" dy="-4.5">°</tspan></text>
<text x="902.8" y="428.1">−30<tspan font-size="6.5" dx="3" dy="-4.5">°</tspan></text>
<text x="902.8" y="525.9">−60<tspan font-size="6.5" dx="3" dy="-4.5">°</tspan></text>
<text x="902.8" y="623.7">−90<tspan font-size="6.5" dx="3" dy="-4.5">°</tspan></text>
</g>
<path d="M619.21,142.50 L619.87,142.31 L620.53,142.13 L621.19,141.95 L621.85,141.77 L622.51,141.59 L623.17,141.41 L623.82,141.23 L624.48,141.05 L625.13,140.87 L625.78,140.69 L626.43,140.51 L627.08,140.34 L627.73,140.16 L628.38,139.98 L629.03,139.81 L629.68,139.63 L630.32,139.46 L630.97,139.29 L631.61,139.11 L632.25,138.94 L632.89,138.77 L633.53,138.60 L634.17,138.43 L634.81,138.26 L635.45,138.09 L636.08,137.92 L636.72,137.75 L637.35,137.58 L637.99,137.42 L638.62,137.25 L639.25,137.09 L639.88,136.92 L640.51,136.76 L641.13,136.59 L641.76,136.43 L642.38,136.27 L643.01,136.11 L643.63,135.95 L644.25,135.79 L644.87,135.63 L645.49,135.47 L646.11,135.31 L646.72,135.15 L647.34,134.99 L647.95,134.84 L648.56,134.68 L649.17,134.53 L649.78,134.37 L650.39,134.22 L651.00,134.07 L651.61,133.92 L652.21,133.76 L652.82,133.61 L653.42,133.46 L654.02,133.31 L654.62,133.17 L655.22,133.02 L655.81,132.87 L656.41,132.72 L657.00,132.58 L657.60,132.43 L658.19,132.29 L658.78,132.15 L659.37,132.00 L659.96,131.86 L660.54,131.72 L661.13,131.58 L661.71,131.44 L662.29,131.30 L662.87,131.16 L663.45,131.02 L664.03,130.89 L664.60,130.75 L665.18,130.62 L665.75,130.48 L666.32,130.35 L666.90,130.21 L667.46,130.08 L668.03,129.95 L668.60,129.82 L669.16,129.69 L669.73,129.56 L670.29,129.43 L670.85,129.31 L671.41,129.18 L671.96,129.05 L672.52,128.93 L673.07,128.80 L673.62,128.68 L674.18,128.56 L674.72,128.44 L675.27,128.31 L675.82,128.19 L676.36,128.07 L676.91,127.96 L677.45,127.84 L677.99,127.72 L678.53,127.61 L679.06,127.49 L679.60,127.38 L680.13,127.26 L680.66,127.15 L681.19,127.04 L681.72,126.93 L682.25,126.82 L682.77,126.71 L683.30,126.60 L683.82,126.49 L684.34,126.38 L684.86,126.28 L685.38,126.17 L685.89,126.07 L686.41,125.97 L686.92,125.86 L687.43,125.76 L687.94,125.66 L688.44,125.56 L688.95,125.46 L689.45,125.37 L689.95,125.27 L690.46,125.17 L690.95,125.08 L691.45,124.98 L691.95,124.89 L692.44,124.80 L692.93,124.71 L693.42,124.61 L693.91,124.53 L694.40,124.44 L694.88,124.35 L695.36,124.26 L695.84,124.18 L696.32,124.09 L696.80,124.01 L697.28,123.92 L697.75,123.84 L698.22,123.76 L698.69,123.68 L699.16,123.60 L699.63,123.52 L700.10,123.44 L700.56,123.37 L701.02,123.29 L701.48,123.22 L701.94,123.14 L702.40,123.07 L702.85,123.00 L703.30,122.93 L703.75,122.86 L704.20,122.79 L704.65,122.72 L705.10,122.65 L705.54,122.59 L705.98,122.52 L706.42,122.46 L706.86,122.40 L707.30,122.33 L707.73,122.27 L708.16,122.21 L708.59,122.15 L709.02,122.10 L709.45,122.04 L709.88,121.98 L710.30,121.93 L710.72,121.87 L711.14,121.82 L711.56,121.77 L711.98,121.72 L712.39,121.67 L712.80,121.62 L713.22,121.57 L713.62,121.52 L714.03,121.48 L714.44,121.43 L714.84,121.39 L715.24,121.34 L715.64,121.30 L716.04,121.26 L716.44,121.22 L716.83,121.18 L717.22,121.14 L717.61,121.11 L718.00,121.07 L718.39,121.04 L718.77,121.00 L719.16,120.97 L719.54,120.94 L719.92,120.91 L720.30,120.88 L720.67,120.85 L721.05,120.82 L721.42,120.79 L721.79,120.77 L722.16,120.74 L722.53,120.72 L722.89,120.70 L723.25,120.68 L723.62,120.66 L723.98,120.64 L724.33,120.62 L724.69,120.60 L725.04,120.59 L725.40,120.57 L725.75,120.56 L726.09,120.54 L726.44,120.53 L726.79,120.52 L727.13,120.51 L727.47,120.50 L727.81,120.49 L728.15,120.49 L728.49,120.48 L728.82,120.48 L729.15,120.47 L729.48,120.47 L729.81,120.47 L730.14,120.47 L730.47,120.47 L730.79,120.47 L731.11,120.47 L731.43,120.48 L731.75,120.48 L732.07,120.49 L732.38,120.49 L732.70,120.50 L733.01,120.51 L733.32,120.52 L733.63,120.53 L733.93,120.54 L734.24,120.56 L734.54,120.57 L734.84,120.59 L735.14,120.60 L735.44,120.62 L735.73,120.64 L736.03,120.66 L736.32,120.68 L736.61,120.70 L736.90,120.72 L737.19,120.74 L737.47,120.77 L737.76,120.80 L738.04,120.82 L738.32,120.85 L738.60,120.88 L738.88,120.91 L739.16,120.94 L739.43,120.97 L739.70,121.00 L739.97,121.04 L740.24,121.07 L740.51,121.11 L740.78,121.14 L741.04,121.18 L741.31,121.22 L741.57,121.26 L741.83,121.30 L742.09,121.34 L742.34,121.39 L742.60,121.43 L742.85,121.48 L743.10,121.52 L743.35,121.57 L743.60,121.62 L743.85,121.67 L744.10,121.72 L744.34,121.77 L744.58,121.82 L744.83,121.87 L745.07,121.93 L745.30,121.98 L745.54,122.04 L745.78,122.10 L746.01,122.15 L746.24,122.21 L746.47,122.27 L746.70,122.33 L746.93,122.40 L747.16,122.46 L747.38,122.52 L747.61,122.59 L747.83,122.65 L748.05,122.72 L748.27,122.79 L748.49,122.86 L748.71,122.93 L748.92,123.00 L749.13,123.07 L749.35,123.14 L749.56,123.22 L749.77,123.29 L749.98,123.37 L750.18,123.44 L750.39,123.52 L750.59,123.60 L750.80,123.68 L751.00,123.76 L751.20,123.84 L751.40,123.92 L751.60,124.01 L751.79,124.09 L751.99,124.18 L752.18,124.26 L752.38,124.35 L752.57,124.44 L752.76,124.53 L752.95,124.62 L753.13,124.71 L753.32,124.80 L753.51,124.89 L753.69,124.98 L753.87,125.08 L754.05,125.17 L754.23,125.27 L754.41,125.37 L754.59,125.46 L754.77,125.56 L754.94,125.66 L755.12,125.76 L755.29,125.86 L755.46,125.97 L755.64,126.07 L755.81,126.17 L755.97,126.28 L756.14,126.38 L756.31,126.49 L756.47,126.60 L756.64,126.71 L756.80,126.82 L756.96,126.93 L757.13,127.04 L757.29,127.15 L757.44,127.26 L757.60,127.38 L757.76,127.49 L757.92,127.61 L758.07,127.72 L758.22,127.84 L758.38,127.96 L758.53,128.07 L758.68,128.19 L758.83,128.31 L758.98,128.44 L759.13,128.56 L759.27,128.68 L759.42,128.80 L759.56,128.93 L759.71,129.05 L759.85,129.18 L759.99,129.31 L760.13,129.43 L760.28,129.56 L760.41,129.69 L760.55,129.82 L760.69,129.95 L760.83,130.08 L760.96,130.21 L761.10,130.35 L761.23,130.48 L761.36,130.62 L761.50,130.75 L761.63,130.89 L761.76,131.02 L761.89,131.16 L762.02,131.30 L762.15,131.44 L762.27,131.58 L762.40,131.72 L762.53,131.86 L762.65,132.00 L762.77,132.15 L762.90,132.29 L763.02,132.43 L763.14,132.58 L763.26,132.72 L763.38,132.87 L763.50,133.02 L763.62,133.17 L763.74,133.31 L763.86,133.46 L763.97,133.61 L764.09,133.76 L764.20,133.92 L764.32,134.07 L764.43,134.22 L764.54,134.37 L764.66,134.53 L764.77,134.68 L764.88,134.84 L764.99,135.00 L765.10,135.15 L765.21,135.31 L765.31,135.47 L765.42,135.63 L765.53,135.79 L765.64,135.95 L765.74,136.11 L765.85,136.27 L765.95,136.43 L766.05,136.59 L766.16,136.76 L766.26,136.92 L766.36,137.09 L766.46,137.25 L766.56,137.42 L766.66,137.58 L766.76,137.75 L766.86,137.92 L766.96,138.09 L767.06,138.26 L767.16,138.43 L767.25,138.60 L767.35,138.77 L767.45,138.94 L767.54,139.11 L767.64,139.29 L767.73,139.46 L767.82,139.63 L767.92,139.81 L768.01,139.98 L768.10,140.16 L768.19,140.34 L768.28,140.51 L768.38,140.69 L768.47,140.87 L768.56,141.05 L768.64,141.23 L768.73,141.41 L768.82,141.59 L768.91,141.77 L769.00,141.95 L769.08,142.13 L769.17,142.31 L769.26,142.50 L769.34,142.68 L769.43,142.87 L769.51,143.05 L769.60,143.24 L769.68,143.42 L769.77,143.61 L769.85,143.80 L769.93,143.98 L770.02,144.17 L770.10,144.36 L770.18,144.55 L770.26,144.74 L770.34,144.93 L770.42,145.12 L770.50,145.31 L770.58,145.50 L770.66,145.69 L770.74,145.89 L770.82,146.08 L770.90,146.27 L770.98,146.47 L771.06,146.66 L771.13,146.86 L771.21,147.05 L771.29,147.25 L771.36,147.45 L771.44,147.65 L771.52,147.84 L771.59,148.04 L771.67,148.24 L771.74,148.44 L771.82,148.64 L771.89,148.84 L771.97,149.04 L772.04,149.24 L772.11,149.44 L772.19,149.64 L772.26,149.85 L772.33,150.05 L772.41,150.25 L772.48,150.46 L772.55,150.66 L772.62,150.86 L772.70,151.07 L772.77,151.28 L772.84,151.48 L772.91,151.69 L772.98,151.89 L773.05,152.10 L773.12,152.31 L773.19,152.52 L773.26,152.73 L773.33,152.94 L773.40,153.15 L773.47,153.36 L773.54,153.57 L773.61,153.78 L773.68,153.99 L773.75,154.20 L773.81,154.41 L773.88,154.62 L773.95,154.84 L774.02,155.05 L774.09,155.26 L774.15,155.48 L774.22,155.69 L774.29,155.91 L774.36,156.12 L774.42,156.34 L774.49,156.55 L774.56,156.77 L774.62,156.99 L774.69,157.20 L774.76,157.42 L774.82,157.64 L774.89,157.86 L774.95,158.07 L775.02,158.29 L775.08,158.51 L775.15,158.73 L775.21,158.95 L775.28,159.17 L775.35,159.39 L775.41,159.62 L775.48,159.84 L775.54,160.06 L775.60,160.28 L775.67,160.50 L775.73,160.73 L775.80,160.95 L775.86,161.17 L775.93,161.40 L775.99,161.62 L776.05,161.85 L776.12,162.07 L776.18,162.30 L776.25,162.52 L776.31,162.75 L776.37,162.98 L776.44,163.20 L776.50,163.43 L776.56,163.66 L776.63,163.88 L776.69,164.11 L776.75,164.34 L776.82,164.57 L776.88,164.80 L776.94,165.03 L777.01,165.26 L777.07,165.49 L777.13,165.72 L777.20,165.95 L777.26,166.18 L777.32,166.41 L777.38,166.64 L777.45,166.87 L777.51,167.11 L777.57,167.34 L777.63,167.57 L777.70,167.80 L777.76,168.04 L777.82,168.27 L777.89,168.51 L777.95,168.74 L778.01,168.97 L778.07,169.21 L778.14,169.44 L778.20,169.68 L778.26,169.92 L778.32,170.15 L778.39,170.39 L778.45,170.62 L778.51,170.86 L778.57,171.10 L778.64,171.34 L778.70,171.57 L778.76,171.81 L778.83,172.05 L778.89,172.29 L778.95,172.53 L779.01,172.77 L779.08,173.01 L779.14,173.25 L779.20,173.49 L779.26,173.73 L779.33,173.97 L779.39,174.21 L779.45,174.45 L779.52,174.69 L779.58,174.93 L779.64,175.17 L779.71,175.41 L779.77,175.66 L779.83,175.90 L779.90,176.14 L779.96,176.38 L780.02,176.63 L780.09,176.87 L780.15,177.11 L780.21,177.36 L780.28,177.60 L780.34,177.85 L780.40,178.09 L780.47,178.34 L780.53,178.58" stroke="#45b75a" stroke-width="1.39" stroke-dasharray="1.39 2.29" fill="none"/>
<path d="M619.5,142.3 L519.9,172.9" stroke="#45b75a" stroke-width="1.6" fill="none"/>
<rect x="518.6999999999999" y="171.70000000000002" width="2.4" height="2.4" fill="#f07050"/>
<path d="M1096.51,109.97 L1095.73,109.57 L1094.95,109.18 L1094.17,108.78 L1093.39,108.38 L1092.61,107.98 L1091.83,107.59 L1091.05,107.19 L1090.26,106.79 L1089.48,106.40 L1088.70,106.00 L1087.91,105.60 L1087.13,105.21 L1086.34,104.81 L1085.56,104.41 L1084.77,104.02 L1083.98,103.62 L1083.20,103.22 L1082.41,102.83 L1081.62,102.43 L1080.83,102.04 L1080.04,101.64 L1079.25,101.25 L1078.46,100.85 L1077.67,100.46 L1076.87,100.06 L1076.08,99.67 L1075.29,99.27 L1074.49,98.88 L1073.70,98.48 L1072.91,98.09 L1072.11,97.69 L1071.32,97.30 L1070.52,96.91 L1069.72,96.51 L1068.93,96.12 L1068.13,95.72 L1067.33,95.33 L1066.54,94.94 L1065.74,94.55 L1064.94,94.15 L1064.14,93.76 L1063.34,93.37 L1062.54,92.97 L1061.74,92.58 L1060.94,92.19 L1060.14,91.80 L1059.34,91.41 L1058.54,91.02 L1057.74,90.62 L1056.94,90.23 L1056.14,89.84 L1055.34,89.45 L1054.53,89.06 L1053.73,88.67 L1052.93,88.28 L1052.13,87.89 L1051.33,87.50 L1050.52,87.11 L1049.72,86.72 L1048.92,86.33 L1048.11,85.94 L1047.31,85.56 L1046.51,85.17 L1045.71,84.78 L1044.90,84.39 L1044.10,84.00 L1043.30,83.62 L1042.49,83.23 L1041.69,82.84 L1040.89,82.46 L1040.09,82.07 L1039.28,81.69 L1038.48,81.30 L1037.68,80.92 L1036.88,80.53 L1036.08,80.15 L1035.28,79.76 L1034.47,79.38 L1033.67,78.99 L1032.87,78.61 L1032.07,78.23 L1031.27,77.85 L1030.47,77.46 L1029.67,77.08 L1028.88,76.70 L1028.08,76.32 L1027.28,75.94 L1026.48,75.56 L1025.69,75.18 L1024.89,74.80 L1024.10,74.42 L1023.30,74.04 L1022.51,73.67 L1021.71,73.29 L1020.92,72.91 L1020.13,72.54 L1019.34,72.16 L1018.55,71.79 L1017.76,71.41 L1016.97,71.04 L1016.19,70.66 L1015.40,70.29 L1014.61,69.92 L1013.83,69.55 L1013.05,69.18 L1012.27,68.81 L1011.49,68.44 L1010.71,68.07 L1009.93,67.70 L1009.16,67.33 L1008.38,66.96 L1007.61,66.60 L1006.84,66.23 L1006.07,65.87 L1005.30,65.51 L1004.54,65.14 L1003.78,64.78 L1003.01,64.42 L1002.26,64.06 L1001.50,63.70 L1000.74,63.34 L999.99,62.99 L999.24,62.63 L998.49,62.28 L997.75,61.92 L997.01,61.57 L996.27,61.22 L995.53,60.87 L994.80,60.52 L994.07,60.17 L993.35,59.83 L992.62,59.48 L991.90,59.14 L991.19,58.80 L990.48,58.46 L989.77,58.12 L989.07,57.78 L988.37,57.45 L987.67,57.11 L986.99,56.78 L986.30,56.45 L985.62,56.12 L984.95,55.80 L984.28,55.47 L983.62,55.15 L982.96,54.83 L982.31,54.52 L981.67,54.20 L981.03,53.89 L980.40,53.58 L979.78,53.27 L979.17,52.97 L978.56,52.67 L977.96,52.37 L977.37,52.07 L976.79,51.78 L976.22,51.49 L975.66,51.20 L975.11,50.92 L974.57,50.64 L974.04,50.37 L973.53,50.10 L973.02,49.83 L972.53,49.57 L972.05,49.31 L971.58,49.05 L971.13,48.80 M835.20,48.56 L836.28,48.32 L837.33,48.08 L838.37,47.85 L839.40,47.63 L840.40,47.41 L841.39,47.20 L842.37,46.99 L843.32,46.79 L844.25,46.60 L845.17,46.41 L846.06,46.23 L846.94,46.05 L847.79,45.89 L848.63,45.73 L849.44,45.58 L850.23,45.43 L851.00,45.29 L851.74,45.17 L852.46,45.05 L853.16,44.93 L853.84,44.83 L854.49,44.73 L855.12,44.65 L855.72,44.57 L856.31,44.50 L856.86,44.44 L857.39,44.39 L857.90,44.35 L858.39,44.32 L858.85,44.30 L859.28,44.29 L859.70,44.29 L860.08,44.29 L860.45,44.31 L860.79,44.34 L861.11,44.37 L861.41,44.42 L861.69,44.47 L861.94,44.53 L862.17,44.61 L862.39,44.69 L862.58,44.78 L862.75,44.88 L862.91,44.99 L863.04,45.10 L863.16,45.23 L863.26,45.36 L863.34,45.50 L863.41,45.65 L863.46,45.80 L863.50,45.97 L863.52,46.14 L863.52,46.31 L863.52,46.50 L863.49,46.69 L863.46,46.89 L863.42,47.09 L863.36,47.30 L863.29,47.52 L863.21,47.74 L863.12,47.96 L863.02,48.20 L862.91,48.43 L862.79,48.68 L862.67,48.92 L862.53,49.17 L862.39,49.43 L862.23,49.69 L862.07,49.96 L861.91,50.23 L861.74,50.50 L861.56,50.78 L861.37,51.06 L861.18,51.34 L860.98,51.63 L860.78,51.92 L860.57,52.21 L860.36,52.51 L860.14,52.81 L859.92,53.11 L859.69,53.42 L859.46,53.73 L859.23,54.04 L858.99,54.35 L858.75,54.67 L858.50,54.99 L858.25,55.31 L858.00,55.63 L857.74,55.95 L857.48,56.28 L857.22,56.61 L856.96,56.94 L856.69,57.27 L856.42,57.61 L856.15,57.94 L855.87,58.28 L855.60,58.62 L855.32,58.96 L855.04,59.30 L854.75,59.65 L854.47,59.99 L854.18,60.34 L853.89,60.69 L853.60,61.04 L853.31,61.39 L853.02,61.74 L852.72,62.09 L852.43,62.44 L852.13,62.80 L851.83,63.16 L851.53,63.51 L851.23,63.87 L850.93,64.23 L850.62,64.59 L850.32,64.95 L850.01,65.32 L849.71,65.68 L849.40,66.04 L849.09,66.41 L848.78,66.77 L848.47,67.14 L848.16,67.51 L847.85,67.87 L847.53,68.24 L847.22,68.61 L846.91,68.98 L846.59,69.35 L846.28,69.72 L845.96,70.10 L845.64,70.47 L845.33,70.84 L845.01,71.21 L844.69,71.59 L844.37,71.96 L844.05,72.34 L843.73,72.72 L843.41,73.09 L843.09,73.47 L842.77,73.85 L842.45,74.22 L842.13,74.60 L841.81,74.98 L841.49,75.36 L841.16,75.74 L840.84,76.12 L840.52,76.50 L840.20,76.88 L839.87,77.26 L839.55,77.65 L839.23,78.03 L838.90,78.41 L838.58,78.79 L838.25,79.18 L837.93,79.56 L837.60,79.94 L837.28,80.33 L836.96,80.71 L836.63,81.10 L836.31,81.48 L835.98,81.87 L835.65,82.26 L835.33,82.64 L835.00,83.03 L834.68,83.42 L834.35,83.80 L834.03,84.19 L833.70,84.58 L833.38,84.96 L833.05,85.35 L832.73,85.74 L832.40,86.13 L832.08,86.52 L831.75,86.91 L831.43,87.30 L831.10,87.69 L830.78,88.08 L830.45,88.47 L830.13,88.86 L829.80,89.25 L829.48,89.64 L829.15,90.03 L828.83,90.42 L828.50,90.81 L828.18,91.20 L827.85,91.59 L827.53,91.99 L827.21,92.38 L826.88,92.77 L826.56,93.16 L826.23,93.55 L825.91,93.95 L825.59,94.34 L825.27,94.73 L824.94,95.13 L824.62,95.52 L824.30,95.91 L823.97,96.31 L823.65,96.70 L823.33,97.09 L823.01,97.49 L822.69,97.88 L822.37,98.28 L822.04,98.67 L821.72,99.07 L821.40,99.46 L821.08,99.85 L820.76,100.25 L820.44,100.64 L820.12,101.04 L819.80,101.44 L819.48,101.83 L819.16,102.23 L818.84,102.62 L818.53,103.02 L818.21,103.41 L817.89,103.81 L817.57,104.21 L817.25,104.60 L816.94,105.00 L816.62,105.40 L816.30,105.79 L815.99,106.19 L815.67,106.59 L815.36,106.98 L815.04,107.38 L814.72,107.78 L814.41,108.17 L814.09,108.57 L813.78,108.97 L813.47,109.37 L813.15,109.76 L812.84,110.16 L812.53,110.56 L812.21,110.96 L811.90,111.35 L811.59,111.75 L811.28,112.15 L810.97,112.55 L810.66,112.95 L810.34,113.34 L810.03,113.74 L809.72,114.14 L809.41,114.54 L809.10,114.94 L808.80,115.34 L808.49,115.74 L808.18,116.13 L807.87,116.53 L807.56,116.93 L807.26,117.33 L806.95,117.73 L806.64,118.13 L806.34,118.53 L806.03,118.93 L805.73,119.33 L805.42,119.73 L805.12,120.13 L804.81,120.53 L804.51,120.93 L804.21,121.32 L803.90,121.72 L803.60,122.12 L803.30,122.52 L803.00,122.92 L802.69,123.32 L802.39,123.72 L802.09,124.12 L801.79,124.52 L801.49,124.92 L801.19,125.32 L800.90,125.72 L800.60,126.12 L800.30,126.53 L800.00,126.93 L799.70,127.33 L799.41,127.73 L799.11,128.13 L798.82,128.53 L798.52,128.93 L798.22,129.33 L797.93,129.73 L797.64,130.13 L797.34,130.53 L797.05,130.93 L796.76,131.33 L796.46,131.73 L796.17,132.14 L795.88,132.54 L795.59,132.94 L795.30,133.34 L795.01,133.74 L794.72,134.14 L794.43,134.54 L794.14,134.94 L793.85,135.34 L793.57,135.75 L793.28,136.15 L792.99,136.55 L792.71,136.95 L792.42,137.35 L792.13,137.75 L791.85,138.15 L791.56,138.56 L791.28,138.96 L791.00,139.36 L790.71,139.76 L790.43,140.16 L790.15,140.57 L789.87,140.97 L789.59,141.37 L789.31,141.77 L789.03,142.17 L788.75,142.57 L788.47,142.98 L788.19,143.38 L787.91,143.78 L787.63,144.18 L787.36,144.58 L787.08,144.99 L786.80,145.39 L786.53,145.79 L786.25,146.19 L785.98,146.60 L785.71,147.00 L785.43,147.40 L785.16,147.80 L784.89,148.21 L784.62,148.61 L784.34,149.01 L784.07,149.41 L783.80,149.82 L783.53,150.22 L783.26,150.62 L783.00,151.02 L782.73,151.43 L782.46,151.83 L782.19,152.23 L781.93,152.63 L781.66,153.04 L781.40,153.44 L781.13,153.84 L780.87,154.24 L780.60,154.65 L780.34,155.05 L780.08,155.45 L779.81,155.86 L779.55,156.26 L779.29,156.66 L779.03,157.06 L778.77,157.47 L778.51,157.87 L778.25,158.27 L778.00,158.68 L777.74,159.08 L777.48,159.48 L777.22,159.89 L776.97,160.29 L776.71,160.69 L776.46,161.09 L776.20,161.50 L775.95,161.90 L775.70,162.30 L775.44,162.71 L775.19,163.11 L774.94,163.51 L774.69,163.92 L774.44,164.32 L774.19,164.72 L773.94,165.13 L773.69,165.53 L773.45,165.93 L773.20,166.34 L772.95,166.74 L772.71,167.14 L772.46,167.55 L772.22,167.95 L771.97,168.35 L771.73,168.76 L771.48,169.16 L771.24,169.57 L771.00,169.97 L770.76,170.37 L770.52,170.78 L770.28,171.18 L770.04,171.58 L769.80,171.99 L769.56,172.39 L769.32,172.79 L769.09,173.20 L768.85,173.60 L768.61,174.01 L768.38,174.41 L768.14,174.81 L767.91,175.22 L767.68,175.62 L767.44,176.02 L767.21,176.43 L766.98,176.83 L766.75,177.24 L766.52,177.64 L766.29,178.04 L766.06,178.45 L765.83,178.85 L765.61,179.25 L765.38,179.66 L765.15,180.06 L764.93,180.47 L764.70,180.87 L764.48,181.27 L764.25,181.68 L764.03,182.08 L763.81,182.49 L763.59,182.89 L763.36,183.29 L763.14,183.70 L762.92,184.10 L762.70,184.51 L762.49,184.91 L762.27,185.31 L762.05,185.72 L761.83,186.12 L761.62,186.53 L761.40,186.93 L761.19,187.34 L760.97,187.74 L760.76,188.14 L760.55,188.55 L760.33,188.95 L760.12,189.36 L759.91,189.76 L759.70,190.16" stroke="#45b75a" stroke-width="1.39" stroke-dasharray="1.39 2.29" fill="none"/>
<path d="M1096.7,110 L1114.4,118.9" stroke="#45b75a" stroke-width="1.6" fill="none"/>
<rect x="1113.2" y="117.7" width="2.4" height="2.4" fill="#f07050"/>
<path d="M1172.93,193.60 L1172.22,193.07 L1171.52,192.53 L1170.81,192.00 L1170.10,191.46 L1169.39,190.92 L1168.67,190.39 L1167.95,189.85 L1167.23,189.32 L1166.51,188.78 L1165.79,188.25 L1165.06,187.71 L1164.33,187.18 L1163.60,186.64 L1162.87,186.11 L1162.14,185.57 L1161.40,185.04 L1160.66,184.50 L1159.92,183.97 L1159.18,183.43 L1158.44,182.90 L1157.69,182.36 L1156.94,181.83 L1156.19,181.30 L1155.44,180.76 L1154.68,180.23 L1153.93,179.69 L1153.17,179.16 L1152.41,178.62 L1151.64,178.09 L1150.88,177.55 L1150.11,177.02 L1149.34,176.48 L1148.57,175.95 L1147.80,175.42 L1147.02,174.88 L1146.25,174.35 L1145.47,173.81 L1144.69,173.28 L1143.91,172.74 L1143.12,172.21 L1142.33,171.68 L1141.55,171.14 L1140.76,170.61 L1139.96,170.07 L1139.17,169.54 L1138.38,169.01 L1137.58,168.47 L1136.78,167.94 L1135.98,167.41 L1135.17,166.87 L1134.37,166.34 L1133.56,165.81 L1132.75,165.27 L1131.94,164.74 L1131.13,164.21 L1130.32,163.67 L1129.50,163.14 L1128.68,162.61 L1127.86,162.07 L1127.04,161.54 L1126.22,161.01 L1125.40,160.47 L1124.57,159.94 L1123.74,159.41 L1122.91,158.87 L1122.08,158.34 L1121.25,157.81 L1120.41,157.28 L1119.58,156.74 L1118.74,156.21 L1117.90,155.68 L1117.06,155.15 L1116.21,154.61 L1115.37,154.08 L1114.52,153.55 L1113.67,153.02 L1112.82,152.48 L1111.97,151.95 L1111.12,151.42 L1110.26,150.89 L1109.41,150.36 L1108.55,149.83 L1107.69,149.29 L1106.83,148.76 L1105.97,148.23 L1105.10,147.70 L1104.24,147.17 L1103.37,146.64 L1102.50,146.10 L1101.63,145.57 L1100.76,145.04 L1099.89,144.51 L1099.01,143.98 L1098.14,143.45 L1097.26,142.92 L1096.38,142.39 L1095.50,141.86 L1094.62,141.33 L1093.74,140.80 L1092.85,140.27 L1091.97,139.74 L1091.08,139.21 L1090.19,138.68 L1089.30,138.15 L1088.41,137.62 L1087.52,137.09 L1086.62,136.56 L1085.73,136.03 L1084.83,135.50 L1083.93,134.97 L1083.03,134.44 L1082.13,133.91 L1081.23,133.38 L1080.33,132.85 L1079.42,132.32 L1078.52,131.79 L1077.61,131.27 L1076.70,130.74 L1075.79,130.21 L1074.88,129.68 L1073.97,129.15 L1073.06,128.62 L1072.14,128.10 L1071.23,127.57 L1070.31,127.04 L1069.39,126.51 L1068.47,125.99 L1067.55,125.46 L1066.63,124.93 L1065.71,124.41 L1064.79,123.88 L1063.86,123.35 L1062.94,122.83 L1062.01,122.30 L1061.08,121.77 L1060.16,121.25 L1059.23,120.72 L1058.30,120.20 L1057.37,119.67 L1056.43,119.14 L1055.50,118.62 L1054.57,118.09 L1053.63,117.57 L1052.69,117.04 L1051.76,116.52 L1050.82,116.00 L1049.88,115.47 L1048.94,114.95 L1048.00,114.42 L1047.06,113.90 L1046.12,113.38 L1045.18,112.85 L1044.23,112.33 L1043.29,111.81 L1042.34,111.29 L1041.40,110.76 L1040.45,110.24 L1039.50,109.72 L1038.55,109.20 L1037.60,108.68 L1036.66,108.16 L1035.71,107.63 L1034.75,107.11 L1033.80,106.59 L1032.85,106.07 L1031.90,105.55 L1030.95,105.03 L1029.99,104.51 L1029.04,104.00 L1028.08,103.48 L1027.13,102.96 L1026.17,102.44 L1025.21,101.92 L1024.26,101.41 L1023.30,100.89 L1022.34,100.37 L1021.39,99.86 L1020.43,99.34 L1019.47,98.82 L1018.51,98.31 L1017.55,97.79 L1016.59,97.28 L1015.63,96.76 L1014.67,96.25 L1013.71,95.74 L1012.75,95.22 L1011.79,94.71 L1010.83,94.20 L1009.87,93.69 L1008.90,93.17 L1007.94,92.66 L1006.98,92.15 L1006.02,91.64 L1005.06,91.13 L1004.10,90.63 L1003.14,90.12 L1002.17,89.61 L1001.21,89.10 L1000.25,88.59 L999.29,88.09 L998.33,87.58 L997.37,87.08 L996.41,86.57 L995.45,86.07 L994.49,85.57 L993.53,85.06 L992.57,84.56 L991.61,84.06 L990.65,83.56 L989.70,83.06 L988.74,82.56 L987.78,82.06 L986.83,81.57 L985.87,81.07 L984.91,80.57 L983.96,80.08 L983.01,79.58 L982.05,79.09 L981.10,78.60 L980.15,78.11 L979.20,77.62 L978.25,77.13 L977.30,76.64 L976.36,76.15 L975.41,75.67 L974.47,75.18 L973.52,74.70 L972.58,74.22 L971.64,73.74 L970.70,73.26 L969.76,72.78 L968.83,72.30 L967.89,71.82 L966.96,71.35 L966.03,70.88 L965.10,70.41 L964.17,69.94 L963.25,69.47 L962.32,69.00 L961.40,68.54 L960.48,68.08 L959.56,67.62 L958.65,67.16 L957.74,66.70 L956.83,66.25 L955.92,65.79 L955.02,65.34 L954.12,64.90 L953.22,64.45 L952.32,64.01 L951.43,63.57 L950.54,63.13 L949.65,62.70 L948.77,62.27 L947.89,61.84 L947.02,61.41 L946.15,60.99 L945.28,60.57 L944.42,60.15 L943.56,59.74 L942.71,59.33 L941.86,58.93 L941.01,58.53 L940.17,58.13 L939.34,57.74 L938.51,57.36 L937.68,56.97 L936.87,56.60 L936.05,56.23 L935.25,55.86 L934.44,55.50 L933.65,55.14 L932.86,54.79 L932.08,54.45 L931.30,54.11 L930.53,53.78 L929.77,53.46 L929.02,53.14 L928.27,52.83 L927.53,52.53 L926.80,52.24 L926.07,51.95 L925.35,51.67 L924.64,51.41 L923.94,51.15 L923.25,50.90 L922.57,50.66 L921.89,50.43 L921.22,50.21 L920.56,50.00 L919.91,49.80 L919.26,49.61 L918.63,49.44 L918.00,49.27 L917.38,49.12 L916.77,48.98 L916.17,48.85 L915.57,48.73 L914.98,48.63 L914.40,48.54 L913.82,48.47 L913.26,48.40 L912.70,48.35 L912.14,48.32 L911.59,48.30 L911.05,48.29 L910.51,48.29 L909.98,48.31 L909.45,48.34 L908.92,48.39 L908.40,48.45 L907.88,48.52 L907.37,48.60 L906.86,48.70 L906.35,48.81 L905.84,48.94 L905.34,49.07 L904.83,49.22 L904.33,49.38 L903.83,49.56 L903.33,49.74 L902.82,49.94 L902.32,50.14 L901.82,50.36 L901.32,50.59 L900.82,50.82 L900.31,51.07 L899.81,51.33 L899.30,51.59 L898.80,51.87 L898.29,52.15 L897.78,52.44 L897.27,52.74 L896.75,53.05 L896.24,53.36 L895.72,53.68 L895.21,54.01 L894.69,54.35 L894.16,54.69 L893.64,55.03 L893.12,55.39 L892.59,55.75 L892.06,56.11 L891.53,56.48 L890.99,56.86 L890.46,57.24 L889.92,57.63 L889.38,58.02 L888.84,58.41 L888.30,58.81 L887.76,59.21 L887.21,59.62 L886.66,60.03 L886.11,60.44 L885.56,60.86 L885.01,61.28 L884.46,61.71 L883.90,62.13 L883.34,62.57 L882.78,63.00 L882.22,63.44 L881.66,63.87 L881.10,64.32 L880.53,64.76 L879.97,65.21 L879.40,65.66 L878.83,66.11 L878.26,66.56 L877.69,67.02 L877.12,67.48 L876.55,67.94 L875.98,68.40 L875.40,68.86 L874.83,69.33 L874.25,69.79 L873.67,70.26 L873.09,70.73 L872.51,71.21 L871.93,71.68 L871.35,72.16 L870.77,72.63 L870.19,73.11 L869.60,73.59 L869.02,74.07 L868.44,74.55 L867.85,75.04 L867.26,75.52 L866.68,76.01 L866.09,76.49 L865.50,76.98 L864.92,77.47 L864.33,77.96 L863.74,78.45 L863.15,78.94 L862.56,79.43 L861.97,79.93 L861.38,80.42 L860.79,80.92 L860.20,81.41 L859.60,81.91 L859.01,82.41 L858.42,82.91 L857.83,83.41 L857.23,83.91 L856.64,84.41 L856.05,84.91 L855.45,85.41 L854.86,85.92 L854.27,86.42 L853.67,86.92 L853.08,87.43 L852.48,87.93 L851.89,88.44 L851.30,88.95 L850.70,89.45 L850.11,89.96 L849.51,90.47 L848.92,90.98 L848.32,91.49 L847.73,92.00 L847.13,92.51 L846.54,93.02 L845.94,93.53 L845.35,94.04 L844.76,94.55 L844.16,95.07 L843.57,95.58 L842.97,96.09 L842.38,96.61 L841.79,97.12 L841.19,97.64 L840.60,98.15 L840.00,98.67 L839.41,99.18 L838.82,99.70 L838.23,100.21 L837.63,100.73 L837.04,101.25 L836.45,101.77 L835.86,102.28 L835.27,102.80 L834.67,103.32 L834.08,103.84 L833.49,104.36 L832.90,104.88 L832.31,105.40 L831.72,105.92 L831.13,106.44 L830.54,106.96 L829.95,107.48 L829.37,108.00 L828.78,108.52 L828.19,109.04 L827.60,109.56 L827.02,110.08 L826.43,110.61 L825.84,111.13 L825.26,111.65 L824.67,112.17 L824.09,112.70 L823.50,113.22 L822.92,113.74 L822.33,114.27 L821.75,114.79 L821.17,115.31 L820.59,115.84 L820.00,116.36 L819.42,116.89 L818.84,117.41 L818.26,117.94 L817.68,118.46 L817.10,118.99 L816.52,119.51 L815.95,120.04 L815.37,120.56 L814.79,121.09 L814.22,121.61 L813.64,122.14 L813.06,122.67 L812.49,123.19 L811.91,123.72 L811.34,124.25 L810.77,124.77 L810.20,125.30 L809.62,125.83 L809.05,126.35 L808.48,126.88 L807.91,127.41 L807.34,127.94 L806.78,128.46 L806.21,128.99 L805.64,129.52 L805.07,130.05 L804.51,130.58 L803.94,131.11 L803.38,131.63 L802.81,132.16 L802.25,132.69 L801.69,133.22 L801.13,133.75 L800.57,134.28 L800.01,134.81 L799.45,135.34 L798.89,135.87 L798.33,136.40 L797.77,136.93 L797.22,137.46 L796.66,137.99 L796.11,138.52 L795.55,139.05 L795.00,139.58 L794.45,140.11 L793.89,140.64 L793.34,141.17 L792.79,141.70 L792.24,142.23 L791.70,142.76 L791.15,143.29 L790.60,143.82 L790.06,144.35 L789.51,144.88 L788.97,145.41 L788.42,145.94 L787.88,146.48 L787.34,147.01 L786.80,147.54 L786.26,148.07 L785.72,148.60 L785.18,149.13 L784.64,149.66 L784.11,150.20 L783.57,150.73 L783.04,151.26 L782.50,151.79 L781.97,152.32 L781.44,152.86 L780.91,153.39 L780.38,153.92 L779.85,154.45 L779.32,154.98 L778.79,155.52 L778.27,156.05 L777.74,156.58 L777.22,157.11 L776.69,157.65 L776.17,158.18 L775.65,158.71 L775.13,159.25 L774.61,159.78 L774.09,160.31 L773.58,160.84 L773.06,161.38 L772.54,161.91 L772.03,162.44 L771.52,162.98 L771.00,163.51 L770.49,164.04 L769.98,164.58 L769.47,165.11 L768.97,165.64 L768.46,166.18 L767.95,166.71 L767.45,167.24 L766.94,167.78 L766.44,168.31 L765.94,168.85 L765.44,169.38 L764.94,169.91 L764.44,170.45 L763.94,170.98 L763.45,171.51 L762.95,172.05 L762.46,172.58 L761.97,173.12 L761.47,173.65 L760.98,174.19 L760.49,174.72 L760.01,175.25 L759.52,175.79 L759.03,176.32 L758.55,176.86 L758.06,177.39 L757.58,177.93 L757.10,178.46 L756.62,178.99 L756.14,179.53 L755.66,180.06 L755.19,180.60 L754.71,181.13 L754.24,181.67 L753.76,182.20 L753.29,182.74 L752.82,183.27 L752.35,183.81 L751.88,184.34 L751.42,184.88 L750.95,185.41 L750.48,185.95 L750.02,186.48" stroke="#45b75a" stroke-width="1.39" stroke-dasharray="1.39 2.29" fill="none"/>
<path d="M1173.5,193.5 L1187.0,204" stroke="#45b75a" stroke-width="1.6" fill="none"/>
<rect x="1185.8" y="202.8" width="2.4" height="2.4" fill="#f07050"/>
<path d="M1155.01,183.34 L1153.97,182.53 L1152.93,181.71 L1151.89,180.89 L1150.84,180.07 L1149.79,179.25 L1148.73,178.44 L1147.67,177.62 L1146.60,176.80 L1145.53,175.98 L1144.45,175.17 L1143.37,174.35 L1142.29,173.53 L1141.20,172.71 L1140.10,171.89 L1139.00,171.08 L1137.90,170.26 L1136.79,169.44 L1135.68,168.62 L1134.56,167.80 L1133.44,166.99 L1132.31,166.17 L1131.18,165.35 L1130.04,164.53 L1128.90,163.72 L1127.76,162.90 L1126.61,162.08 L1125.46,161.26 L1124.30,160.44 L1123.14,159.63 L1121.98,158.81 L1120.81,157.99 L1119.64,157.17 L1118.46,156.36 L1117.28,155.54 L1116.09,154.72 L1114.90,153.90 L1113.71,153.09 L1112.51,152.27 L1111.31,151.45 L1110.10,150.63 L1108.89,149.81 L1107.68,149.00 L1106.46,148.18 L1105.24,147.36 L1104.01,146.54 L1102.79,145.73 L1101.55,144.91 L1100.32,144.09 L1099.08,143.27 L1097.83,142.46 L1096.58,141.64 L1095.33,140.82 L1094.08,140.01 L1092.82,139.19 L1091.55,138.37 L1090.29,137.55 L1089.02,136.74 L1087.75,135.92 L1086.47,135.10 L1085.19,134.28 L1083.91,133.47 L1082.62,132.65 L1081.33,131.83 L1080.03,131.01 L1078.74,130.20 L1077.44,129.38 L1076.13,128.56 L1074.82,127.75 L1073.51,126.93 L1072.20,126.11 L1070.88,125.30 L1069.56,124.48 L1068.24,123.66 L1066.91,122.84 L1065.58,122.03 L1064.25,121.21 L1062.92,120.39 L1061.58,119.58 L1060.24,118.76 L1058.89,117.94 L1057.55,117.13 L1056.19,116.31 L1054.84,115.49 L1053.49,114.68 L1052.13,113.86 L1050.77,113.04 L1049.40,112.23 L1048.03,111.41 L1046.66,110.59 L1045.29,109.78 L1043.92,108.96 L1042.54,108.15 L1041.16,107.33 L1039.78,106.51 L1038.39,105.70 L1037.00,104.88 L1035.61,104.07 L1034.22,103.25 L1032.82,102.43 L1031.43,101.62 L1030.03,100.80 L1028.62,99.99 L1027.22,99.17 L1025.81,98.36 L1024.40,97.54 L1022.99,96.72 L1021.58,95.91 L1020.16,95.09 L1018.74,94.28 L1017.33,93.46 L1015.90,92.65 L1014.48,91.83 L1013.05,91.02 L1011.63,90.20 L1010.20,89.39 L1008.77,88.58 L1007.33,87.76 L1005.90,86.95 L1004.46,86.13 L1003.02,85.32 L1001.58,84.50 L1000.14,83.69 L998.70,82.88 L997.25,82.06 L995.80,81.25 L994.36,80.44 L992.91,79.62 L991.46,78.81 L990.00,78.00 L988.55,77.19 L987.09,76.37 L985.64,75.56 L984.18,74.75 L982.72,73.94 L981.26,73.13 L979.80,72.32 L978.34,71.51 L976.88,70.70 L975.41,69.89 L973.95,69.08 L972.49,68.27 L971.02,67.46 L969.55,66.65 L968.09,65.84 L966.62,65.03 L965.15,64.23 L963.68,63.42 L962.21,62.61 L960.75,61.81 L959.28,61.00 L957.81,60.20 L956.34,59.39 L954.87,58.59 L953.40,57.79 L951.94,56.99 L950.47,56.19 L949.01,55.39 L947.54,54.59 L946.08,53.79 L944.61,53.00 L943.15,52.20 L941.69,51.41 L940.24,50.62 L938.78,49.83 L937.33,49.04 L935.88,48.26 L934.44,47.48 L933.00,46.70 L931.56,45.93 L930.13,45.15 L928.71,44.39 L927.29,43.63 L925.88,42.87 L924.48,42.12 L923.08,41.38 L921.71,40.64 L920.34,39.92 L918.99,39.21 L917.66,38.51 L916.35,37.83 L915.06,37.17 L913.80,36.53 L912.58,35.92 L911.39,35.35 L910.25,34.83 L909.16,34.35 L908.12,33.94 L907.14,33.60 L906.22,33.35 L905.34,33.20 L904.51,33.15 L903.71,33.21 L902.92,33.37 L902.13,33.63 L901.34,33.98 L900.53,34.40 L899.70,34.88 L898.85,35.41 L897.98,35.98 L897.10,36.59 L896.20,37.23 L895.28,37.90 L894.35,38.58 L893.40,39.28 L892.45,39.99 L891.49,40.72 L890.52,41.45 L889.54,42.19 L888.56,42.94 L887.57,43.70 L886.57,44.46 L885.58,45.23 L884.57,46.00 L883.57,46.78 L882.56,47.56 L881.55,48.34 L880.54,49.12 L879.53,49.91 L878.51,50.70 L877.49,51.49 L876.47,52.28 L875.45,53.08 L874.43,53.87 L873.41,54.67 L872.39,55.47 L871.36,56.27 L870.34,57.07 L869.31,57.87 L868.29,58.67 L867.26,59.47 L866.24,60.28 L865.21,61.08 L864.19,61.89 L863.16,62.69 L862.14,63.50 L861.11,64.31 L860.09,65.11 L859.06,65.92 L858.04,66.73 L857.01,67.54 L855.99,68.35 L854.97,69.16 L853.95,69.97 L852.92,70.78 L851.90,71.59 L850.88,72.40 L849.86,73.21 L848.84,74.02 L847.83,74.83 L846.81,75.64 L845.79,76.46 L844.77,77.27 L843.76,78.08 L842.74,78.89 L841.73,79.71 L840.72,80.52 L839.71,81.33 L838.70,82.15 L837.69,82.96 L836.68,83.77 L835.67,84.59 L834.67,85.40 L833.66,86.21 L832.66,87.03 L831.65,87.84 L830.65,88.66 L829.65,89.47 L828.65,90.29 L827.66,91.10 L826.66,91.92 L825.67,92.73 L824.67,93.55 L823.68,94.36 L822.69,95.18 L821.70,95.99 L820.71,96.81 L819.73,97.62 L818.74,98.44 L817.76,99.25 L816.78,100.07 L815.80,100.88 L814.82,101.70 L813.84,102.52 L812.86,103.33 L811.89,104.15 L810.92,104.96 L809.95,105.78 L808.98,106.60 L808.01,107.41 L807.05,108.23 L806.08,109.04 L805.12,109.86 L804.16,110.68 L803.20,111.49 L802.25,112.31 L801.29,113.13 L800.34,113.94 L799.39,114.76 L798.44,115.58 L797.50,116.39 L796.55,117.21 L795.61,118.03 L794.67,118.84 L793.73,119.66 L792.79,120.48 L791.86,121.29 L790.93,122.11 L790.00,122.93 L789.07,123.74 L788.14,124.56 L787.22,125.38 L786.30,126.19 L785.38,127.01 L784.46,127.83 L783.55,128.65 L782.63,129.46 L781.72,130.28 L780.81,131.10 L779.91,131.91 L779.01,132.73 L778.10,133.55 L777.21,134.37 L776.31,135.18 L775.42,136.00 L774.52,136.82 L773.63,137.63 L772.75,138.45 L771.86,139.27 L770.98,140.09 L770.10,140.90 L769.23,141.72 L768.35,142.54 L767.48,143.36 L766.61,144.17 L765.74,144.99 L764.88,145.81 L764.02,146.63 L763.16,147.44 L762.31,148.26 L761.45,149.08 L760.60,149.90 L759.75,150.71 L758.91,151.53 L758.07,152.35 L757.23,153.17 L756.39,153.98 L755.56,154.80 L754.73,155.62 L753.90,156.44 L753.07,157.26 L752.25,158.07 L751.43,158.89 L750.61,159.71 L749.80,160.53 L748.99,161.34 L748.18,162.16 L747.37,162.98 L746.57,163.80 L745.77,164.62 L744.98,165.43 L744.18,166.25 L743.39,167.07 L742.61,167.89 L741.82,168.70 L741.04,169.52 L740.26,170.34 L739.49,171.16 L738.72,171.98 L737.95,172.79 L737.18,173.61 L736.42,174.43 L735.66,175.25 L734.91,176.07 L734.15,176.88 L733.40,177.70 L732.66,178.52 L731.91,179.34 L731.17,180.15 L730.44,180.97 L729.71,181.79 L728.98,182.61 L728.25,183.43 L727.53,184.24 L726.81,185.06 L726.09,185.88 L725.38,186.70 L724.67,187.52 L723.96,188.33 L723.26,189.15 L722.56,189.97 L721.86,190.79 L721.17,191.61 L720.48,192.42 L719.80,193.24 L719.12,194.06 L718.44,194.88 L717.76,195.70 L717.09,196.51 L716.42,197.33 L715.76,198.15 L715.10,198.97 L714.44,199.79 L713.79,200.61 L713.14,201.42 L712.49,202.24 L711.85,203.06 L711.21,203.88 L710.58,204.70 L709.95,205.51 L709.32,206.33 L708.69,207.15 L708.07,207.97 L707.46,208.79 L706.84,209.60 L706.23,210.42 L705.63,211.24 L705.03,212.06 L704.43,212.88 L703.84,213.70 L703.25,214.51 L702.66,215.33 L702.08,216.15 L701.50,216.97 L700.92,217.79 L700.35,218.60 L699.79,219.42 L699.22,220.24 L698.66,221.06 L698.11,221.88 L697.56,222.70 L697.01,223.51 L696.47,224.33 L695.93,225.15 L695.39,225.97 L694.86,226.79 L694.33,227.60 L693.81,228.42 L693.29,229.24 L692.77,230.06 L692.26,230.88 L691.76,231.70 L691.25,232.51 L690.75,233.33 L690.26,234.15 L689.77,234.97 L689.28,235.79 L688.80,236.60 L688.32,237.42 L687.84,238.24 L687.37,239.06 L686.90,239.88 L686.44,240.70 L685.98,241.51 L685.53,242.33 L685.08,243.15 L684.63,243.97 L684.19,244.79 L683.76,245.61 L683.32,246.42 L682.89,247.24 L682.47,248.06 L682.05,248.88 L681.63,249.70 L681.22,250.52 L680.81,251.33 L680.41,252.15 L680.01,252.97 L679.61,253.79 L679.22,254.61 L678.84,255.42 L678.45,256.24 L678.08,257.06 L677.70,257.88 L677.33,258.70 L676.97,259.52 L676.61,260.33 L676.25,261.15 L675.90,261.97 L675.55,262.79 L675.21,263.61 L674.87,264.43 L674.54,265.24 L674.21,266.06 L673.88,266.88 L673.56,267.70 L673.24,268.52 L672.93,269.34 L672.62,270.15 L672.32,270.97 L672.02,271.79 L671.73,272.61 L671.44,273.43 L671.15,274.25 L670.87,275.06 L670.59,275.88 L670.32,276.70 L670.05,277.52 L669.79,278.34 L669.53,279.16 L669.27,279.97 L669.02,280.79 L668.78,281.61 L668.54,282.43 L668.30,283.25 L668.07,284.07 L667.84,284.88 L667.62,285.70 L667.40,286.52 L667.18,287.34 L666.97,288.16 L666.77,288.98 L666.57,289.79 L666.37,290.61 L666.18,291.43 L665.99,292.25 L665.81,293.07 L665.63,293.89 L665.46,294.70 L665.29,295.52 L665.13,296.34 L664.97,297.16 L664.81,297.98 L664.66,298.80 L664.52,299.61 L664.38,300.43 L664.24,301.25 L664.11,302.07 L663.98,302.89 L663.86,303.71 L663.74,304.52 L663.62,305.34 L663.52,306.16 L663.41,306.98 L663.31,307.80 L663.22,308.62 L663.12,309.43 L663.04,310.25 L662.96,311.07 L662.88,311.89 L662.81,312.71 L662.74,313.53 L662.68,314.34 L662.62,315.16 L662.56,315.98 L662.51,316.80 L662.47,317.62 L662.43,318.44 L662.39,319.25 L662.36,320.07 L662.34,320.89 L662.31,321.71 L662.30,322.53 L662.29,323.35 L662.28,324.16 L662.27,324.98 L662.28,325.80 L662.28,326.62 L662.29,327.44 L662.31,328.26 L662.33,329.07 L662.35,329.89 L662.38,330.71 L662.41,331.53 L662.45,332.35 L662.50,333.17 L662.54,333.98 L662.60,334.80 L662.65,335.62 L662.71,336.44 L662.78,337.26 L662.85,338.08 L662.93,338.89 L663.00,339.71 L663.09,340.53 L663.18,341.35 L663.27,342.17 L663.37,342.99 L663.47,343.80 L663.58,344.62 L663.69,345.44 L663.81,346.26 L663.93,347.08 L664.06,347.90 L664.19,348.71 L664.32,349.53 L664.46,350.35 L664.60,351.17 L664.75,351.99 L664.91,352.81 L665.06,353.62 L665.23,354.44 L665.39,355.26 L665.56,356.08 L665.74,356.90 L665.92,357.72 L666.11,358.53 L666.30,359.35 L666.49,360.17 L666.69,360.99" stroke="#fff" stroke-opacity="0.45" stroke-width="1.2" stroke-dasharray="1.39 2.29" fill="none"/>
<path d="M1156,183.3 L1170.2,195.6" stroke="#8c8c8c" stroke-width="1.5" fill="none"/>
<ellipse cx="760.75" cy="188.25" rx="33.4" ry="18.4" transform="rotate(-34.7 760.75 188.25)" stroke="#4fc06a" stroke-width="2.1" fill="none"/>
<path d="M747.2,186.6 H754.2 M750.7,183.1 V190.1" stroke="#ff0000" stroke-width="1.5"/>
<path d="M759.6,189.8 H766.6 M763.1,186.3 V193.3" stroke="#ff0000" stroke-width="1.5"/>
<path d="M777.7,178.2 H784.7 M781.2,174.7 V181.7" stroke="#ff0000" stroke-width="1.5"/>
<text x="761" y="192" font-family="Liberation Sans" font-size="10" fill="#fff" text-anchor="middle">SPE</text>
<g font-family="Liberation Mono" font-size="13.9" fill="#fff">
<text x="316.5" y="29.9" xml:space="preserve">UK002L</text>
<text x="316.5" y="42.9" xml:space="preserve">Beg: 20250917 19:33:55 (sol = 174.81°)</text>
<text x="316.5" y="56.7" xml:space="preserve">End: 20250918 01:52:17 (sol = 175.06°)</text>
<text x="316.5" y="69.0" xml:space="preserve">--------------------------------------</text>
<text x="316.5" y="82.3" xml:space="preserve">SPE: 3</text>
<text x="316.5" y="95.1" xml:space="preserve">...: 1</text>
</g>
<g stroke="#fff" stroke-opacity="0.4" stroke-width="2.08" stroke-dasharray="2.08 3.44">
<path d="M74.9,641.6 V842.4"/>
<path d="M218.8,641.6 V842.4"/>
<path d="M364.9,641.6 V842.4"/>
<path d="M506,641.6 V842.4"/>
<path d="M650.8,641.6 V842.4"/>
<path d="M797.2,641.6 V842.4"/>
<path d="M940.2,641.6 V842.4"/>
<path d="M1090.8,641.6 V842.4"/>
<path d="M1238.9,641.6 V842.4"/>
<path d="M1394,641.6 V842.4"/>
<path d="M1548.2,641.6 V842.4"/>
<path d="M1687.1,641.6 V842.4"/>
</g>
<g font-family="Liberation Sans" font-size="28" fill="#5c5c5c" stroke="#5c5c5c" stroke-width="0.45">
<text transform="translate(148.5,696.0) rotate(-90) scale(0.938,1.075)">APR</text>
<text transform="translate(295.0,701.6) rotate(-90) scale(0.966,1.075)">MAY</text>
<text transform="translate(435.2,690.0) rotate(-90) scale(0.887,1.075)">JUN</text>
<text transform="translate(575.7,685.8) rotate(-90) scale(0.906,1.075)">JUL</text>
<text transform="translate(723.8,698.0) rotate(-90) scale(0.925,1.075)">AUG</text>
<text transform="translate(871.2,694.2) rotate(-90) scale(0.894,1.075)">SEP</text>
<text transform="translate(1017.1,700.7) rotate(-90) scale(0.971,1.075)">OCT</text>
<text transform="translate(1169.3,703.9) rotate(-90) scale(0.954,1.075)">NOV</text>
<text transform="translate(1318.9,699.9) rotate(-90) scale(0.934,1.075)">DEC</text>
<text transform="translate(1469.2,689.0) rotate(-90) scale(0.894,1.075)">JAN</text>
<text transform="translate(1627.8,696.5) rotate(-90) scale(0.937,1.075)">FEB</text>
<text transform="translate(1765.5,705.8) rotate(-90) scale(0.985,1.075)">MAR</text>
</g>
<path d="M878,842.4 V641.6" stroke="#ff0000" stroke-width="1.9" stroke-dasharray="5.14 2.22"/>
<rect x="106.0" y="831.70" width="24.0" height="4.2" fill="#bddf26"/>
<rect x="165.0" y="831.70" width="180.0" height="4.2" fill="#bddf26"/>
<rect x="366.0" y="831.70" width="259.0" height="4.2" fill="#bddf26"/>
<rect x="636.0" y="831.70" width="151.0" height="4.2" fill="#bddf26"/>
<rect x="807.0" y="831.70" width="93.0" height="4.2" fill="#bddf26"/>
<rect x="920.0" y="831.70" width="53.0" height="4.2" fill="#bddf26"/>
<rect x="984.0" y="831.70" width="82.0" height="4.2" fill="#bddf26"/>
<rect x="1082.0" y="831.70" width="122.0" height="4.2" fill="#bddf26"/>
<rect x="1244.0" y="831.70" width="82.0" height="4.2" fill="#bddf26"/>
<rect x="1337.0" y="831.70" width="19.0" height="4.2" fill="#bddf26"/>
<rect x="1381.0" y="831.70" width="63.0" height="4.2" fill="#bddf26"/>
<rect x="1459.0" y="831.70" width="53.0" height="4.2" fill="#bddf26"/>
<rect x="1523.0" y="831.70" width="24.0" height="4.2" fill="#bddf26"/>
<rect x="1724.0" y="831.70" width="24.0" height="4.2" fill="#bddf26"/>
<rect x="1758.0" y="831.70" width="24.0" height="4.2" fill="#bddf26"/>
<rect x="165.0" y="815.80" width="24.0" height="4.2" fill="#81d34d"/>
<rect x="224.0" y="815.80" width="63.0" height="4.2" fill="#81d34d"/>
<rect x="312.0" y="815.80" width="29.0" height="4.2" fill="#81d34d"/>
<rect x="366.0" y="815.80" width="127.0" height="4.2" fill="#81d34d"/>
<rect x="508.0" y="815.80" width="146.0" height="4.2" fill="#81d34d"/>
<rect x="704.0" y="815.80" width="34.0" height="4.2" fill="#81d34d"/>
<rect x="773.0" y="815.80" width="73.0" height="4.2" fill="#81d34d"/>
<rect x="871.0" y="815.80" width="117.0" height="4.2" fill="#81d34d"/>
<rect x="1003.0" y="815.80" width="14.0" height="4.2" fill="#81d34d"/>
<rect x="1062.0" y="815.80" width="151.0" height="4.2" fill="#81d34d"/>
<rect x="1244.0" y="815.80" width="23.0" height="4.2" fill="#81d34d"/>
<rect x="1293.0" y="815.80" width="23.0" height="4.2" fill="#81d34d"/>
<rect x="1342.0" y="815.80" width="23.0" height="4.2" fill="#81d34d"/>
<rect x="1386.0" y="815.80" width="43.0" height="4.2" fill="#81d34d"/>
<rect x="1459.0" y="815.80" width="24.0" height="4.2" fill="#81d34d"/>
<rect x="1548.0" y="815.80" width="23.0" height="4.2" fill="#81d34d"/>
<rect x="165.0" y="799.90" width="24.0" height="4.2" fill="#4ec36b"/>
<rect x="258.0" y="799.90" width="230.0" height="4.2" fill="#4ec36b"/>
<rect x="508.0" y="799.90" width="107.0" height="4.2" fill="#4ec36b"/>
<rect x="626.0" y="799.90" width="92.0" height="4.2" fill="#4ec36b"/>
<rect x="729.0" y="799.90" width="97.0" height="4.2" fill="#4ec36b"/>
<rect x="949.0" y="799.90" width="201.0" height="4.2" fill="#4ec36b"/>
<rect x="1160.0" y="799.90" width="88.0" height="4.2" fill="#4ec36b"/>
<rect x="1258.0" y="799.90" width="186.0" height="4.2" fill="#4ec36b"/>
<rect x="1459.0" y="799.90" width="24.0" height="4.2" fill="#4ec36b"/>
<rect x="1553.0" y="799.90" width="23.0" height="4.2" fill="#4ec36b"/>
<rect x="194.0" y="782.90" width="24.0" height="4.2" fill="#2ab07f"/>
<rect x="322.0" y="782.90" width="185.0" height="4.2" fill="#2ab07f"/>
<rect x="518.0" y="782.90" width="24.0" height="4.2" fill="#2ab07f"/>
<rect x="557.0" y="782.90" width="127.0" height="4.2" fill="#2ab07f"/>
<rect x="807.0" y="782.90" width="24.0" height="4.2" fill="#2ab07f"/>
<rect x="954.0" y="782.90" width="19.0" height="4.2" fill="#2ab07f"/>
<rect x="989.0" y="782.90" width="136.0" height="4.2" fill="#2ab07f"/>
<rect x="1155.0" y="782.90" width="63.0" height="4.2" fill="#2ab07f"/>
<rect x="1244.0" y="782.90" width="23.0" height="4.2" fill="#2ab07f"/>
<rect x="1317.0" y="782.90" width="24.0" height="4.2" fill="#2ab07f"/>
<rect x="1396.0" y="782.90" width="23.0" height="4.2" fill="#2ab07f"/>
<rect x="1464.0" y="782.90" width="186.0" height="4.2" fill="#2ab07f"/>
<rect x="341.0" y="766.80" width="29.0" height="4.2" fill="#1e9b8a"/>
<rect x="410.0" y="766.80" width="38.0" height="4.2" fill="#1e9b8a"/>
<rect x="469.0" y="766.80" width="24.0" height="4.2" fill="#1e9b8a"/>
<rect x="528.0" y="766.80" width="18.0" height="4.2" fill="#1e9b8a"/>
<rect x="562.0" y="766.80" width="29.0" height="4.2" fill="#1e9b8a"/>
<rect x="616.0" y="766.80" width="33.0" height="4.2" fill="#1e9b8a"/>
<rect x="959.0" y="766.80" width="29.0" height="4.2" fill="#1e9b8a"/>
<rect x="1062.0" y="766.80" width="24.0" height="4.2" fill="#1e9b8a"/>
<rect x="1101.0" y="766.80" width="24.0" height="4.2" fill="#1e9b8a"/>
<rect x="1160.0" y="766.80" width="34.0" height="4.2" fill="#1e9b8a"/>
<rect x="1249.0" y="766.80" width="23.0" height="4.2" fill="#1e9b8a"/>
<rect x="1425.0" y="766.80" width="87.0" height="4.2" fill="#1e9b8a"/>
<rect x="420.0" y="750.00" width="24.0" height="4.2" fill="#25858e"/>
<rect x="533.0" y="750.00" width="23.0" height="4.2" fill="#25858e"/>
<rect x="567.0" y="750.00" width="24.0" height="4.2" fill="#25858e"/>
<rect x="621.0" y="750.00" width="122.0" height="4.2" fill="#25858e"/>
<rect x="969.0" y="750.00" width="166.0" height="4.2" fill="#25858e"/>
<rect x="1185.0" y="750.00" width="161.0" height="4.2" fill="#25858e"/>
<rect x="1469.0" y="750.00" width="24.0" height="4.2" fill="#25858e"/>
<rect x="430.0" y="733.90" width="23.0" height="4.2" fill="#2d708e"/>
<rect x="577.0" y="733.90" width="156.0" height="4.2" fill="#2d708e"/>
<rect x="994.0" y="733.90" width="111.0" height="4.2" fill="#2d708e"/>
<rect x="1116.0" y="733.90" width="107.0" height="4.2" fill="#2d708e"/>
<rect x="1263.0" y="733.90" width="29.0" height="4.2" fill="#2d708e"/>
<rect x="1489.0" y="733.90" width="23.0" height="4.2" fill="#2d708e"/>
<rect x="592.0" y="717.90" width="23.0" height="4.2" fill="#375a8c"/>
<rect x="655.0" y="717.90" width="117.0" height="4.2" fill="#375a8c"/>
<rect x="1072.0" y="717.90" width="171.0" height="4.2" fill="#375a8c"/>
<rect x="1263.0" y="717.90" width="24.0" height="4.2" fill="#375a8c"/>
<rect x="596.0" y="700.90" width="137.0" height="4.2" fill="#424086"/>
<rect x="1092.0" y="700.90" width="28.0" height="4.2" fill="#424086"/>
<rect x="1200.0" y="700.90" width="23.0" height="4.2" fill="#424086"/>
<rect x="1273.0" y="700.90" width="53.0" height="4.2" fill="#424086"/>
<rect x="1111.0" y="684.90" width="24.0" height="4.2" fill="#482475"/>
<g stroke="#fff" stroke-width="2">
<path d="M114.0,833.80 H122.0 M118.0,829.80 V837.80"/>
<path d="M240.7,833.80 H248.7 M244.7,829.80 V837.80"/>
<path d="M510.79999999999995,833.80 H518.8 M514.8,829.80 V837.80"/>
<path d="M706.6,833.80 H714.6 M710.6,829.80 V837.80"/>
<path d="M833.7,833.80 H841.7 M837.7,829.80 V837.80"/>
<path d="M962.0,833.80 H970.0 M966.0,829.80 V837.80"/>
<path d="M986.6,833.80 H994.6 M990.6,829.80 V837.80"/>
<path d="M1117.0,833.80 H1125.0 M1121.0,829.80 V837.80"/>
<path d="M1295.9,833.80 H1303.9 M1299.9,829.80 V837.80"/>
<path d="M1341.5,833.80 H1349.5 M1345.5,829.80 V837.80"/>
<path d="M1412.8,833.80 H1420.8 M1416.8,829.80 V837.80"/>
<path d="M1482.0,833.80 H1490.0 M1486.0,829.80 V837.80"/>
<path d="M1530.5,833.80 H1538.5 M1534.5,829.80 V837.80"/>
<path d="M1732.0,833.80 H1740.0 M1736.0,829.80 V837.80"/>
<path d="M1765.7,833.80 H1773.7 M1769.7,829.80 V837.80"/>
<path d="M172.8,817.90 H180.8 M176.8,813.90 V821.90"/>
<path d="M255.60000000000002,817.90 H263.6 M259.6,813.90 V821.90"/>
<path d="M323.8,817.90 H331.8 M327.8,813.90 V821.90"/>
<path d="M437.7,817.90 H445.7 M441.7,813.90 V821.90"/>
<path d="M598.8,817.90 H606.8 M602.8,813.90 V821.90"/>
<path d="M717.0,817.90 H725.0 M721.0,813.90 V821.90"/>
<path d="M793.9,817.90 H801.9 M797.9,813.90 V821.90"/>
<path d="M939.7,817.90 H947.7 M943.7,813.90 V821.90"/>
<path d="M1005.7,817.90 H1013.7 M1009.7,813.90 V821.90"/>
<path d="M1152.9,817.90 H1160.9 M1156.9,813.90 V821.90"/>
<path d="M1250.8,817.90 H1258.8 M1254.8,813.90 V821.90"/>
<path d="M1299.8,817.90 H1307.8 M1303.8,813.90 V821.90"/>
<path d="M1350.0,817.90 H1358.0 M1354.0,813.90 V821.90"/>
<path d="M1403.0,817.90 H1411.0 M1407.0,813.90 V821.90"/>
<path d="M1466.8,817.90 H1474.8 M1470.8,813.90 V821.90"/>
<path d="M1554.7,817.90 H1562.7 M1558.7,813.90 V821.90"/>
<path d="M175.0,802.00 H183.0 M179.0,798.00 V806.00"/>
<path d="M379.0,802.00 H387.0 M383.0,798.00 V806.00"/>
<path d="M544.7,802.00 H552.7 M548.7,798.00 V806.00"/>
<path d="M682.7,802.00 H690.7 M686.7,798.00 V806.00"/>
<path d="M741.5,802.00 H749.5 M745.5,798.00 V806.00"/>
<path d="M1075.0,802.00 H1083.0 M1079.0,798.00 V806.00"/>
<path d="M1216.7,802.00 H1224.7 M1220.7,798.00 V806.00"/>
<path d="M1305.0,802.00 H1313.0 M1309.0,798.00 V806.00"/>
<path d="M1466.8,802.00 H1474.8 M1470.8,798.00 V806.00"/>
<path d="M1559.7,802.00 H1567.7 M1563.7,798.00 V806.00"/>
<path d="M201.5,785.00 H209.5 M205.5,781.00 V789.00"/>
<path d="M400.6,785.00 H408.6 M404.6,781.00 V789.00"/>
<path d="M526.0,785.00 H534.0 M530.0,781.00 V789.00"/>
<path d="M638.8,785.00 H646.8 M642.8,781.00 V789.00"/>
<path d="M814.4,785.00 H822.4 M818.4,781.00 V789.00"/>
<path d="M959.8,785.00 H967.8 M963.8,781.00 V789.00"/>
<path d="M1040.8,785.00 H1048.8 M1044.8,781.00 V789.00"/>
<path d="M1187.8,785.00 H1195.8 M1191.8,781.00 V789.00"/>
<path d="M1250.8,785.00 H1258.8 M1254.8,781.00 V789.00"/>
<path d="M1324.8,785.00 H1332.8 M1328.8,781.00 V789.00"/>
<path d="M1403.0,785.00 H1411.0 M1407.0,781.00 V789.00"/>
<path d="M1545.3,785.00 H1553.3 M1549.3,781.00 V789.00"/>
<path d="M356.0,768.90 H364.0 M360.0,764.90 V772.90"/>
<path d="M426.7,768.90 H434.7 M430.7,764.90 V772.90"/>
<path d="M476.8,768.90 H484.8 M480.8,764.90 V772.90"/>
<path d="M535.8,768.90 H543.8 M539.8,764.90 V772.90"/>
<path d="M570.8,768.90 H578.8 M574.8,764.90 V772.90"/>
<path d="M630.9,768.90 H638.9 M634.9,764.90 V772.90"/>
<path d="M973.9,768.90 H981.9 M977.9,764.90 V772.90"/>
<path d="M1069.7,768.90 H1077.7 M1073.7,764.90 V772.90"/>
<path d="M1108.9,768.90 H1116.9 M1112.9,764.90 V772.90"/>
<path d="M1178.0,768.90 H1186.0 M1182.0,764.90 V772.90"/>
<path d="M1255.8,768.90 H1263.8 M1259.8,764.90 V772.90"/>
<path d="M1466.8,768.90 H1474.8 M1470.8,764.90 V772.90"/>
<path d="M427.7,752.10 H435.7 M431.7,748.10 V756.10"/>
<path d="M539.8,752.10 H547.8 M543.8,748.10 V756.10"/>
<path d="M575.0,752.10 H583.0 M579.0,748.10 V756.10"/>
<path d="M703.6,752.10 H711.6 M707.6,748.10 V756.10"/>
<path d="M1094.8,752.10 H1102.8 M1098.8,748.10 V756.10"/>
<path d="M1270.9,752.10 H1278.9 M1274.9,748.10 V756.10"/>
<path d="M1477.0,752.10 H1485.0 M1481.0,748.10 V756.10"/>
<path d="M437.7,736.00 H445.7 M441.7,732.00 V740.00"/>
<path d="M630.9,736.00 H638.9 M634.9,732.00 V740.00"/>
<path d="M1038.8,736.00 H1046.8 M1042.8,732.00 V740.00"/>
<path d="M1168.0,736.00 H1176.0 M1172.0,732.00 V740.00"/>
<path d="M1274.7,736.00 H1282.7 M1278.7,732.00 V740.00"/>
<path d="M1496.8,736.00 H1504.8 M1500.8,732.00 V740.00"/>
<path d="M598.8,720.00 H606.8 M602.8,716.00 V724.00"/>
<path d="M726.7,720.00 H734.7 M730.7,716.00 V724.00"/>
<path d="M1187.8,720.00 H1195.8 M1191.8,716.00 V724.00"/>
<path d="M1270.9,720.00 H1278.9 M1274.9,716.00 V724.00"/>
<path d="M687.7,703.00 H695.7 M691.7,699.00 V707.00"/>
<path d="M1102.0,703.00 H1110.0 M1106.0,699.00 V707.00"/>
<path d="M1206.9,703.00 H1214.9 M1210.9,699.00 V707.00"/>
<path d="M1299.8,703.00 H1307.8 M1303.8,699.00 V707.00"/>
<path d="M1118.7,687.00 H1126.7 M1122.7,683.00 V691.00"/>
</g>
<g font-family="Liberation Sans" font-size="11.1" fill="#fff">
<text transform="translate(106.78,831.30) scale(0.918,1)">KSE</text>
<text transform="translate(244.44,831.30) scale(0.959,1)">ETA</text>
<text transform="translate(483.92,831.30) scale(1.003,1)">NZC</text>
<text transform="translate(698.66,831.30) scale(1.007,1)">NDA</text>
<text transform="translate(843.88,831.30) scale(0.89,1)">SPE</text>
<text transform="translate(935.05,831.30) scale(0.991,1)">ARD</text>
<text transform="translate(1013.65,831.30) scale(0.925,1)">EGE</text>
<text transform="translate(1131.48,831.30) scale(0.988,1)">NTA</text>
<text transform="translate(1271.90,831.30) scale(0.996,1)">MON</text>
<text transform="translate(1332.39,831.30) scale(0.942,1)">URS</text>
<text transform="translate(1400.58,831.30) scale(0.984,1)">AHY</text>
<text transform="translate(1473.03,831.30) scale(0.986,1)">GUM</text>
<text transform="translate(1523.49,831.30) scale(0.98,1)">OHY</text>
<text transform="translate(1724.75,831.30) scale(0.974,1)">XHE</text>
<text transform="translate(1760.92,831.30) scale(0.964,1)">EVI</text>
<text transform="translate(165.98,815.40) scale(1.002,1)">AVB</text>
<text transform="translate(245.63,815.40) scale(0.901,1)">ELY</text>
<text transform="translate(312.02,815.40) scale(0.978,1)">CAM</text>
<text transform="translate(421.20,815.40) scale(0.935,1)">SSG</text>
<text transform="translate(567.72,815.40) scale(0.935,1)">PCA</text>
<text transform="translate(709.15,815.40) scale(1.009,1)">AUD</text>
<text transform="translate(797.90,815.40) scale(0.987,1)">AUR</text>
<text transform="translate(919.53,815.40) scale(0.985,1)">DSX</text>
<text transform="translate(999.01,815.40) scale(0.97,1)">OCU</text>
<text transform="translate(1126.47,815.40) scale(0.957,1)">OER</text>
<text transform="translate(1242.98,815.40) scale(1.01,1)">DKD</text>
<text transform="translate(1292.60,815.40) scale(0.987,1)">DSV</text>
<text transform="translate(1343.76,815.40) scale(0.939,1)">ALY</text>
<text transform="translate(1399.25,815.40) scale(0.948,1)">ILE</text>
<text transform="translate(1460.92,815.40) scale(0.926,1)">SCC</text>
<text transform="translate(1548.63,815.40) scale(0.944,1)">FEV</text>
<text transform="translate(166.55,799.50) scale(0.901,1)">LYR</text>
<text transform="translate(362.52,799.50) scale(0.91,1)">JMC</text>
<text transform="translate(550.46,799.50) scale(0.84,1)">JPE</text>
<text transform="translate(660.89,799.50) scale(0.951,1)">PAU</text>
<text transform="translate(764.46,799.50) scale(1.004,1)">NIA</text>
<text transform="translate(1039.83,799.50) scale(0.959,1)">STA</text>
<text transform="translate(1193.69,799.50) scale(0.989,1)">NOO</text>
<text transform="translate(1340.86,799.50) scale(0.976,1)">COM</text>
<text transform="translate(1458.98,799.50) scale(0.957,1)">NCC</text>
<text transform="translate(1553.82,799.50) scale(0.954,1)">FED</text>
<text transform="translate(196.83,782.50) scale(1.008,1)">HVI</text>
<text transform="translate(403.45,782.50) scale(0.977,1)">ARI</text>
<text transform="translate(518.87,782.50) scale(0.971,1)">SZC</text>
<text transform="translate(607.79,782.50) scale(0.948,1)">CAP</text>
<text transform="translate(806.80,782.50) scale(0.962,1)">NUE</text>
<text transform="translate(949.78,782.50) scale(0.981,1)">OCT</text>
<text transform="translate(1050.07,782.50) scale(0.972,1)">ORI</text>
<text transform="translate(1174.02,782.50) scale(0.998,1)">AMO</text>
<text transform="translate(1243.80,782.50) scale(0.946,1)">DPC</text>
<text transform="translate(1320.22,782.50) scale(1.009,1)">XVI</text>
<text transform="translate(1395.55,782.50) scale(0.992,1)">QUA</text>
<text transform="translate(1548.30,782.50) scale(1.014,1)">AAN</text>
<text transform="translate(342.39,766.40) scale(1.006,1)">TAH</text>
<text transform="translate(421.91,766.40) scale(0.897,1)">JEA</text>
<text transform="translate(474.33,766.40) scale(0.862,1)">JIP</text>
<text transform="translate(528.71,766.40) scale(0.884,1)">PPS</text>
<text transform="translate(567.85,766.40) scale(0.977,1)">ZCS</text>
<text transform="translate(620.86,766.40) scale(0.991,1)">GDR</text>
<text transform="translate(959.51,766.40) scale(0.97,1)">DRA</text>
<text transform="translate(1061.76,766.40) scale(0.957,1)">LUM</text>
<text transform="translate(1101.91,766.40) scale(0.927,1)">RPU</text>
<text transform="translate(1166.18,766.40) scale(1.011,1)">THA</text>
<text transform="translate(1248.74,766.40) scale(0.922,1)">PSU</text>
<text transform="translate(1460.08,766.40) scale(0.94,1)">XCB</text>
<text transform="translate(422.52,749.60) scale(0.849,1)">JRC</text>
<text transform="translate(533.04,749.60) scale(0.975,1)">CAN</text>
<text transform="translate(567.97,749.60) scale(0.947,1)">FAN</text>
<text transform="translate(670.65,749.60) scale(0.918,1)">PER</text>
<text transform="translate(1039.43,749.60) scale(0.965,1)">CTA</text>
<text transform="translate(1253.45,749.60) scale(0.979,1)">HYD</text>
<text transform="translate(1469.27,749.60) scale(0.998,1)">XUM</text>
<text transform="translate(429.59,733.50) scale(0.964,1)">COR</text>
<text transform="translate(646.73,733.50) scale(0.976,1)">SDA</text>
<text transform="translate(1039.73,733.50) scale(0.997,1)">LMI</text>
<text transform="translate(1155.61,733.50) scale(0.955,1)">LEO</text>
<text transform="translate(1263.59,733.50) scale(0.954,1)">EHY</text>
<text transform="translate(1489.44,733.50) scale(0.95,1)">ECV</text>
<text transform="translate(594.11,717.50) scale(0.926,1)">JXA</text>
<text transform="translate(704.66,717.50) scale(0.921,1)">KCG</text>
<text transform="translate(1145.07,717.50) scale(1.016,1)">AND</text>
<text transform="translate(1262.72,717.50) scale(1.015,1)">DAD</text>
<text transform="translate(657.99,700.50) scale(0.936,1)">ERI</text>
<text transform="translate(1098.00,700.50) scale(0.972,1)">SLD</text>
<text transform="translate(1200.00,700.50) scale(0.946,1)">ORS</text>
<text transform="translate(1288.19,700.50) scale(0.965,1)">GEM</text>
<text transform="translate(1111.07,684.50) scale(0.966,1)">KUM</text>
</g>
<rect x="20.4" y="641.6" width="1764.8" height="200.79999999999995" fill="none" stroke="#fff" stroke-width="1.3"/>
<g stroke="#fff" stroke-width="1.1">
<path d="M19.90,842.4 V847.3"/>
<path d="M265.10,842.4 V847.3"/>
<path d="M510.30,842.4 V847.3"/>
<path d="M755.50,842.4 V847.3"/>
<path d="M1000.70,842.4 V847.3"/>
<path d="M1245.90,842.4 V847.3"/>
<path d="M1491.10,842.4 V847.3"/>
<path d="M1736.30,842.4 V847.3"/>
</g>
<g font-family="Liberation Sans" font-size="14" fill="#fff" text-anchor="middle">
<text x="20.20" y="862">0</text>
<text x="265.40" y="862">50</text>
<text x="510.60" y="862">100</text>
<text x="755.80" y="862">150</text>
<text x="1001.00" y="862">200</text>
<text x="1246.20" y="862">250</text>
<text x="1491.40" y="862">300</text>
<text x="1736.60" y="862">350</text>
</g>
<text transform="translate(902.4,882) scale(1.13,1)" font-family="Liberation Sans" font-size="13.9" fill="#fff" text-anchor="middle">Solar longitude (deg)</text>
</svg></body></html>
